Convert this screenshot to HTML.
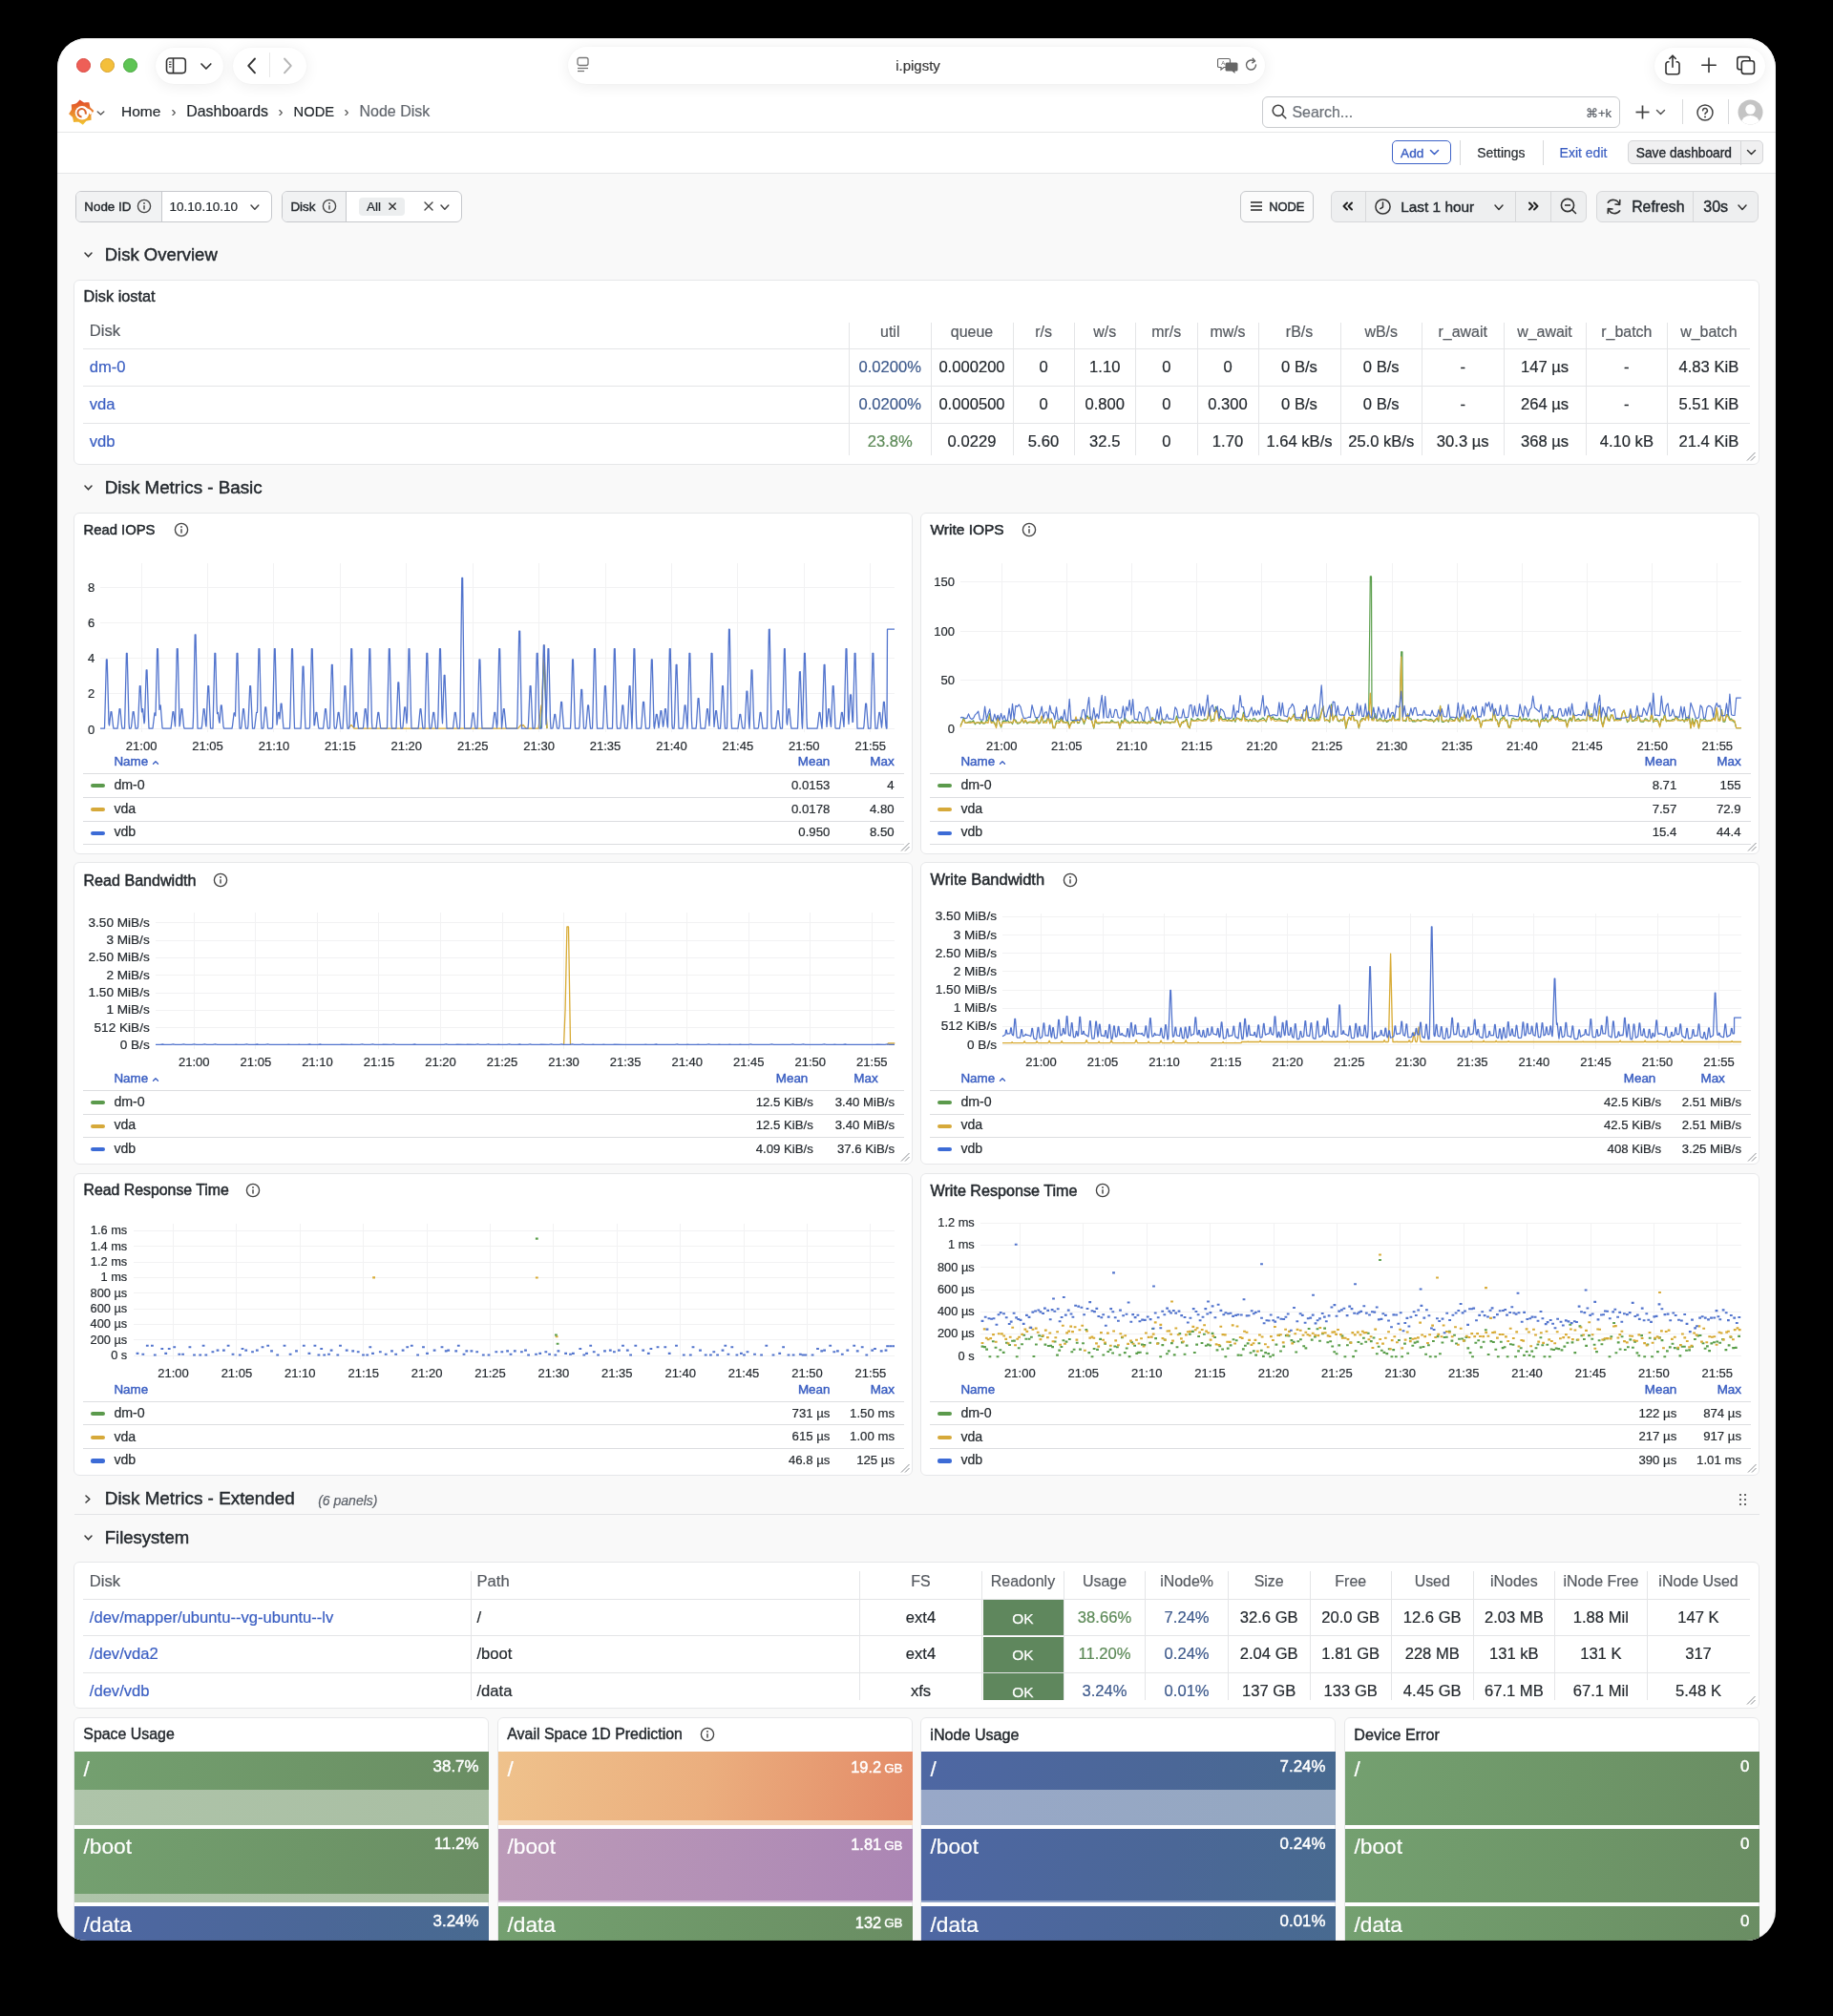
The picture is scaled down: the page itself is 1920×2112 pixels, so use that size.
<!DOCTYPE html><html><head><meta charset="utf-8"><style>
html,body{margin:0;padding:0;background:#000;width:1920px;height:2112px;overflow:hidden;}
.t{position:absolute;white-space:nowrap;line-height:1;font-family:"Liberation Sans", sans-serif;-webkit-text-stroke:0.2px currentColor;}
#win{position:absolute;left:60px;top:40px;width:1800px;height:1993px;border-radius:31px;overflow:hidden;background:#f9f9f9;}
#abs{position:absolute;left:-60px;top:-40px;width:1920px;height:2112px;will-change:transform;}
</style></head><body><div id="win"><div id="abs">
<div style="position:absolute;left:60.00px;top:40.00px;width:1800.00px;height:141.00px;background:#ffffff;"></div>
<div style="position:absolute;left:60.00px;top:138.00px;width:1800.00px;height:1.00px;background:#e6e7e8;"></div>
<div style="position:absolute;left:60.00px;top:181.00px;width:1800.00px;height:1.00px;background:#e6e7e8;"></div>
<div style="position:absolute;left:80.00px;top:60.80px;width:15.00px;height:15.00px;border-radius:50%;background:#ee5f57;box-sizing:border-box;border:0.5px solid #d9473f;"></div>
<div style="position:absolute;left:104.80px;top:60.80px;width:15.00px;height:15.00px;border-radius:50%;background:#f4bf3a;box-sizing:border-box;border:0.5px solid #d8a12c;"></div>
<div style="position:absolute;left:129.10px;top:60.80px;width:15.00px;height:15.00px;border-radius:50%;background:#5ec454;box-sizing:border-box;border:0.5px solid #49a83f;"></div>
<div style="position:absolute;left:163.00px;top:49.50px;width:71.00px;height:38.00px;background:#ffffff;border-radius:20px;box-shadow:0 2px 16px rgba(0,0,0,0.075),0 0 2px rgba(0,0,0,0.03);"></div>
<div style="position:absolute;left:243.70px;top:49.50px;width:77.00px;height:38.00px;background:#ffffff;border-radius:20px;box-shadow:0 2px 16px rgba(0,0,0,0.075),0 0 2px rgba(0,0,0,0.03);"></div>
<div style="position:absolute;left:595.00px;top:49.00px;width:730.00px;height:39.00px;background:#ffffff;border-radius:20px;box-shadow:0 2px 16px rgba(0,0,0,0.075),0 0 2px rgba(0,0,0,0.03);"></div>
<div style="position:absolute;left:1733.00px;top:49.50px;width:116.00px;height:38.00px;background:#ffffff;border-radius:20px;box-shadow:0 2px 16px rgba(0,0,0,0.075),0 0 2px rgba(0,0,0,0.03);"></div>
<svg style="position:absolute;left:172.50px;top:59.00px;" width="24.00" height="20.00" viewBox="0 0 24.00 20.00"><rect x="1.5" y="2" width="19.8" height="15.6" rx="3.3" fill="none" stroke="#333333" stroke-width="1.6"/><line x1="8.5" y1="2" x2="8.5" y2="18" stroke="#333333" stroke-width="1.6"/><line x1="4" y1="6" x2="6.5" y2="6" stroke="#333333" stroke-width="1.1"/><line x1="4" y1="8.5" x2="6.5" y2="8.5" stroke="#333333" stroke-width="1.1"/><line x1="4" y1="11" x2="6.5" y2="11" stroke="#333333" stroke-width="1.1"/></svg>
<svg style="position:absolute;left:208.50px;top:63.50px;" width="14.00" height="12.00" viewBox="0 0 14.00 12.00"><polyline points="2,3 6.9,8 11.8,3" fill="none" stroke="#333333" stroke-width="1.7" stroke-linecap="round" stroke-linejoin="round"/></svg>
<svg style="position:absolute;left:255.50px;top:59.00px;" width="16.00" height="20.00" viewBox="0 0 16.00 20.00"><polyline points="11,2.5 4.2,9.9 11,17.3" fill="none" stroke="#333333" stroke-width="1.9" stroke-linecap="round" stroke-linejoin="round"/></svg>
<div style="position:absolute;left:282.00px;top:55.00px;width:1.00px;height:26.00px;background:#e8e8e8;"></div>
<svg style="position:absolute;left:293.00px;top:59.00px;" width="16.00" height="20.00" viewBox="0 0 16.00 20.00"><polyline points="5,2.5 11.8,9.9 5,17.3" fill="none" stroke="#b5b5b5" stroke-width="1.9" stroke-linecap="round" stroke-linejoin="round"/></svg>
<svg style="position:absolute;left:603.00px;top:59.00px;" width="16.00" height="18.00" viewBox="0 0 16.00 18.00"><rect x="2" y="1.5" width="11" height="8" rx="2" fill="none" stroke="#777" stroke-width="1.3"/><line x1="2" y1="12.5" x2="13" y2="12.5" stroke="#777" stroke-width="1.3"/><line x1="2" y1="15.5" x2="9" y2="15.5" stroke="#777" stroke-width="1.3"/></svg>
<div class="t" style="top:60.80px;font-size:15.00px;color:#3a3a3a;left:461.50px;width:1000px;text-align:center;">i.pigsty</div>
<svg style="position:absolute;left:1275.00px;top:59.00px;" width="24.00" height="18.00" viewBox="0 0 24.00 18.00"><path d="M2 2.5h10a1.5 1.5 0 0 1 1.5 1.5v6a1.5 1.5 0 0 1-1.5 1.5H7l-3 2.5v-2.5H2A1.5 1.5 0 0 1 .5 10V4A1.5 1.5 0 0 1 2 2.5z" fill="none" stroke="#666" stroke-width="1.2"/><path d="M10 6.5h10a1.5 1.5 0 0 1 1.5 1.5v6a1.5 1.5 0 0 1-1.5 1.5h-1.5v2.5l-3-2.5H10A1.5 1.5 0 0 1 8.5 14V8A1.5 1.5 0 0 1 10 6.5z" fill="#666"/><text x="4.2" y="9" font-size="6" fill="#666" font-family="Liberation Sans">A</text></svg>
<svg style="position:absolute;left:1302.00px;top:59.00px;" width="18.00" height="18.00" viewBox="0 0 18.00 18.00"><path d="M13.5 9a5 5 0 1 1-2.2-4.1" fill="none" stroke="#666" stroke-width="1.4" stroke-linecap="round"/><polyline points="10.2,2.2 12.6,4.9 9.8,6.8" fill="none" stroke="#666" stroke-width="1.4" stroke-linecap="round" stroke-linejoin="round"/></svg>
<svg style="position:absolute;left:1741.50px;top:55.00px;" width="20.00" height="26.00" viewBox="0 0 20.00 26.00"><path d="M6.5 9.8H5.2a2.2 2.2 0 0 0-2.2 2.2v8.6a2.2 2.2 0 0 0 2.2 2.2h9.6a2.2 2.2 0 0 0 2.2-2.2V12a2.2 2.2 0 0 0-2.2-2.2h-1.3" fill="none" stroke="#333333" stroke-width="1.6"/><line x1="10" y1="3.5" x2="10" y2="15.3" stroke="#333333" stroke-width="1.6" stroke-linecap="round"/><polyline points="6.8,6.5 10,3.2 13.2,6.5" fill="none" stroke="#333333" stroke-width="1.6" stroke-linecap="round" stroke-linejoin="round"/></svg>
<svg style="position:absolute;left:1780.50px;top:59.00px;" width="18.00" height="18.00" viewBox="0 0 18.00 18.00"><line x1="9" y1="2" x2="9" y2="16.5" stroke="#333333" stroke-width="1.6" stroke-linecap="round"/><line x1="1.8" y1="9.2" x2="16.2" y2="9.2" stroke="#333333" stroke-width="1.6" stroke-linecap="round"/></svg>
<svg style="position:absolute;left:1817.00px;top:57.00px;" width="23.00" height="23.00" viewBox="0 0 23.00 23.00"><rect x="2.8" y="2.6" width="13.2" height="13.2" rx="2.6" fill="#fff" stroke="#333333" stroke-width="1.6"/><rect x="7.3" y="6.8" width="13.2" height="13.6" rx="2.6" fill="#fff" stroke="#333333" stroke-width="1.6"/></svg>
<svg style="position:absolute;left:71.50px;top:104.30px;" width="27.00" height="27.00" viewBox="0 0 27.00 27.00"><defs><linearGradient id="lg" x1="0" y1="0" x2="0" y2="1"><stop offset="0" stop-color="#e0482a"/><stop offset="0.55" stop-color="#eb8a2c"/><stop offset="1" stop-color="#f2c833"/></linearGradient></defs><path fill="url(#lg)" d="M11.59 0.50 L14.05 2.13 L16.03 3.39 L18.38 3.33 L21.33 3.20 L21.91 6.09 L22.43 8.38 L24.12 10.00 L26.30 11.99 L24.67 14.45 L23.41 16.43 L23.47 18.78 L23.60 21.73 L20.71 22.31 L18.42 22.83 L16.80 24.52 L14.81 26.70 L12.35 25.07 L10.37 23.81 L8.02 23.87 L5.07 24.00 L4.49 21.11 L3.97 18.82 L2.28 17.20 L0.10 15.21 L1.73 12.75 L2.99 10.77 L2.93 8.42 L2.80 5.47 L5.69 4.89 L7.98 4.37 L9.60 2.68Z"/><circle cx="14" cy="14.3" r="7.3" fill="#fff"/><path d="M19.3 11.2 A6 6 0 0 1 23.6 15.5" fill="none" stroke="#fff" stroke-width="3.2"/><path d="M17.6 15.6 A4.2 4.2 0 1 0 13.6 18.4" fill="none" stroke="#d9652c" stroke-width="2"/></svg>
<svg style="position:absolute;left:101.00px;top:114.50px;" width="9.00" height="7.00" viewBox="0 0 9.00 7.00"><polyline points="1.2,2 4.5,5 7.8,2" fill="none" stroke="#555" stroke-width="1.4" stroke-linecap="round" stroke-linejoin="round"/></svg>
<div class="t" style="top:109.18px;font-size:15.50px;color:#24292e;left:127.00px;">Home</div>
<div class="t" style="top:108.80px;font-size:15.00px;color:#555;left:-318.00px;width:1000px;text-align:center;">›</div>
<div class="t" style="top:108.84px;font-size:15.90px;color:#24292e;left:195.30px;">Dashboards</div>
<div class="t" style="top:108.80px;font-size:15.00px;color:#555;left:-206.00px;width:1000px;text-align:center;">›</div>
<div class="t" style="top:109.86px;font-size:14.70px;color:#24292e;left:307.60px;">NODE</div>
<div class="t" style="top:108.80px;font-size:15.00px;color:#555;left:-137.00px;width:1000px;text-align:center;">›</div>
<div class="t" style="top:108.76px;font-size:16.00px;color:#62676e;left:376.50px;">Node Disk</div>
<div style="position:absolute;left:1322.00px;top:101.00px;width:375.00px;height:33.00px;box-sizing:border-box;border:1px solid #c9cbce;border-radius:6px;background:#fff;"></div>
<svg style="position:absolute;left:1331.00px;top:108.00px;" width="18.00" height="18.00" viewBox="0 0 18.00 18.00"><circle cx="7.8" cy="7.8" r="5.6" fill="none" stroke="#444" stroke-width="1.6"/><line x1="12" y1="12" x2="15.8" y2="15.8" stroke="#444" stroke-width="1.6" stroke-linecap="round"/></svg>
<div class="t" style="top:109.84px;font-size:15.90px;color:#6b7077;left:1353.50px;">Search...</div>
<div class="t" style="top:111.50px;font-size:13.00px;color:#5b6068;left:688.00px;width:1000px;text-align:right;">⌘+k</div>
<svg style="position:absolute;left:1711.00px;top:108.00px;" width="19.00" height="19.00" viewBox="0 0 19.00 19.00"><line x1="9.5" y1="2.5" x2="9.5" y2="16.5" stroke="#444" stroke-width="1.7"/><line x1="2.5" y1="9.5" x2="16.5" y2="9.5" stroke="#444" stroke-width="1.7"/></svg>
<svg style="position:absolute;left:1734.00px;top:113.00px;" width="11.00" height="9.00" viewBox="0 0 11.00 9.00"><polyline points="1.5,2.5 5.5,6.5 9.5,2.5" fill="none" stroke="#555" stroke-width="1.5" stroke-linecap="round" stroke-linejoin="round"/></svg>
<div style="position:absolute;left:1761.50px;top:104.00px;width:1.00px;height:26.00px;background:#d8d9db;"></div>
<svg style="position:absolute;left:1776.00px;top:108.00px;" width="20.00" height="20.00" viewBox="0 0 20.00 20.00"><circle cx="10" cy="10" r="8" fill="none" stroke="#444" stroke-width="1.5"/><path d="M7.6 7.8a2.4 2.4 0 1 1 3.4 2.2c-.7.4-1 .8-1 1.6" fill="none" stroke="#444" stroke-width="1.5" stroke-linecap="round"/><circle cx="10" cy="14.4" r="1" fill="#444"/></svg>
<div style="position:absolute;left:1809.50px;top:104.00px;width:1.00px;height:26.00px;background:#d8d9db;"></div>
<svg style="position:absolute;left:1820.00px;top:104.00px;" width="27.00" height="27.00" viewBox="0 0 27.00 27.00"><defs><clipPath id="av"><circle cx="13.5" cy="13.5" r="13"/></clipPath></defs><circle cx="13.5" cy="13.5" r="13" fill="#c4c4c4"/><g clip-path="url(#av)"><circle cx="13.5" cy="10.5" r="5.2" fill="#fff"/><ellipse cx="13.5" cy="25" rx="9.5" ry="8" fill="#fff"/></g></svg>
<div style="position:absolute;left:1458.30px;top:147.30px;width:62.00px;height:25.20px;box-sizing:border-box;border:1px solid #3d62c8;border-radius:5px;"></div>
<div class="t" style="top:154.00px;font-size:13.70px;color:#3a5ec2;left:1467.00px;-webkit-text-stroke:0.35px #3a5ec2;">Add</div>
<svg style="position:absolute;left:1497.00px;top:155.00px;" width="11.00" height="9.00" viewBox="0 0 11.00 9.00"><polyline points="1.5,2.5 5.5,6.5 9.5,2.5" fill="none" stroke="#3d62c8" stroke-width="1.6" stroke-linecap="round" stroke-linejoin="round"/></svg>
<div style="position:absolute;left:1529.00px;top:147.00px;width:1.00px;height:26.00px;background:#d8d9db;"></div>
<div class="t" style="top:153.59px;font-size:13.95px;color:#24292e;left:1547.20px;">Settings</div>
<div style="position:absolute;left:1616.00px;top:147.00px;width:1.00px;height:26.00px;background:#d8d9db;"></div>
<div class="t" style="top:152.85px;font-size:14.00px;color:#3a5ec2;left:1633.60px;">Exit edit</div>
<div style="position:absolute;left:1705.30px;top:147.30px;width:141.40px;height:25.20px;box-sizing:border-box;border:1px solid #d5d6d8;border-radius:5px;background:#f0f0f1;"></div>
<div style="position:absolute;left:1822.50px;top:147.50px;width:1.00px;height:25.00px;background:#d5d6d8;"></div>
<div class="t" style="top:154.06px;font-size:13.75px;color:#24292e;left:1713.80px;-webkit-text-stroke:0.35px #24292e;">Save dashboard</div>
<svg style="position:absolute;left:1829.00px;top:155.00px;" width="11.00" height="9.00" viewBox="0 0 11.00 9.00"><polyline points="1.5,2.5 5.5,6.5 9.5,2.5" fill="none" stroke="#333" stroke-width="1.5" stroke-linecap="round" stroke-linejoin="round"/></svg>
<div style="position:absolute;left:78.50px;top:199.80px;width:206.00px;height:33.00px;box-sizing:border-box;border:1px solid #c6c8cc;border-radius:6px;background:#fff;"></div>
<div style="position:absolute;left:79.50px;top:200.80px;width:89.00px;height:31.00px;background:#f1f2f3;border-radius:5px 0 0 5px;border-right:1px solid #c6c8cc;"></div>
<div class="t" style="top:209.86px;font-size:13.40px;color:#24292e;left:88.30px;-webkit-text-stroke:0.40px #24292e;">Node ID</div>
<svg style="position:absolute;left:143.20px;top:208.20px;" width="16.00" height="16.00" viewBox="0 0 16.00 16.00"><circle cx="8" cy="8" r="6.60" fill="none" stroke="#444" stroke-width="1.35"/><line x1="8" y1="7.7" x2="8" y2="10.9" stroke="#444" stroke-width="1.45" stroke-linecap="round"/><circle cx="8" cy="5.0" r="0.9" fill="#444"/></svg>
<div class="t" style="top:209.87px;font-size:13.50px;color:#24292e;left:177.60px;">10.10.10.10</div>
<svg style="position:absolute;left:260.80px;top:212.66px;" width="11.80" height="8.29" viewBox="0 0 11.80 8.29"><polyline points="2,2 5.90,6.29 9.80,2" fill="none" stroke="#444" stroke-width="1.50" stroke-linecap="round" stroke-linejoin="round"/></svg>
<div style="position:absolute;left:295.00px;top:199.80px;width:189.00px;height:33.00px;box-sizing:border-box;border:1px solid #c6c8cc;border-radius:6px;background:#fff;"></div>
<div style="position:absolute;left:296.00px;top:200.80px;width:66.00px;height:31.00px;background:#f1f2f3;border-radius:5px 0 0 5px;border-right:1px solid #c6c8cc;"></div>
<div class="t" style="top:209.86px;font-size:13.40px;color:#24292e;left:304.40px;-webkit-text-stroke:0.40px #24292e;">Disk</div>
<svg style="position:absolute;left:337.20px;top:208.20px;" width="16.00" height="16.00" viewBox="0 0 16.00 16.00"><circle cx="8" cy="8" r="6.60" fill="none" stroke="#444" stroke-width="1.35"/><line x1="8" y1="7.7" x2="8" y2="10.9" stroke="#444" stroke-width="1.45" stroke-linecap="round"/><circle cx="8" cy="5.0" r="0.9" fill="#444"/></svg>
<div style="position:absolute;left:375.70px;top:207.00px;width:48.00px;height:18.60px;background:#eceeef;border-radius:4px;"></div>
<div class="t" style="top:209.57px;font-size:13.50px;color:#24292e;left:384.00px;">All</div>
<svg style="position:absolute;left:406.20px;top:211.20px;" width="10.20" height="10.20" viewBox="0 0 10.20 10.20"><line x1="2" y1="2" x2="8.20" y2="8.20" stroke="#333" stroke-width="1.50" stroke-linecap="round"/><line x1="8.20" y1="2" x2="2" y2="8.20" stroke="#333" stroke-width="1.50" stroke-linecap="round"/></svg>
<svg style="position:absolute;left:443.00px;top:210.30px;" width="12.00" height="12.00" viewBox="0 0 12.00 12.00"><line x1="2" y1="2" x2="10.00" y2="10.00" stroke="#444" stroke-width="1.40" stroke-linecap="round"/><line x1="10.00" y1="2" x2="2" y2="10.00" stroke="#444" stroke-width="1.40" stroke-linecap="round"/></svg>
<svg style="position:absolute;left:460.40px;top:212.66px;" width="11.80" height="8.29" viewBox="0 0 11.80 8.29"><polyline points="2,2 5.90,6.29 9.80,2" fill="none" stroke="#444" stroke-width="1.50" stroke-linecap="round" stroke-linejoin="round"/></svg>
<div style="position:absolute;left:1298.60px;top:199.80px;width:77.00px;height:33.00px;box-sizing:border-box;border:1px solid #c5c7ca;border-radius:6px;background:#fbfbfb;"></div>
<svg style="position:absolute;left:1308.00px;top:208.00px;" width="16.00" height="16.00" viewBox="0 0 16.00 16.00"><line x1="2" y1="4" x2="14" y2="4" stroke="#333" stroke-width="1.6"/><line x1="2" y1="8" x2="14" y2="8" stroke="#333" stroke-width="1.6"/><line x1="2" y1="12" x2="14" y2="12" stroke="#333" stroke-width="1.6"/></svg>
<div class="t" style="top:210.58px;font-size:12.90px;color:#24292e;left:1329.20px;-webkit-text-stroke:0.45px #24292e;">NODE</div>
<div style="position:absolute;left:1393.90px;top:199.80px;width:268.20px;height:33.00px;box-sizing:border-box;border:1px solid #d7d8da;border-radius:6px;background:#eeeff0;"></div>
<div style="position:absolute;left:1429.60px;top:200.50px;width:1.00px;height:31.50px;background:#d7d8da;"></div>
<div style="position:absolute;left:1587.30px;top:200.50px;width:1.00px;height:31.50px;background:#d7d8da;"></div>
<div style="position:absolute;left:1623.60px;top:200.50px;width:1.00px;height:31.50px;background:#d7d8da;"></div>
<svg style="position:absolute;left:1402.00px;top:208.00px;" width="20.00" height="16.00" viewBox="0 0 20.00 16.00"><polyline points="9,4.5 5.5,8 9,11.5" fill="none" stroke="#222" stroke-width="2" stroke-linecap="round" stroke-linejoin="round"/><polyline points="14,4.5 10.5,8 14,11.5" fill="none" stroke="#222" stroke-width="2" stroke-linecap="round" stroke-linejoin="round"/></svg>
<svg style="position:absolute;left:1439.00px;top:207.00px;" width="19.00" height="19.00" viewBox="0 0 19.00 19.00"><circle cx="9.5" cy="9.5" r="7.6" fill="none" stroke="#333" stroke-width="1.5"/><polyline points="9.5,5 9.5,10 6.8,11.6" fill="none" stroke="#333" stroke-width="1.5" stroke-linecap="round" stroke-linejoin="round"/></svg>
<div class="t" style="top:209.26px;font-size:15.40px;color:#24292e;left:1467.20px;-webkit-text-stroke:0.40px #24292e;">Last 1 hour</div>
<svg style="position:absolute;left:1563.60px;top:212.60px;" width="12.00" height="8.40" viewBox="0 0 12.00 8.40"><polyline points="2,2 6.00,6.40 10.00,2" fill="none" stroke="#333" stroke-width="1.50" stroke-linecap="round" stroke-linejoin="round"/></svg>
<svg style="position:absolute;left:1596.00px;top:208.00px;" width="20.00" height="16.00" viewBox="0 0 20.00 16.00"><polyline points="6,4.5 9.5,8 6,11.5" fill="none" stroke="#222" stroke-width="2" stroke-linecap="round" stroke-linejoin="round"/><polyline points="11,4.5 14.5,8 11,11.5" fill="none" stroke="#222" stroke-width="2" stroke-linecap="round" stroke-linejoin="round"/></svg>
<svg style="position:absolute;left:1633.00px;top:206.00px;" width="20.00" height="20.00" viewBox="0 0 20.00 20.00"><circle cx="9" cy="9" r="6.6" fill="none" stroke="#333" stroke-width="1.6"/><line x1="6" y1="9" x2="12" y2="9" stroke="#333" stroke-width="1.6"/><line x1="13.8" y1="13.8" x2="17.5" y2="17.5" stroke="#333" stroke-width="1.6" stroke-linecap="round"/></svg>
<div style="position:absolute;left:1671.90px;top:199.80px;width:170.50px;height:33.00px;box-sizing:border-box;border:1px solid #d7d8da;border-radius:6px;background:#eeeff0;"></div>
<div style="position:absolute;left:1773.40px;top:200.50px;width:1.00px;height:31.50px;background:#d7d8da;"></div>
<svg style="position:absolute;left:1680.00px;top:206.00px;" width="21.00" height="21.00" viewBox="0 0 21.00 21.00"><path d="M16.3 8.2A6.8 6.8 0 0 0 4.3 6.2" fill="none" stroke="#333" stroke-width="1.6" stroke-linecap="round"/><polyline points="16.8,3.6 16.6,8.4 12,8" fill="none" stroke="#333" stroke-width="1.6" stroke-linecap="round" stroke-linejoin="round"/><path d="M4.7 12.8a6.8 6.8 0 0 0 12 2" fill="none" stroke="#333" stroke-width="1.6" stroke-linecap="round"/><polyline points="4.2,17.4 4.4,12.6 9,13" fill="none" stroke="#333" stroke-width="1.6" stroke-linecap="round" stroke-linejoin="round"/></svg>
<div class="t" style="top:208.93px;font-size:15.80px;color:#24292e;left:1709.20px;-webkit-text-stroke:0.40px #24292e;">Refresh</div>
<div class="t" style="top:209.26px;font-size:16.00px;color:#24292e;left:1784.30px;-webkit-text-stroke:0.40px #24292e;">30s</div>
<svg style="position:absolute;left:1818.70px;top:212.60px;" width="12.00" height="8.40" viewBox="0 0 12.00 8.40"><polyline points="2,2 6.00,6.40 10.00,2" fill="none" stroke="#333" stroke-width="1.50" stroke-linecap="round" stroke-linejoin="round"/></svg>
<svg style="position:absolute;left:86.80px;top:263.18px;" width="11.00" height="7.85" viewBox="0 0 11.00 7.85"><polyline points="2,2 5.50,5.85 9.00,2" fill="none" stroke="#333" stroke-width="1.50" stroke-linecap="round" stroke-linejoin="round"/></svg>
<div class="t" style="top:258.27px;font-size:18.47px;color:#24292e;left:109.80px;-webkit-text-stroke:0.45px #24292e;">Disk Overview</div>
<svg style="position:absolute;left:86.80px;top:507.37px;" width="11.00" height="7.85" viewBox="0 0 11.00 7.85"><polyline points="2,2 5.50,5.85 9.00,2" fill="none" stroke="#333" stroke-width="1.50" stroke-linecap="round" stroke-linejoin="round"/></svg>
<div class="t" style="top:502.19px;font-size:18.80px;color:#24292e;left:109.80px;-webkit-text-stroke:0.45px #24292e;">Disk Metrics - Basic</div>
<svg style="position:absolute;left:88.38px;top:1564.50px;" width="7.85" height="11.00" viewBox="0 0 7.85 11.00"><polyline points="2,2 5.85,5.50 2,9.00" fill="none" stroke="#333" stroke-width="1.50" stroke-linecap="round" stroke-linejoin="round"/></svg>
<div class="t" style="top:1560.85px;font-size:18.85px;color:#24292e;left:109.80px;-webkit-text-stroke:0.45px #24292e;">Disk Metrics - Extended</div>
<div class="t" style="top:1564.65px;font-size:14.00px;color:#5b6068;font-style:italic;left:333.20px;">(6 panels)</div>
<div style="position:absolute;left:77.50px;top:1586.00px;width:1765.00px;height:1.00px;background:#e3e4e6;"></div>
<div style="position:absolute;left:1821.70px;top:1564.50px;width:2.60px;height:2.60px;border-radius:50%;background:#333;"></div>
<div style="position:absolute;left:1821.70px;top:1569.50px;width:2.60px;height:2.60px;border-radius:50%;background:#333;"></div>
<div style="position:absolute;left:1821.70px;top:1574.60px;width:2.60px;height:2.60px;border-radius:50%;background:#333;"></div>
<div style="position:absolute;left:1826.80px;top:1564.50px;width:2.60px;height:2.60px;border-radius:50%;background:#333;"></div>
<div style="position:absolute;left:1826.80px;top:1569.50px;width:2.60px;height:2.60px;border-radius:50%;background:#333;"></div>
<div style="position:absolute;left:1826.80px;top:1574.60px;width:2.60px;height:2.60px;border-radius:50%;background:#333;"></div>
<svg style="position:absolute;left:86.80px;top:1606.88px;" width="11.00" height="7.85" viewBox="0 0 11.00 7.85"><polyline points="2,2 5.50,5.85 9.00,2" fill="none" stroke="#333" stroke-width="1.50" stroke-linecap="round" stroke-linejoin="round"/></svg>
<div class="t" style="top:1601.94px;font-size:18.50px;color:#24292e;left:109.80px;-webkit-text-stroke:0.45px #24292e;">Filesystem</div>
<div style="position:absolute;left:77.00px;top:293.00px;width:1766.00px;height:194.00px;box-sizing:border-box;background:#fff;border:1px solid #e6e7e9;border-radius:6px;"></div>
<div class="t" style="top:302.40px;font-size:16.30px;color:#24292e;left:87.50px;-webkit-text-stroke:0.42px #24292e;">Disk iostat</div>
<div style="position:absolute;left:86.90px;top:365.30px;width:1746.10px;height:1.00px;background:#e4e5e7;"></div>
<div style="position:absolute;left:86.90px;top:404.10px;width:1746.10px;height:1.00px;background:#e4e5e7;"></div>
<div style="position:absolute;left:86.90px;top:442.70px;width:1746.10px;height:1.00px;background:#e4e5e7;"></div>
<div style="position:absolute;left:889.00px;top:338.00px;width:1.00px;height:139.00px;background:#e4e5e7;"></div>
<div style="position:absolute;left:974.50px;top:338.00px;width:1.00px;height:139.00px;background:#e4e5e7;"></div>
<div style="position:absolute;left:1060.50px;top:338.00px;width:1.00px;height:139.00px;background:#e4e5e7;"></div>
<div style="position:absolute;left:1124.50px;top:338.00px;width:1.00px;height:139.00px;background:#e4e5e7;"></div>
<div style="position:absolute;left:1189.00px;top:338.00px;width:1.00px;height:139.00px;background:#e4e5e7;"></div>
<div style="position:absolute;left:1253.50px;top:338.00px;width:1.00px;height:139.00px;background:#e4e5e7;"></div>
<div style="position:absolute;left:1317.50px;top:338.00px;width:1.00px;height:139.00px;background:#e4e5e7;"></div>
<div style="position:absolute;left:1403.50px;top:338.00px;width:1.00px;height:139.00px;background:#e4e5e7;"></div>
<div style="position:absolute;left:1489.00px;top:338.00px;width:1.00px;height:139.00px;background:#e4e5e7;"></div>
<div style="position:absolute;left:1574.50px;top:338.00px;width:1.00px;height:139.00px;background:#e4e5e7;"></div>
<div style="position:absolute;left:1660.50px;top:338.00px;width:1.00px;height:139.00px;background:#e4e5e7;"></div>
<div style="position:absolute;left:1746.20px;top:338.00px;width:1.00px;height:139.00px;background:#e4e5e7;"></div>
<div class="t" style="top:339.35px;font-size:16.60px;color:#55595f;left:93.80px;">Disk</div>
<div class="t" style="top:339.91px;font-size:15.94px;color:#55595f;left:432.25px;width:1000px;text-align:center;">util</div>
<div class="t" style="top:339.91px;font-size:15.94px;color:#55595f;left:518.00px;width:1000px;text-align:center;">queue</div>
<div class="t" style="top:339.91px;font-size:15.94px;color:#55595f;left:593.00px;width:1000px;text-align:center;">r/s</div>
<div class="t" style="top:339.91px;font-size:15.94px;color:#55595f;left:657.25px;width:1000px;text-align:center;">w/s</div>
<div class="t" style="top:339.91px;font-size:15.94px;color:#55595f;left:721.75px;width:1000px;text-align:center;">mr/s</div>
<div class="t" style="top:339.91px;font-size:15.94px;color:#55595f;left:786.00px;width:1000px;text-align:center;">mw/s</div>
<div class="t" style="top:339.91px;font-size:15.94px;color:#55595f;left:861.00px;width:1000px;text-align:center;">rB/s</div>
<div class="t" style="top:339.91px;font-size:15.94px;color:#55595f;left:946.75px;width:1000px;text-align:center;">wB/s</div>
<div class="t" style="top:339.91px;font-size:15.94px;color:#55595f;left:1032.25px;width:1000px;text-align:center;">r_await</div>
<div class="t" style="top:339.91px;font-size:15.94px;color:#55595f;left:1118.00px;width:1000px;text-align:center;">w_await</div>
<div class="t" style="top:339.91px;font-size:15.94px;color:#55595f;left:1203.85px;width:1000px;text-align:center;">r_batch</div>
<div class="t" style="top:339.91px;font-size:15.94px;color:#55595f;left:1289.85px;width:1000px;text-align:center;">w_batch</div>
<div class="t" style="top:377.35px;font-size:16.60px;color:#3a5ec2;left:93.80px;">dm-0</div>
<div class="t" style="top:377.35px;font-size:16.60px;color:#3e5a8c;left:432.25px;width:1000px;text-align:center;">0.0200%</div>
<div class="t" style="top:377.35px;font-size:16.60px;color:#24292e;left:518.00px;width:1000px;text-align:center;">0.000200</div>
<div class="t" style="top:377.35px;font-size:16.60px;color:#24292e;left:593.00px;width:1000px;text-align:center;">0</div>
<div class="t" style="top:377.35px;font-size:16.60px;color:#24292e;left:657.25px;width:1000px;text-align:center;">1.10</div>
<div class="t" style="top:377.35px;font-size:16.60px;color:#24292e;left:721.75px;width:1000px;text-align:center;">0</div>
<div class="t" style="top:377.35px;font-size:16.60px;color:#24292e;left:786.00px;width:1000px;text-align:center;">0</div>
<div class="t" style="top:377.35px;font-size:16.60px;color:#24292e;left:861.00px;width:1000px;text-align:center;">0 B/s</div>
<div class="t" style="top:377.35px;font-size:16.60px;color:#24292e;left:946.75px;width:1000px;text-align:center;">0 B/s</div>
<div class="t" style="top:377.35px;font-size:16.60px;color:#24292e;left:1032.25px;width:1000px;text-align:center;">-</div>
<div class="t" style="top:377.35px;font-size:16.60px;color:#24292e;left:1118.00px;width:1000px;text-align:center;">147 µs</div>
<div class="t" style="top:377.35px;font-size:16.60px;color:#24292e;left:1203.85px;width:1000px;text-align:center;">-</div>
<div class="t" style="top:377.35px;font-size:16.60px;color:#24292e;left:1289.85px;width:1000px;text-align:center;">4.83 KiB</div>
<div class="t" style="top:416.05px;font-size:16.60px;color:#3a5ec2;left:93.80px;">vda</div>
<div class="t" style="top:416.05px;font-size:16.60px;color:#3e5a8c;left:432.25px;width:1000px;text-align:center;">0.0200%</div>
<div class="t" style="top:416.05px;font-size:16.60px;color:#24292e;left:518.00px;width:1000px;text-align:center;">0.000500</div>
<div class="t" style="top:416.05px;font-size:16.60px;color:#24292e;left:593.00px;width:1000px;text-align:center;">0</div>
<div class="t" style="top:416.05px;font-size:16.60px;color:#24292e;left:657.25px;width:1000px;text-align:center;">0.800</div>
<div class="t" style="top:416.05px;font-size:16.60px;color:#24292e;left:721.75px;width:1000px;text-align:center;">0</div>
<div class="t" style="top:416.05px;font-size:16.60px;color:#24292e;left:786.00px;width:1000px;text-align:center;">0.300</div>
<div class="t" style="top:416.05px;font-size:16.60px;color:#24292e;left:861.00px;width:1000px;text-align:center;">0 B/s</div>
<div class="t" style="top:416.05px;font-size:16.60px;color:#24292e;left:946.75px;width:1000px;text-align:center;">0 B/s</div>
<div class="t" style="top:416.05px;font-size:16.60px;color:#24292e;left:1032.25px;width:1000px;text-align:center;">-</div>
<div class="t" style="top:416.05px;font-size:16.60px;color:#24292e;left:1118.00px;width:1000px;text-align:center;">264 µs</div>
<div class="t" style="top:416.05px;font-size:16.60px;color:#24292e;left:1203.85px;width:1000px;text-align:center;">-</div>
<div class="t" style="top:416.05px;font-size:16.60px;color:#24292e;left:1289.85px;width:1000px;text-align:center;">5.51 KiB</div>
<div class="t" style="top:454.75px;font-size:16.60px;color:#3a5ec2;left:93.80px;">vdb</div>
<div class="t" style="top:454.75px;font-size:16.60px;color:#5d8a58;left:432.25px;width:1000px;text-align:center;">23.8%</div>
<div class="t" style="top:454.75px;font-size:16.60px;color:#24292e;left:518.00px;width:1000px;text-align:center;">0.0229</div>
<div class="t" style="top:454.75px;font-size:16.60px;color:#24292e;left:593.00px;width:1000px;text-align:center;">5.60</div>
<div class="t" style="top:454.75px;font-size:16.60px;color:#24292e;left:657.25px;width:1000px;text-align:center;">32.5</div>
<div class="t" style="top:454.75px;font-size:16.60px;color:#24292e;left:721.75px;width:1000px;text-align:center;">0</div>
<div class="t" style="top:454.75px;font-size:16.60px;color:#24292e;left:786.00px;width:1000px;text-align:center;">1.70</div>
<div class="t" style="top:454.75px;font-size:16.60px;color:#24292e;left:861.00px;width:1000px;text-align:center;">1.64 kB/s</div>
<div class="t" style="top:454.75px;font-size:16.60px;color:#24292e;left:946.75px;width:1000px;text-align:center;">25.0 kB/s</div>
<div class="t" style="top:454.75px;font-size:16.60px;color:#24292e;left:1032.25px;width:1000px;text-align:center;">30.3 µs</div>
<div class="t" style="top:454.75px;font-size:16.60px;color:#24292e;left:1118.00px;width:1000px;text-align:center;">368 µs</div>
<div class="t" style="top:454.75px;font-size:16.60px;color:#24292e;left:1203.85px;width:1000px;text-align:center;">4.10 kB</div>
<div class="t" style="top:454.75px;font-size:16.60px;color:#24292e;left:1289.85px;width:1000px;text-align:center;">21.4 KiB</div>
<svg style="position:absolute;left:1827.50px;top:472.00px;" width="12.00" height="12.00" viewBox="0 0 12.00 12.00"><line x1="2" y1="10.5" x2="10.5" y2="2" stroke="#8a8d91" stroke-width="1"/><line x1="6" y1="10.5" x2="10.5" y2="6" stroke="#8a8d91" stroke-width="1"/></svg>
<div style="position:absolute;left:77.00px;top:537.00px;width:879.00px;height:358.00px;box-sizing:border-box;background:#fff;border:1px solid #e6e7e9;border-radius:6px;"></div>
<div class="t" style="top:547.65px;font-size:14.83px;color:#24292e;left:87.50px;-webkit-text-stroke:0.48px #24292e;">Read IOPS</div>
<svg style="position:absolute;left:181.60px;top:547.20px;" width="16.00" height="16.00" viewBox="0 0 16.00 16.00"><circle cx="8" cy="8" r="6.60" fill="none" stroke="#444" stroke-width="1.35"/><line x1="8" y1="7.7" x2="8" y2="10.9" stroke="#444" stroke-width="1.45" stroke-linecap="round"/><circle cx="8" cy="5.0" r="0.9" fill="#444"/></svg>
<div style="position:absolute;left:105.00px;top:615.00px;width:832.00px;height:1.00px;background:#f2f2f3;"></div>
<div class="t" style="top:609.10px;font-size:13.00px;color:#24292e;left:-900.70px;width:1000px;text-align:right;">8</div>
<div style="position:absolute;left:105.00px;top:652.10px;width:832.00px;height:1.00px;background:#f2f2f3;"></div>
<div class="t" style="top:646.20px;font-size:13.00px;color:#24292e;left:-900.70px;width:1000px;text-align:right;">6</div>
<div style="position:absolute;left:105.00px;top:689.20px;width:832.00px;height:1.00px;background:#f2f2f3;"></div>
<div class="t" style="top:683.30px;font-size:13.00px;color:#24292e;left:-900.70px;width:1000px;text-align:right;">4</div>
<div style="position:absolute;left:105.00px;top:726.30px;width:832.00px;height:1.00px;background:#f2f2f3;"></div>
<div class="t" style="top:720.40px;font-size:13.00px;color:#24292e;left:-900.70px;width:1000px;text-align:right;">2</div>
<div style="position:absolute;left:105.00px;top:763.40px;width:832.00px;height:1.00px;background:#f2f2f3;"></div>
<div class="t" style="top:757.50px;font-size:13.00px;color:#24292e;left:-900.70px;width:1000px;text-align:right;">0</div>
<div style="position:absolute;left:147.60px;top:590.40px;width:1.00px;height:177.10px;background:#f2f2f3;"></div>
<div class="t" style="top:774.50px;font-size:13.00px;color:#24292e;left:-351.90px;width:1000px;text-align:center;">21:00</div>
<div style="position:absolute;left:217.02px;top:590.40px;width:1.00px;height:177.10px;background:#f2f2f3;"></div>
<div class="t" style="top:774.50px;font-size:13.00px;color:#24292e;left:-282.48px;width:1000px;text-align:center;">21:05</div>
<div style="position:absolute;left:286.44px;top:590.40px;width:1.00px;height:177.10px;background:#f2f2f3;"></div>
<div class="t" style="top:774.50px;font-size:13.00px;color:#24292e;left:-213.06px;width:1000px;text-align:center;">21:10</div>
<div style="position:absolute;left:355.86px;top:590.40px;width:1.00px;height:177.10px;background:#f2f2f3;"></div>
<div class="t" style="top:774.50px;font-size:13.00px;color:#24292e;left:-143.64px;width:1000px;text-align:center;">21:15</div>
<div style="position:absolute;left:425.28px;top:590.40px;width:1.00px;height:177.10px;background:#f2f2f3;"></div>
<div class="t" style="top:774.50px;font-size:13.00px;color:#24292e;left:-74.22px;width:1000px;text-align:center;">21:20</div>
<div style="position:absolute;left:494.70px;top:590.40px;width:1.00px;height:177.10px;background:#f2f2f3;"></div>
<div class="t" style="top:774.50px;font-size:13.00px;color:#24292e;left:-4.80px;width:1000px;text-align:center;">21:25</div>
<div style="position:absolute;left:564.12px;top:590.40px;width:1.00px;height:177.10px;background:#f2f2f3;"></div>
<div class="t" style="top:774.50px;font-size:13.00px;color:#24292e;left:64.62px;width:1000px;text-align:center;">21:30</div>
<div style="position:absolute;left:633.54px;top:590.40px;width:1.00px;height:177.10px;background:#f2f2f3;"></div>
<div class="t" style="top:774.50px;font-size:13.00px;color:#24292e;left:134.04px;width:1000px;text-align:center;">21:35</div>
<div style="position:absolute;left:702.96px;top:590.40px;width:1.00px;height:177.10px;background:#f2f2f3;"></div>
<div class="t" style="top:774.50px;font-size:13.00px;color:#24292e;left:203.46px;width:1000px;text-align:center;">21:40</div>
<div style="position:absolute;left:772.38px;top:590.40px;width:1.00px;height:177.10px;background:#f2f2f3;"></div>
<div class="t" style="top:774.50px;font-size:13.00px;color:#24292e;left:272.88px;width:1000px;text-align:center;">21:45</div>
<div style="position:absolute;left:841.80px;top:590.40px;width:1.00px;height:177.10px;background:#f2f2f3;"></div>
<div class="t" style="top:774.50px;font-size:13.00px;color:#24292e;left:342.30px;width:1000px;text-align:center;">21:50</div>
<div style="position:absolute;left:911.22px;top:590.40px;width:1.00px;height:177.10px;background:#f2f2f3;"></div>
<div class="t" style="top:774.50px;font-size:13.00px;color:#24292e;left:411.72px;width:1000px;text-align:center;">21:55</div>
<svg style="position:absolute;left:103.00px;top:570.40px;overflow:visible;" width="836.00" height="197.10" viewBox="0 0 836.00 197.10"><path d="M463.5 193.1 L464 188.2 L466.8 118.9 L469.5 185.7 L470 193.1" fill="none" stroke="#5a9e4b" stroke-width="1.30" stroke-linejoin="round"/><path d="M262 193.1 L265 189.4 L268 193.1 L439.5 193.1 L440 192.7 L442.7 189.4 L443.5 190.4 L444 190.6 L445 189.4 L448 193.1 L461 193.1 L464 169 L464.5 172.8 L466.8 105.9 L469.5 184.4 L470 193.1" fill="none" stroke="#d8ab35" stroke-width="1.30" stroke-linejoin="round"/><path d="M2 193.1 L6.5 193.1 L7 175.1 L8 137 L8.4 120.8 L9 120.8 L9.2 120.8 L11 188.2 L11.5 190 L13.1 175.7 L13.9 175.7 L15.5 190.7 L16 193.1 L20 193.1 L20.5 189.5 L22 173.4 L22.1 172.7 L22.9 172.7 L24.5 190.2 L25 193.1 L27.5 193.1 L28 173.7 L29.4 114.3 L30.2 114.3 L32 187.6 L32.5 193.1 L34 193.1 L34.5 191.7 L36.2 175.7 L37.1 175.7 L38.5 189 L39 193.1 L41 193.1 L41.5 191.8 L43.3 148.7 L44.1 148.6 L45 168.7 L45.5 175.9 L45.8 172.7 L46.6 172.7 L48 187.8 L48.5 185.4 L50.2 132 L51 131.9 L52.5 181.4 L53 193.1 L56.5 193.1 L57 193 L58.9 177 L59.7 177 L60 179.6 L60.5 158.8 L61.6 109.6 L62.4 109.7 L63.5 157.1 L64 173.4 L64.3 169 L65.2 169 L67 192.5 L67.5 193.1 L76 193.1 L76.5 189.3 L78 175.7 L78.8 175.7 L80 186.8 L80.5 190.9 L82.3 109.6 L83.2 109.6 L85 190.9 L85.5 188.7 L87 172.7 L87.8 172.7 L89.5 191.1 L90 193.1 L99 193.1 L99.5 181.3 L101.2 94.9 L102 94.8 L103.5 173.9 L104 193.1 L108 193.1 L108.5 190.7 L110.2 172.7 L111 172.7 L112.5 189.1 L113 191 L114.8 148.6 L115.6 148.6 L117.5 192.9 L118 193.1 L120 193.1 L120.5 172.5 L121.9 114.4 L122 114.3 L122.7 114.3 L123 126.6 L124 168.1 L124.5 177.6 L124.6 176.4 L125.4 176.4 L126.5 185.8 L127 187.4 L128.4 169 L129.2 169 L131 191.2 L131.5 193.1 L140 193.1 L140.5 190.5 L142.1 177 L142.9 177 L143 177.9 L143.5 180.2 L145 117.9 L145.1 114.3 L145.9 114.3 L147.5 181.1 L148 193.1 L149.5 193.1 L150 190.3 L151.5 174.1 L151.6 172.7 L152.4 172.7 L154 189.5 L154.5 193.1 L156.5 193.1 L157 189.1 L158.5 153.9 L158.7 148.6 L159.5 148.6 L161 183.1 L161.5 193.1 L163.5 193.1 L164 190 L165.6 176.4 L166.4 176.4 L166.5 175.6 L168 109.7 L168.8 109.6 L170.5 184.2 L171 193.1 L172.5 193.1 L173 192.2 L174.8 170.9 L175.6 170.8 L177.5 192.8 L178 193.1 L182 193.1 L182.5 191.7 L184 125.8 L184.4 109.6 L185.2 109.7 L186.5 168.1 L187 189.2 L188.5 176.4 L189.3 176.4 L190 182.9 L190.5 176.5 L191.2 167.1 L192 167.2 L193.5 187.8 L194 193.1 L200.5 193.1 L201 181.9 L202.6 109.8 L203 109.6 L203.4 109.6 L203.5 112.1 L205 178 L205.5 193.1 L212 193.1 L212.5 182.9 L214.1 128.2 L214.9 128.2 L216.5 182.8 L217 193.1 L221 193.1 L221.5 192 L223 126.1 L223.4 109.6 L224 109.6 L224.2 109.8 L226 189.8 L226.5 189.7 L228 176.4 L228.8 176.4 L230.5 191.2 L231 193.1 L235.5 193.1 L236 189.5 L237.6 172.7 L238.4 172.7 L240 190.3 L240.5 193.1 L242 193.1 L242.5 192.4 L244.4 126.3 L245.2 126.3 L247 190.3 L247.5 193.1 L249 193.1 L249.5 191.3 L251.2 176.4 L252 176.4 L253.5 189.6 L254 193.1 L256 193.1 L256.5 184.2 L258 149 L258 148.6 L258.8 148.6 L260.5 188 L261 193.1 L262.5 193.1 L263 190.4 L264.5 124.5 L264.8 109.6 L265.5 109.6 L265.6 109.7 L267.5 191.4 L268 191.8 L269.8 176.4 L270.6 176.4 L272 189.2 L272.5 193.1 L277 193.1 L277.5 192 L279 175.9 L279.3 172.7 L280.1 172.7 L281.5 187.8 L282 193.1 L282.5 172.5 L283.9 109.7 L284.7 109.6 L286.5 187.3 L287 193.1 L291 193.1 L291.5 189 L292.9 176.4 L293.7 176.4 L295.5 191.9 L296 193.1 L302 193.1 L302.5 192.7 L304.4 109.6 L305.2 109.6 L307 189.1 L307.5 193.1 L312 193.1 L312.5 181.4 L313.5 156 L313.9 144.9 L314.7 144.9 L316.5 189.6 L317 193.1 L318.5 193.1 L319 191.4 L320.5 173.9 L320.8 170.8 L321.6 170.9 L323 187.7 L323.5 180.9 L325.1 109.7 L325.9 109.6 L327.5 179 L328 193.1 L335 193.1 L335.5 190.1 L337.1 172.7 L337.9 172.7 L339.5 189.6 L340 193.1 L342 193.1 L342.5 174.1 L343.9 114.4 L344 114.3 L344.7 114.3 L345 124.9 L346.5 187.2 L347 193.1 L348.5 193.1 L349 191.9 L350.8 176.4 L351.6 176.4 L353 189 L353.5 193.1 L355.5 193.1 L356 179.1 L357.6 109.7 L358.4 109.6 L360 180.7 L360.5 187.8 L362.2 137.5 L363 137.5 L364.5 180.8 L365 193.1 L371.5 193.1 L373.4 176.4 L374.2 176.4 L376 192.2 L376.5 193.1 L378.5 193.1 L379 182.1 L380.5 57.7 L380.8 35.4 L381.5 35.4 L381.6 35.6 L383 154.3 L383.5 193.1 L390 193.1 L390.5 191.6 L392.2 177 L393 177 L394.5 189.5 L395 193.1 L397 193.1 L397.5 179.5 L399 120.9 L399.5 120.8 L399.8 120.8 L400 126.7 L401.5 183.8 L402 193.1 L412.5 193.1 L413 192.8 L414.5 179.6 L414.9 176.4 L415.7 176.4 L417.5 192.5 L418 187.6 L419.5 121.7 L419.8 109.6 L420.5 109.6 L420.6 109.8 L422 172.2 L422.5 193.1 L423 187.9 L424.4 172.7 L425.2 172.7 L427 191.9 L427.5 193.1 L438.5 193.1 L439 183.7 L440.7 91.3 L440.8 91.1 L441.6 91.1 L443 167.4 L443.5 193.1 L450 193.1 L450.5 188 L452.2 148.6 L453 148.6 L454.5 184.1 L455 193.1 L457 193.1 L457.5 188.4 L459 126.1 L459.3 114.3 L460 114.3 L460.1 114.4 L461.5 173 L462 193.1 L464 193.1 L464.5 192.6 L466 123.8 L466.4 105.9 L467.2 106 L469 189 L469.5 174.3 L471 109.7 L471.8 109.6 L473.5 185.5 L474 193.1 L475.5 193.1 L476 192.7 L477.9 178.3 L478.6 178.3 L480.5 192.7 L481 193.1 L482.5 193.1 L483 190.5 L484.7 165.3 L485.5 165.3 L487 186.9 L487.5 193.1 L494.5 193.1 L495 183.1 L496.5 126 L496.6 120.8 L497.4 120.9 L499 180.3 L499.5 193.1 L503.5 193.1 L504 191 L505.8 152.3 L506.6 152.3 L508.5 193 L510.5 193.1 L511 190.3 L512.5 171.2 L512.7 169 L513.5 169 L515 188.3 L515.5 193.1 L517.5 193.1 L518 177.8 L519.5 109.7 L520.4 109.6 L522 182.1 L522.5 193.1 L528.5 193.1 L529 184.9 L530.5 148.6 L531.4 148.6 L533 187.2 L533.5 193.1 L538.5 193.1 L539 171.3 L540.4 109.8 L540.5 109.6 L541.2 109.6 L541.5 122.6 L543 188.5 L543.5 193.1 L546.5 193.1 L547 192.9 L548.9 169 L549.7 169 L551.5 192.1 L552 193.1 L554 193.1 L554.5 188.8 L556 153.6 L556.2 148.6 L557 148.6 L557 148.7 L558.5 183.4 L559 193.1 L559.5 176.7 L561 110.8 L561 109.6 L561.5 109.6 L561.8 109.8 L563.5 183.1 L564 193.1 L568.5 193.1 L569 189.5 L570.6 165.3 L571.5 165.3 L573 188 L573.5 193.1 L577 193.1 L577.5 191.5 L579 134.4 L579.4 120.8 L580.2 120.8 L582 190.9 L582.5 193.1 L584.4 178.3 L585.2 178.3 L587 192.3 L587.5 189 L589 174.6 L589.8 174.6 L591.5 191.3 L592 189.5 L593.5 173.4 L593.6 172.7 L594.4 172.7 L596 190.2 L596.5 192.1 L598 126.2 L598.4 109.6 L599.2 109.7 L601 189.7 L601.5 193.1 L603 193.1 L603.5 187.9 L605.2 126.4 L606 126.3 L607.5 177.2 L608 193.1 L612 193.1 L612.5 190.4 L614.2 169 L615 169 L616.5 188.2 L617 193.1 L617.5 176.6 L619 114.3 L619.8 114.3 L621.5 184.7 L622 193.1 L626 193.1 L626.5 189.2 L628 164.3 L628.2 161.6 L629 161.6 L630.5 187 L631 193.1 L635.5 193.1 L636 189.5 L637.6 172.7 L638.4 172.7 L640 190.3 L640.5 182.5 L642 120.3 L642.1 114.3 L642.5 114.3 L643 114.5 L644.5 178.8 L645 191.4 L646.7 174.6 L647.5 174.6 L649 188.9 L649.5 193.1 L651.5 193.1 L652 186.1 L653.6 148.6 L654.4 148.6 L656 186 L656.5 193.1 L658.5 193.1 L659 170 L660 115.3 L660.5 89.2 L661 89.2 L661.3 89.4 L663 183.4 L663.5 193.1 L670 193.1 L670.5 189.5 L671.9 178.3 L672.7 178.3 L674.5 192 L675 193.1 L677 193.1 L677.5 185.7 L679 154.9 L679 154.1 L679.8 154.2 L681.5 188.2 L682 193.1 L682.5 182.8 L684.1 131.9 L684.9 131.9 L686.5 184.1 L687 193.1 L691 193.1 L691.5 191.7 L693 178.6 L693.2 176.4 L694 176.4 L695.5 189.2 L696 193.1 L700.5 193.1 L701 166.4 L702.4 89.3 L703.2 89.2 L705 187 L705.5 193.1 L709.5 193.1 L710 189.9 L711.6 174.6 L712.4 174.6 L714 190.4 L714.5 193.1 L716.5 193.1 L717 173.4 L718.5 109.7 L719.2 109.6 L721 186.4 L721.5 189.2 L723 172.7 L723.8 172.7 L725.5 190.6 L726 193.1 L732.5 193.1 L733 180.3 L734.5 133.8 L735.3 133.7 L737 187.1 L737.5 193.1 L738 177.9 L739.5 114.4 L740.3 114.3 L740.5 121.2 L742 183.4 L742.5 193.1 L753 193.1 L753.5 190.6 L755 177.4 L755.1 176.4 L755.9 176.4 L757.5 190.3 L758 193.1 L758.5 184.5 L760 131.8 L760.2 126.3 L761 126.4 L762.5 180.6 L763 191.4 L764.7 172.7 L765.5 172.7 L767 188.4 L767.5 191.3 L769.3 148.6 L770.1 148.6 L772 192.6 L772.5 193.1 L776.5 193.1 L777 189.5 L778.5 176.4 L779.3 176.4 L781 191.4 L781.5 178.7 L783.1 109.7 L783.9 109.6 L785.5 181.2 L786 188.5 L787.6 157.9 L788.5 157.9 L790 186.5 L790.5 186.3 L792 124.1 L792.2 114.3 L793 114.3 L793 114.4 L794.5 175 L795 193.1 L801.5 193.1 L802 190.3 L803.7 167.2 L804.5 167.1 L806 187.7 L806.5 193.1 L809 193.1 L809.5 177.6 L811 115.4 L811 114.3 L811.5 114.3 L811.8 114.4 L813.5 183.7 L814 193.1 L816 193.1 L817.9 176.4 L818.7 176.4 L820.5 192.2 L821 187 L822.5 165.3 L823.3 165.3 L825 190.4 L825.5 193.1 L826 193.1 L826.5 89.2 L834 89.2" fill="none" stroke="#5274cd" stroke-width="1.30" stroke-linejoin="round"/></svg>
<div class="t" style="top:791.06px;font-size:13.40px;color:#3a5ec2;left:119.40px;-webkit-text-stroke:0.45px #3a5ec2;">Name</div>
<svg style="position:absolute;left:158.50px;top:795.90px;" width="8.00" height="6.00" viewBox="0 0 8.00 6.00"><polyline points="1.5,4.3 4,1.8 6.5,4.3" fill="none" stroke="#3a5ec2" stroke-width="1.3" stroke-linecap="round" stroke-linejoin="round"/></svg>
<div class="t" style="top:791.06px;font-size:13.40px;color:#3a5ec2;left:-130.70px;width:1000px;text-align:right;-webkit-text-stroke:0.45px #3a5ec2;">Mean</div>
<div class="t" style="top:791.06px;font-size:13.40px;color:#3a5ec2;left:-63.40px;width:1000px;text-align:right;-webkit-text-stroke:0.45px #3a5ec2;">Max</div>
<div style="position:absolute;left:87.00px;top:810.00px;width:859.50px;height:1.00px;background:#dcdde0;"></div>
<div style="position:absolute;left:87.00px;top:835.00px;width:859.50px;height:1.00px;background:#dcdde0;"></div>
<div style="position:absolute;left:87.00px;top:860.00px;width:859.50px;height:1.00px;background:#dcdde0;"></div>
<div style="position:absolute;left:87.00px;top:884.00px;width:859.50px;height:1.00px;background:#dcdde0;"></div>
<div style="position:absolute;left:95.40px;top:821.20px;width:15.00px;height:4.20px;border-radius:2.1px;background:#5b9a4c;"></div>
<div class="t" style="top:814.98px;font-size:14.20px;color:#24292e;left:119.40px;">dm-0</div>
<div class="t" style="top:815.83px;font-size:13.20px;color:#24292e;left:-130.70px;width:1000px;text-align:right;">0.0153</div>
<div class="t" style="top:815.83px;font-size:13.20px;color:#24292e;left:-63.40px;width:1000px;text-align:right;">4</div>
<div style="position:absolute;left:95.40px;top:845.90px;width:15.00px;height:4.20px;border-radius:2.1px;background:#d6a93a;"></div>
<div class="t" style="top:839.68px;font-size:14.20px;color:#24292e;left:119.40px;">vda</div>
<div class="t" style="top:840.53px;font-size:13.20px;color:#24292e;left:-130.70px;width:1000px;text-align:right;">0.0178</div>
<div class="t" style="top:840.53px;font-size:13.20px;color:#24292e;left:-63.40px;width:1000px;text-align:right;">4.80</div>
<div style="position:absolute;left:95.40px;top:870.60px;width:15.00px;height:4.20px;border-radius:2.1px;background:#3c6bd6;"></div>
<div class="t" style="top:864.38px;font-size:14.20px;color:#24292e;left:119.40px;">vdb</div>
<div class="t" style="top:865.23px;font-size:13.20px;color:#24292e;left:-130.70px;width:1000px;text-align:right;">0.950</div>
<div class="t" style="top:865.23px;font-size:13.20px;color:#24292e;left:-63.40px;width:1000px;text-align:right;">8.50</div>
<svg style="position:absolute;left:941.50px;top:880.50px;" width="12.00" height="12.00" viewBox="0 0 12.00 12.00"><line x1="2" y1="10.5" x2="10.5" y2="2" stroke="#8a8d91" stroke-width="1"/><line x1="6" y1="10.5" x2="10.5" y2="6" stroke="#8a8d91" stroke-width="1"/></svg>
<div style="position:absolute;left:964.00px;top:537.00px;width:879.00px;height:358.00px;box-sizing:border-box;background:#fff;border:1px solid #e6e7e9;border-radius:6px;"></div>
<div class="t" style="top:547.08px;font-size:15.49px;color:#24292e;left:974.50px;-webkit-text-stroke:0.48px #24292e;">Write IOPS</div>
<svg style="position:absolute;left:1069.60px;top:547.20px;" width="16.00" height="16.00" viewBox="0 0 16.00 16.00"><circle cx="8" cy="8" r="6.60" fill="none" stroke="#444" stroke-width="1.35"/><line x1="8" y1="7.7" x2="8" y2="10.9" stroke="#444" stroke-width="1.45" stroke-linecap="round"/><circle cx="8" cy="5.0" r="0.9" fill="#444"/></svg>
<div style="position:absolute;left:1006.00px;top:609.10px;width:818.00px;height:1.00px;background:#f2f2f3;"></div>
<div class="t" style="top:603.20px;font-size:13.00px;color:#24292e;left:0.00px;width:1000px;text-align:right;">150</div>
<div style="position:absolute;left:1006.00px;top:660.50px;width:818.00px;height:1.00px;background:#f2f2f3;"></div>
<div class="t" style="top:654.60px;font-size:13.00px;color:#24292e;left:0.00px;width:1000px;text-align:right;">100</div>
<div style="position:absolute;left:1006.00px;top:712.10px;width:818.00px;height:1.00px;background:#f2f2f3;"></div>
<div class="t" style="top:706.20px;font-size:13.00px;color:#24292e;left:0.00px;width:1000px;text-align:right;">50</div>
<div style="position:absolute;left:1006.00px;top:763.30px;width:818.00px;height:1.00px;background:#f2f2f3;"></div>
<div class="t" style="top:757.40px;font-size:13.00px;color:#24292e;left:0.00px;width:1000px;text-align:right;">0</div>
<div style="position:absolute;left:1048.70px;top:590.40px;width:1.00px;height:177.10px;background:#f2f2f3;"></div>
<div class="t" style="top:774.50px;font-size:13.00px;color:#24292e;left:549.20px;width:1000px;text-align:center;">21:00</div>
<div style="position:absolute;left:1116.85px;top:590.40px;width:1.00px;height:177.10px;background:#f2f2f3;"></div>
<div class="t" style="top:774.50px;font-size:13.00px;color:#24292e;left:617.35px;width:1000px;text-align:center;">21:05</div>
<div style="position:absolute;left:1185.00px;top:590.40px;width:1.00px;height:177.10px;background:#f2f2f3;"></div>
<div class="t" style="top:774.50px;font-size:13.00px;color:#24292e;left:685.50px;width:1000px;text-align:center;">21:10</div>
<div style="position:absolute;left:1253.15px;top:590.40px;width:1.00px;height:177.10px;background:#f2f2f3;"></div>
<div class="t" style="top:774.50px;font-size:13.00px;color:#24292e;left:753.65px;width:1000px;text-align:center;">21:15</div>
<div style="position:absolute;left:1321.30px;top:590.40px;width:1.00px;height:177.10px;background:#f2f2f3;"></div>
<div class="t" style="top:774.50px;font-size:13.00px;color:#24292e;left:821.80px;width:1000px;text-align:center;">21:20</div>
<div style="position:absolute;left:1389.45px;top:590.40px;width:1.00px;height:177.10px;background:#f2f2f3;"></div>
<div class="t" style="top:774.50px;font-size:13.00px;color:#24292e;left:889.95px;width:1000px;text-align:center;">21:25</div>
<div style="position:absolute;left:1457.60px;top:590.40px;width:1.00px;height:177.10px;background:#f2f2f3;"></div>
<div class="t" style="top:774.50px;font-size:13.00px;color:#24292e;left:958.10px;width:1000px;text-align:center;">21:30</div>
<div style="position:absolute;left:1525.75px;top:590.40px;width:1.00px;height:177.10px;background:#f2f2f3;"></div>
<div class="t" style="top:774.50px;font-size:13.00px;color:#24292e;left:1026.25px;width:1000px;text-align:center;">21:35</div>
<div style="position:absolute;left:1593.90px;top:590.40px;width:1.00px;height:177.10px;background:#f2f2f3;"></div>
<div class="t" style="top:774.50px;font-size:13.00px;color:#24292e;left:1094.40px;width:1000px;text-align:center;">21:40</div>
<div style="position:absolute;left:1662.05px;top:590.40px;width:1.00px;height:177.10px;background:#f2f2f3;"></div>
<div class="t" style="top:774.50px;font-size:13.00px;color:#24292e;left:1162.55px;width:1000px;text-align:center;">21:45</div>
<div style="position:absolute;left:1730.20px;top:590.40px;width:1.00px;height:177.10px;background:#f2f2f3;"></div>
<div class="t" style="top:774.50px;font-size:13.00px;color:#24292e;left:1230.70px;width:1000px;text-align:center;">21:50</div>
<div style="position:absolute;left:1798.35px;top:590.40px;width:1.00px;height:177.10px;background:#f2f2f3;"></div>
<div class="t" style="top:774.50px;font-size:13.00px;color:#24292e;left:1298.85px;width:1000px;text-align:center;">21:55</div>
<svg style="position:absolute;left:1004.00px;top:570.40px;overflow:visible;" width="822.00" height="197.10" viewBox="0 0 822.00 197.10"><path d="M2 190.2 L3.7 186.9 L5.4 182 L7.1 187.4 L8.8 187.4 L10.5 186.3 L12.2 185.9 L13.9 186.4 L15.6 184.8 L17.3 188.8 L19 186.9 L20.7 186.8 L22.4 188.4 L24.1 185.1 L25.9 188.2 L27.6 188 L29.3 184.5 L31 185 L32.7 177.7 L34.4 187.5 L36.1 184.4 L37.8 188.3 L39.5 191.2 L41.2 180.1 L42.9 187.9 L44.6 192 L46.3 185.4 L48 185.1 L49.7 185.4 L51.4 184.6 L53.1 186.7 L54.8 186.4 L56.5 188.5 L58.2 183.4 L59.9 184.4 L61.6 188.1 L63.3 187.8 L65 186.7 L66.7 184.1 L68.4 187.5 L70.1 184.9 L71.9 188 L73.6 186.4 L75.3 186.1 L77 186.4 L78.7 185.8 L80.4 186.4 L82.1 181.7 L83.8 188.2 L85.5 187.3 L87.2 181.4 L88.9 187.3 L90.6 185.1 L92.3 185.2 L94 179.9 L95.7 188 L97.4 183 L99.1 192 L100.8 192.8 L102.5 185.3 L104.2 184.8 L105.9 186.8 L107.6 182.7 L109.3 185.2 L111 186.7 L112.7 187.3 L114.4 184.8 L116.2 190.6 L117.9 188.2 L119.6 185 L121.3 187 L123 182.2 L124.7 187.6 L126.4 187.4 L128.1 181.1 L129.8 183.7 L131.5 188.6 L133.2 183.7 L134.9 179.7 L136.6 182.9 L138.3 180.8 L140 186.4 L141.7 193.1 L143.4 184.4 L145.1 187.7 L146.8 188.2 L148.5 187.6 L150.2 186.4 L151.9 186.6 L153.6 186.8 L155.3 186.2 L157 187.1 L158.7 187.1 L160.4 184.4 L162.2 186 L163.9 186.9 L165.6 186.5 L167.3 186.2 L169 193 L170.7 184.7 L172.4 187.7 L174.1 181.8 L175.8 184.8 L177.5 185.4 L179.2 187.9 L180.9 186.4 L182.6 184.4 L184.3 187.2 L186 187.3 L187.7 185.7 L189.4 187.7 L191.1 185.9 L192.8 187.3 L194.5 184.9 L196.2 187.3 L197.9 188.2 L199.6 185.4 L201.3 187.3 L203 181.7 L204.7 184.4 L206.4 185.1 L208.2 186.8 L209.9 186.6 L211.6 188.8 L213.3 182.7 L215 187.4 L216.7 186.2 L218.4 186.1 L220.1 186.8 L221.8 187.8 L223.5 186.1 L225.2 186.6 L226.9 185.7 L228.6 180.2 L230.3 187.1 L232 191.6 L233.7 187.7 L235.4 185.6 L237.1 185.5 L238.8 183.1 L240.5 189.9 L242.2 193 L243.9 182.5 L245.6 184.7 L247.3 185.2 L249 184.2 L250.7 182.7 L252.5 184.1 L254.2 184.5 L255.9 185 L257.6 183.1 L259.3 184.3 L261 182.8 L262.7 172.9 L264.4 185.9 L266.1 183.5 L267.8 183.5 L269.5 170.4 L271.2 174.1 L272.9 184 L274.6 180.3 L276.3 183.5 L278 183.4 L279.7 183.1 L281.4 185.4 L283.1 183.5 L284.8 185 L286.5 185.6 L288.2 182.3 L289.9 186.4 L291.6 181.9 L293.3 182.9 L295 183.3 L296.7 184.1 L298.5 176.2 L300.2 183.1 L301.9 183.4 L303.6 185.9 L305.3 183.4 L307 185.7 L308.7 182.8 L310.4 182.9 L312.1 185.4 L313.8 186.1 L315.5 183.8 L317.2 183.4 L318.9 182 L320.6 183.7 L322.3 186.1 L324 179.8 L325.7 180.1 L327.4 182.8 L329.1 180.8 L330.8 183.3 L332.5 183.3 L334.2 184.2 L335.9 182.5 L337.6 184.1 L339.3 184.6 L341 185.2 L342.7 185 L344.5 186.6 L346.2 182.1 L347.9 183 L349.6 181.8 L351.3 177.9 L353 183.4 L354.7 183.9 L356.4 183.9 L358.1 185 L359.8 178.9 L361.5 185.5 L363.2 183.6 L364.9 170.6 L366.6 182.5 L368.3 185.5 L370 182.7 L371.7 182.6 L373.4 185.6 L375.1 182 L376.8 184.1 L378.5 182 L380.2 175.7 L381.9 169.9 L383.6 185.1 L385.3 183.9 L387 184.4 L388.8 186.7 L390.5 167.8 L392.2 184.3 L393.9 180.6 L395.6 178.3 L397.3 185.1 L399 185.9 L400.7 183.7 L402.4 185.4 L404.1 180.8 L405.8 193.1 L407.5 185.8 L409.2 181.3 L410.9 183.9 L412.6 175 L414.3 184.1 L416 184.3 L417.7 185.1 L419.4 193 L421.1 184.7 L422.8 182.7 L424.5 183 L426.2 184.4 L427.9 177.1 L429.6 183.2 L431.3 33.8 L432.5 33.8 L433 183.6 L434.8 182.7 L436.5 177.5 L438.2 185.5 L439.9 184.3 L441.6 182.3 L443.3 184.4 L445 185.9 L446.7 183.5 L448.4 186.4 L450.1 185.6 L451.8 183.7 L453.5 185 L455.2 179.3 L456.9 183.7 L458.6 184.6 L460.3 183.1 L462 184 L463.7 112.9 L464.9 112.9 L465.4 184.8 L467.1 184.8 L468.8 185.6 L470.5 177.8 L472.2 182.9 L473.9 182.9 L475.6 186 L477.3 185.7 L479 185.8 L480.8 183.6 L482.5 184.7 L484.2 185.7 L485.9 184.2 L487.6 183.6 L489.3 183 L491 184.6 L492.7 184.2 L494.4 183.7 L496.1 184.2 L497.8 186.5 L499.5 183.9 L501.2 182.7 L502.9 186 L504.6 169.3 L506.3 186.1 L508 186.5 L509.7 185.3 L511.4 184 L513.1 186.5 L514.8 182.5 L516.5 183.3 L518.2 184.6 L519.9 184.4 L521.6 180.8 L523.3 182.6 L525.1 186.2 L526.8 181.2 L528.5 185.4 L530.2 176.1 L531.9 184.7 L533.6 184.7 L535.3 184.7 L537 182.3 L538.7 179.6 L540.4 182.9 L542.1 183.9 L543.8 181.5 L545.5 184.4 L547.2 192 L548.9 185 L550.6 185.5 L552.3 184 L554 184.6 L555.7 184.7 L557.4 183.2 L559.1 184.7 L560.8 173 L562.5 182.9 L564.2 184.7 L565.9 191.4 L567.6 183.2 L569.3 182.4 L571.1 179.5 L572.8 185 L574.5 183.9 L576.2 190.8 L577.9 192.2 L579.6 183 L581.3 182.4 L583 183.9 L584.7 183.6 L586.4 184.6 L588.1 180.9 L589.8 185.7 L591.5 182.9 L593.2 183.8 L594.9 182.6 L596.6 185.4 L598.3 183.2 L600 186.5 L601.7 184.4 L603.4 183.7 L605.1 185.8 L606.8 183.8 L608.5 191.8 L610.2 184.5 L611.9 182.8 L613.6 185.7 L615.3 182.2 L617.1 186.6 L618.8 184.1 L620.5 183.2 L622.2 179.3 L623.9 181.9 L625.6 183.6 L627.3 180.8 L629 183.5 L630.7 183.3 L632.4 184.3 L634.1 185.3 L635.8 183.9 L637.5 191.4 L639.2 184.3 L640.9 181.9 L642.6 185.7 L644.3 177 L646 185.4 L647.7 183.7 L649.4 182.9 L651.1 185.2 L652.8 184.2 L654.5 183.9 L656.2 184.3 L657.9 185.2 L659.6 173.3 L661.4 182.5 L663.1 177.6 L664.8 185.4 L666.5 183.2 L668.2 184.6 L669.9 185.4 L671.6 169.5 L673.3 184.9 L675 191 L676.7 182.3 L678.4 177.3 L680.1 182.2 L681.8 185.4 L683.5 178.8 L685.2 180 L686.9 185.1 L688.6 183.1 L690.3 183.7 L692 182.8 L693.7 184.5 L695.4 177.1 L697.1 174.3 L698.8 179.9 L700.5 186.6 L702.2 185.1 L703.9 176.9 L705.6 185.4 L707.4 185.1 L709.1 182.8 L710.8 182.1 L712.5 178.8 L714.2 185.8 L715.9 186.2 L717.6 186.2 L719.3 182.7 L721 183.3 L722.7 185.6 L724.4 184.8 L726.1 176.7 L727.8 186.7 L729.5 183.4 L731.2 183.1 L732.9 186 L734.6 190.6 L736.3 183 L738 184.7 L739.7 178 L741.4 185.8 L743.1 184.6 L744.8 185.4 L746.5 184.7 L748.2 183.5 L749.9 184 L751.6 180.3 L753.4 182.5 L755.1 185 L756.8 185 L758.5 183.5 L760.2 186.3 L761.9 182.4 L763.6 184.9 L765.3 179.4 L767 192.6 L768.7 182.6 L770.4 189.2 L772.1 183.4 L773.8 185.6 L775.5 193 L777.2 183.2 L778.9 185.2 L780.6 183 L782.3 183.3 L784 185.7 L785.7 184.9 L787.4 185.3 L789.1 183.7 L790.8 183.2 L792.5 183.6 L794.2 172.7 L795.9 183.2 L797.7 184.4 L799.4 173.6 L801.1 186.2 L802.8 186.1 L804.5 178.9 L806.2 178.4 L807.9 183.4 L809.6 183 L811.3 185.7 L813 186.4 L814.7 192.6 L816.4 192.6 L818.1 192.6 L819.8 192.6" fill="none" stroke="#5a9e4b" stroke-width="1.20" stroke-linejoin="round"/><path d="M2 191.9 L3.7 186.7 L5.4 183.7 L7.1 187.4 L8.8 187 L10.5 187.2 L12.2 187.4 L13.9 186.9 L15.6 186.6 L17.3 187.3 L19 187.4 L20.7 186.8 L22.4 187.2 L24.1 187.4 L25.9 187.3 L27.6 187.3 L29.3 186.6 L31 187.4 L32.7 180 L34.4 187.4 L36.1 186.7 L37.8 187.3 L39.5 192.6 L41.2 182.5 L42.9 187.1 L44.6 191.1 L46.3 186.7 L48 187.2 L49.7 186.9 L51.4 187 L53.1 187.1 L54.8 186.4 L56.5 187.4 L58.2 183 L59.9 186.7 L61.6 186.8 L63.3 187 L65 186.6 L66.7 182.8 L68.4 187.3 L70.1 184.1 L71.9 187 L73.6 187 L75.3 186.7 L77 187.2 L78.7 187.4 L80.4 187.1 L82.1 184 L83.8 187 L85.5 186.7 L87.2 180.2 L88.9 187.1 L90.6 186.7 L92.3 187.4 L94 180.5 L95.7 187.1 L97.4 182.8 L99.1 192.8 L100.8 192.5 L102.5 187 L104.2 187.3 L105.9 187.2 L107.6 183.7 L109.3 187.2 L111 187 L112.7 186.6 L114.4 187.1 L116.2 193 L117.9 186.8 L119.6 186.6 L121.3 187.1 L123 180.9 L124.7 186.8 L126.4 186.6 L128.1 182.5 L129.8 183 L131.5 187.1 L133.2 183 L134.9 181.5 L136.6 183.4 L138.3 182 L140 186.7 L141.7 192.3 L143.4 182.9 L145.1 187.4 L146.8 186.8 L148.5 187.1 L150.2 187.4 L151.9 186.5 L153.6 187.2 L155.3 187.3 L157 186.8 L158.7 187.1 L160.4 186.5 L162.2 186.8 L163.9 187 L165.6 187.2 L167.3 186.5 L169 192.8 L170.7 186.9 L172.4 187.1 L174.1 184.1 L175.8 186.7 L177.5 187.4 L179.2 187 L180.9 186.9 L182.6 186.9 L184.3 186.9 L186 186.5 L187.7 187.1 L189.4 187.1 L191.1 186.7 L192.8 186.5 L194.5 187.3 L196.2 186.9 L197.9 187.1 L199.6 186.7 L201.3 187.2 L203 182.4 L204.7 184.9 L206.4 187.3 L208.2 187.3 L209.9 186.7 L211.6 187.3 L213.3 183.2 L215 186.9 L216.7 187 L218.4 187.2 L220.1 187.1 L221.8 186.7 L223.5 186.6 L225.2 187 L226.9 186.8 L228.6 182.6 L230.3 186.8 L232 191.9 L233.7 186.5 L235.4 187.3 L237.1 185 L238.8 185 L240.5 191.6 L242.2 192.5 L243.9 184.6 L245.6 185.3 L247.3 185.4 L249 184.9 L250.7 185.1 L252.5 184.5 L254.2 185 L255.9 184.6 L257.6 185 L259.3 184.8 L261 182.6 L262.7 172.2 L264.4 185.3 L266.1 185.4 L267.8 185.2 L269.5 172.9 L271.2 176.4 L272.9 185.3 L274.6 182.1 L276.3 184.9 L278 185.2 L279.7 184.9 L281.4 184.6 L283.1 185.3 L284.8 184.7 L286.5 185.1 L288.2 184.5 L289.9 184.9 L291.6 182.5 L293.3 182.8 L295 185 L296.7 185.1 L298.5 178.4 L300.2 185.4 L301.9 184.6 L303.6 184.6 L305.3 184.6 L307 184.6 L308.7 185.3 L310.4 185 L312.1 185.1 L313.8 185.4 L315.5 185.2 L317.2 185 L318.9 184.6 L320.6 184.7 L322.3 185.1 L324 181.3 L325.7 178.8 L327.4 184.8 L329.1 182.4 L330.8 185 L332.5 185.4 L334.2 185 L335.9 184.8 L337.6 185.2 L339.3 185.1 L341 185.3 L342.7 184.9 L344.5 185.2 L346.2 181.2 L347.9 184.7 L349.6 181.2 L351.3 179.1 L353 185 L354.7 185.2 L356.4 184.5 L358.1 184.7 L359.8 178.4 L361.5 184.7 L363.2 184.7 L364.9 171.8 L366.6 184.8 L368.3 185.4 L370 184.9 L371.7 184.8 L373.4 185.2 L375.1 184.4 L376.8 185.1 L378.5 184.4 L380.2 177.4 L381.9 169.8 L383.6 184.7 L385.3 184.5 L387 184.9 L388.8 185.3 L390.5 169.8 L392.2 184.9 L393.9 181 L395.6 179.8 L397.3 184.6 L399 185.1 L400.7 184.5 L402.4 184.8 L404.1 180.6 L405.8 192.4 L407.5 184.5 L409.2 181.2 L410.9 184.5 L412.6 177.3 L414.3 185.2 L416 184.5 L417.7 185.2 L419.4 192.4 L421.1 185.1 L422.8 185.1 L424.5 182 L426.2 184.7 L427.9 178.4 L429.6 184.8 L431.3 156.1 L433 184.7 L434.8 185 L436.5 179.7 L438.2 185 L439.9 185 L441.6 184.9 L443.3 185 L445 185.1 L446.7 185.1 L448.4 185.1 L450.1 184.7 L451.8 184.4 L453.5 184.6 L455.2 180.7 L456.9 185.1 L458.6 184.4 L460.3 184.7 L462 185.1 L463.7 118.1 L465.4 185.1 L467.1 185 L468.8 184.5 L470.5 178.2 L472.2 185.3 L473.9 185 L475.6 184.7 L477.3 184.5 L479 185.4 L480.8 184.9 L482.5 184.9 L484.2 184.7 L485.9 184.4 L487.6 184.4 L489.3 184.5 L491 184.7 L492.7 185.3 L494.4 185 L496.1 185.2 L497.8 185.2 L499.5 185.2 L501.2 181.7 L502.9 184.7 L504.6 169.7 L506.3 184.6 L508 185.3 L509.7 185.4 L511.4 184.4 L513.1 185.4 L514.8 184.8 L516.5 185.3 L518.2 185.1 L519.9 185.3 L521.6 180.6 L523.3 185.1 L525.1 185.1 L526.8 181 L528.5 184.8 L530.2 178.1 L531.9 185.2 L533.6 184.9 L535.3 184.8 L537 184.4 L538.7 179.1 L540.4 184.6 L542.1 185.2 L543.8 181.8 L545.5 184.4 L547.2 192.2 L548.9 185.3 L550.6 185.3 L552.3 185.1 L554 184.7 L555.7 184.4 L557.4 184.9 L559.1 185 L560.8 173.4 L562.5 184.9 L564.2 185 L565.9 191.4 L567.6 185.3 L569.3 184.8 L571.1 181.2 L572.8 185.1 L574.5 185.2 L576.2 192.3 L577.9 191.9 L579.6 184.4 L581.3 184.8 L583 185.1 L584.7 184.8 L586.4 184.9 L588.1 182.1 L589.8 185.1 L591.5 184.6 L593.2 184.5 L594.9 185.1 L596.6 185.3 L598.3 184.5 L600 185.1 L601.7 184.6 L603.4 185.3 L605.1 185.3 L606.8 184.8 L608.5 191.2 L610.2 184.6 L611.9 185.4 L613.6 185 L615.3 184.4 L617.1 185.3 L618.8 184.9 L620.5 185 L622.2 181.2 L623.9 182 L625.6 184.5 L627.3 182.2 L629 185.1 L630.7 184.8 L632.4 185.2 L634.1 184.8 L635.8 185.3 L637.5 192.2 L639.2 185 L640.9 184.4 L642.6 184.7 L644.3 178.7 L646 185.2 L647.7 185.2 L649.4 185.2 L651.1 184.8 L652.8 185 L654.5 184.5 L656.2 184.8 L657.9 184.4 L659.6 174.3 L661.4 184.6 L663.1 178.8 L664.8 185 L666.5 184.9 L668.2 184.8 L669.9 184.5 L671.6 170.5 L673.3 185.3 L675 191.7 L676.7 184.8 L678.4 178.1 L680.1 184.6 L681.8 185.3 L683.5 180.4 L685.2 178.8 L686.9 184.8 L688.6 184.4 L690.3 185 L692 184.7 L693.7 184.5 L695.4 176.7 L697.1 174.2 L698.8 180.6 L700.5 185.1 L702.2 185.1 L703.9 178 L705.6 184.5 L707.4 184.8 L709.1 184.8 L710.8 184.4 L712.5 178.3 L714.2 185 L715.9 185.2 L717.6 185 L719.3 184.4 L721 184.8 L722.7 185.2 L724.4 185.3 L726.1 178 L727.8 185.3 L729.5 185.3 L731.2 185.1 L732.9 185.3 L734.6 191.9 L736.3 184.4 L738 184.5 L739.7 180.1 L741.4 185.2 L743.1 185 L744.8 185.2 L746.5 185 L748.2 185.3 L749.9 184.8 L751.6 181.2 L753.4 185 L755.1 184.4 L756.8 184.4 L758.5 184.5 L760.2 185.4 L761.9 184.8 L763.6 184.8 L765.3 179.7 L767 192.9 L768.7 184.5 L770.4 191.4 L772.1 184.7 L773.8 184.8 L775.5 193 L777.2 184.6 L778.9 184.5 L780.6 185 L782.3 185.4 L784 185.1 L785.7 184.8 L787.4 184.7 L789.1 185.1 L790.8 181.9 L792.5 184.9 L794.2 171.4 L795.9 185.1 L797.7 185.1 L799.4 174.5 L801.1 185.1 L802.8 184.7 L804.5 178.9 L806.2 181 L807.9 184.4 L809.6 185 L811.3 184.4 L813 185.3 L814.7 192.6 L816.4 192.6 L818.1 192.6 L819.8 192.6" fill="none" stroke="#d8ab35" stroke-width="1.20" stroke-linejoin="round"/><path d="M2 181.9 L3.7 181.4 L5.4 182 L7.1 182.6 L8.8 182.2 L10.5 177.9 L12.2 182.3 L13.9 183.4 L15.6 182.5 L17.3 178.9 L19 177.4 L20.7 175.1 L22.4 183.9 L24.1 184 L25.9 184.2 L27.6 170 L29.3 183.9 L31 177.9 L32.7 172.9 L34.4 184.9 L36.1 184.9 L37.8 178.1 L39.5 184.2 L41.2 179.3 L42.9 184.5 L44.6 177.3 L46.3 183.9 L48 179.6 L49.7 184.7 L51.4 184.4 L53.1 172.2 L54.8 184 L56.5 167.3 L58.2 183.5 L59.9 169.4 L61.6 170.3 L63.3 168.1 L65 170.7 L66.7 177.6 L68.4 182.6 L70.1 182.3 L71.9 182 L73.6 181.2 L75.3 181.6 L77 168.6 L78.7 175.2 L80.4 181.4 L82.1 182.1 L83.8 181.4 L85.5 177.5 L87.2 170.1 L88.9 182.5 L90.6 176.3 L92.3 175.8 L94 182.6 L95.7 169.2 L97.4 176.6 L99.1 177.4 L100.8 183.6 L102.5 170.9 L104.2 183.3 L105.9 183.8 L107.6 180.4 L109.3 183.9 L111 173.3 L112.7 184.6 L114.4 184.9 L116.2 162.3 L117.9 184.5 L119.6 184.5 L121.3 184.4 L123 184.9 L124.7 184.1 L126.4 184.6 L128.1 184 L129.8 174 L131.5 173.3 L133.2 183.3 L134.9 171.8 L136.6 160.5 L138.3 183.9 L140 183.8 L141.7 171.7 L143.4 182.8 L145.1 177.8 L146.8 182.7 L148.5 169.2 L150.2 158.3 L151.9 182.2 L153.6 159.6 L155.3 181.3 L157 181.9 L158.7 172.7 L160.4 181.3 L162.2 181.5 L163.9 173.3 L165.6 173.7 L167.3 181.8 L169 182.3 L170.7 181.6 L172.4 169.8 L174.1 183.1 L175.8 170.4 L177.5 174.7 L179.2 163.3 L180.9 179 L182.6 162.5 L184.3 183.5 L186 183.3 L187.7 184.4 L189.4 175.6 L191.1 177.2 L192.8 184.7 L194.5 184.6 L196.2 172.1 L197.9 170.5 L199.6 175.7 L201.3 184.6 L203 184.9 L204.7 184.2 L206.4 184.1 L208.2 172.8 L209.9 184 L211.6 170.6 L213.3 183.5 L215 183.9 L216.7 184 L218.4 178.2 L220.1 183.4 L221.8 182.8 L223.5 183.5 L225.2 183.3 L226.9 170.8 L228.6 173.4 L230.3 182 L232 181.9 L233.7 182 L235.4 172.8 L237.1 182 L238.8 181.6 L240.5 181.3 L242.2 169.1 L243.9 168.4 L245.6 181.2 L247.3 169.6 L249 179.4 L250.7 180.1 L252.5 167.3 L254.2 179.7 L255.9 170.1 L257.6 180.2 L259.3 170.8 L261 158.2 L262.7 180.2 L264.4 170.7 L266.1 168.5 L267.8 175.5 L269.5 173.5 L271.2 169.9 L272.9 182.3 L274.6 172.7 L276.3 173.7 L278 175.9 L279.7 182 L281.4 182.2 L283.1 182.1 L284.8 182.5 L286.5 181.7 L288.2 168.7 L289.9 182.3 L291.6 174.8 L293.3 176.3 L295 158.6 L296.7 170.7 L298.5 170.6 L300.2 180.5 L301.9 181.3 L303.6 180.3 L305.3 175.3 L307 170.9 L308.7 180 L310.4 174.1 L312.1 179.2 L313.8 174.2 L315.5 178.8 L317.2 170 L318.9 158.6 L320.6 179.8 L322.3 169.9 L324 172.7 L325.7 179.6 L327.4 179.8 L329.1 178.9 L330.8 178.9 L332.5 179.6 L334.2 179.6 L335.9 165.9 L337.6 179.7 L339.3 166.4 L341 179.9 L342.7 180.2 L344.5 180.9 L346.2 172.5 L347.9 171.1 L349.6 167.4 L351.3 170.4 L353 181.6 L354.7 181.9 L356.4 181.8 L358.1 181.7 L359.8 182.7 L361.5 173.6 L363.2 174.8 L364.9 169.3 L366.6 182.1 L368.3 181.5 L370 181.4 L371.7 171.3 L373.4 167.8 L375.1 182.1 L376.8 181.9 L378.5 167.4 L380.2 147.9 L381.9 173.8 L383.6 180.6 L385.3 180.8 L387 174 L388.8 168.9 L390.5 180.1 L392.2 165.2 L393.9 165.7 L395.6 179.6 L397.3 169.3 L399 178.7 L400.7 179.2 L402.4 178.8 L404.1 179.6 L405.8 174.5 L407.5 170.4 L409.2 179 L410.9 179.6 L412.6 179.5 L414.3 179.5 L416 179.1 L417.7 166.8 L419.4 179.6 L421.1 169.2 L422.8 180.3 L424.5 180.4 L426.2 167 L427.9 180.4 L429.6 174.8 L431.3 181.4 L433 182 L434.8 171.1 L436.5 181.8 L438.2 182.1 L439.9 170.6 L441.6 176.4 L443.3 181.8 L445 173.4 L446.7 182.5 L448.4 182.3 L450.1 171.8 L451.8 181.7 L453.5 176.9 L455.2 176.4 L456.9 181.6 L458.6 169.2 L460.3 170.9 L462 170.1 L463.7 154 L465.4 180.9 L467.1 169.3 L468.8 180.3 L470.5 179.6 L472.2 180.1 L473.9 171.8 L475.6 179.1 L477.3 171.9 L479 171.4 L480.8 179.7 L482.5 178.8 L484.2 178.7 L485.9 179.5 L487.6 174.3 L489.3 179.1 L491 179.1 L492.7 179.1 L494.4 179.9 L496.1 174.2 L497.8 179.4 L499.5 180.3 L501.2 180.4 L502.9 173.6 L504.6 180 L506.3 172.7 L508 180.2 L509.7 181 L511.4 180.9 L513.1 168.2 L514.8 181.3 L516.5 181.3 L518.2 181.3 L519.9 181.8 L521.6 181.8 L523.3 166.3 L525.1 181.9 L526.8 176.1 L528.5 168.2 L530.2 177.4 L531.9 181.9 L533.6 173.6 L535.3 181.8 L537 176.4 L538.7 170.5 L540.4 175.4 L542.1 169.7 L543.8 181.4 L545.5 180.6 L547.2 181 L548.9 170.3 L550.6 179.8 L552.3 166.6 L554 170.1 L555.7 165.5 L557.4 175.2 L559.1 167.2 L560.8 179.1 L562.5 172.3 L564.2 179.5 L565.9 179.1 L567.6 168.9 L569.3 179.6 L571.1 179.8 L572.8 178.8 L574.5 168.3 L576.2 179.9 L577.9 179.6 L579.6 179.6 L581.3 180.1 L583 180.1 L584.7 180.7 L586.4 180.7 L588.1 167.9 L589.8 176.1 L591.5 181.2 L593.2 169.7 L594.9 173 L596.6 181 L598.3 173.5 L600 171.7 L601.7 159.2 L603.4 171.2 L605.1 172.7 L606.8 174.3 L608.5 175.8 L610.2 168.1 L611.9 182.1 L613.6 182.3 L615.3 177.5 L617.1 181.7 L618.8 169.5 L620.5 175.1 L622.2 173.6 L623.9 181.8 L625.6 181.2 L627.3 180.8 L629 172.8 L630.7 172.4 L632.4 180.1 L634.1 179.8 L635.8 172.3 L637.5 180 L639.2 170.8 L640.9 179.1 L642.6 167.2 L644.3 178.8 L646 179.4 L647.7 179.6 L649.4 178.5 L651.1 178.9 L652.8 179.5 L654.5 174.1 L656.2 179.6 L657.9 165.5 L659.6 179.7 L661.4 180.1 L663.1 180.3 L664.8 180 L666.5 166.7 L668.2 179.8 L669.9 167.9 L671.6 158.1 L673.3 181.3 L675 171 L676.7 175.9 L678.4 180.9 L680.1 170.5 L681.8 171.4 L683.5 175.4 L685.2 174 L686.9 172.6 L688.6 182.5 L690.3 182.4 L692 182.8 L693.7 182.6 L695.4 182 L697.1 182.1 L698.8 181.7 L700.5 181.5 L702.2 181 L703.9 172.5 L705.6 181.2 L707.4 181.1 L709.1 181 L710.8 169.4 L712.5 180 L714.2 180.2 L715.9 180.4 L717.6 171.8 L719.3 175.1 L721 179.4 L722.7 171.6 L724.4 166.2 L726.1 178.7 L727.8 156.1 L729.5 179.5 L731.2 179 L732.9 179.6 L734.6 179.6 L736.3 159.2 L738 174.8 L739.7 178.9 L741.4 169.5 L743.1 166.9 L744.8 180.1 L746.5 179.5 L748.2 173.1 L749.9 179.9 L751.6 181 L753.4 181 L755.1 181.4 L756.8 170 L758.5 181.8 L760.2 170.5 L761.9 181.9 L763.6 181.4 L765.3 182.4 L767 166.3 L768.7 171.1 L770.4 176 L772.1 182 L773.8 182.4 L775.5 181.7 L777.2 168.8 L778.9 171.1 L780.6 182.4 L782.3 181.9 L784 171.3 L785.7 169.4 L787.4 169.9 L789.1 171.7 L790.8 181.3 L792.5 171.3 L794.2 166.5 L795.9 170.5 L797.7 169.1 L799.4 179.6 L801.1 179.8 L802.8 179.4 L804.5 166.8 L806.2 179.8 L807.9 157.2 L809.6 178.8 L811.3 179.5 L813 179.5 L814.7 161.2 L816.4 161.2 L818.1 161.2 L819.8 161.2" fill="none" stroke="#5274cd" stroke-width="1.20" stroke-linejoin="round"/></svg>
<div class="t" style="top:791.06px;font-size:13.40px;color:#3a5ec2;left:1006.40px;-webkit-text-stroke:0.45px #3a5ec2;">Name</div>
<svg style="position:absolute;left:1045.50px;top:795.90px;" width="8.00" height="6.00" viewBox="0 0 8.00 6.00"><polyline points="1.5,4.3 4,1.8 6.5,4.3" fill="none" stroke="#3a5ec2" stroke-width="1.3" stroke-linecap="round" stroke-linejoin="round"/></svg>
<div class="t" style="top:791.06px;font-size:13.40px;color:#3a5ec2;left:756.30px;width:1000px;text-align:right;-webkit-text-stroke:0.45px #3a5ec2;">Mean</div>
<div class="t" style="top:791.06px;font-size:13.40px;color:#3a5ec2;left:823.60px;width:1000px;text-align:right;-webkit-text-stroke:0.45px #3a5ec2;">Max</div>
<div style="position:absolute;left:974.00px;top:810.00px;width:859.50px;height:1.00px;background:#dcdde0;"></div>
<div style="position:absolute;left:974.00px;top:835.00px;width:859.50px;height:1.00px;background:#dcdde0;"></div>
<div style="position:absolute;left:974.00px;top:860.00px;width:859.50px;height:1.00px;background:#dcdde0;"></div>
<div style="position:absolute;left:974.00px;top:884.00px;width:859.50px;height:1.00px;background:#dcdde0;"></div>
<div style="position:absolute;left:982.40px;top:821.20px;width:15.00px;height:4.20px;border-radius:2.1px;background:#5b9a4c;"></div>
<div class="t" style="top:814.98px;font-size:14.20px;color:#24292e;left:1006.40px;">dm-0</div>
<div class="t" style="top:815.83px;font-size:13.20px;color:#24292e;left:756.30px;width:1000px;text-align:right;">8.71</div>
<div class="t" style="top:815.83px;font-size:13.20px;color:#24292e;left:823.60px;width:1000px;text-align:right;">155</div>
<div style="position:absolute;left:982.40px;top:845.90px;width:15.00px;height:4.20px;border-radius:2.1px;background:#d6a93a;"></div>
<div class="t" style="top:839.68px;font-size:14.20px;color:#24292e;left:1006.40px;">vda</div>
<div class="t" style="top:840.53px;font-size:13.20px;color:#24292e;left:756.30px;width:1000px;text-align:right;">7.57</div>
<div class="t" style="top:840.53px;font-size:13.20px;color:#24292e;left:823.60px;width:1000px;text-align:right;">72.9</div>
<div style="position:absolute;left:982.40px;top:870.60px;width:15.00px;height:4.20px;border-radius:2.1px;background:#3c6bd6;"></div>
<div class="t" style="top:864.38px;font-size:14.20px;color:#24292e;left:1006.40px;">vdb</div>
<div class="t" style="top:865.23px;font-size:13.20px;color:#24292e;left:756.30px;width:1000px;text-align:right;">15.4</div>
<div class="t" style="top:865.23px;font-size:13.20px;color:#24292e;left:823.60px;width:1000px;text-align:right;">44.4</div>
<svg style="position:absolute;left:1828.50px;top:880.50px;" width="12.00" height="12.00" viewBox="0 0 12.00 12.00"><line x1="2" y1="10.5" x2="10.5" y2="2" stroke="#8a8d91" stroke-width="1"/><line x1="6" y1="10.5" x2="10.5" y2="6" stroke="#8a8d91" stroke-width="1"/></svg>
<div style="position:absolute;left:77.00px;top:903.00px;width:879.00px;height:317.00px;box-sizing:border-box;background:#fff;border:1px solid #e6e7e9;border-radius:6px;"></div>
<div class="t" style="top:913.58px;font-size:16.09px;color:#24292e;left:87.50px;-webkit-text-stroke:0.48px #24292e;">Read Bandwidth</div>
<svg style="position:absolute;left:223.10px;top:914.20px;" width="16.00" height="16.00" viewBox="0 0 16.00 16.00"><circle cx="8" cy="8" r="6.60" fill="none" stroke="#444" stroke-width="1.35"/><line x1="8" y1="7.7" x2="8" y2="10.9" stroke="#444" stroke-width="1.45" stroke-linecap="round"/><circle cx="8" cy="5.0" r="0.9" fill="#444"/></svg>
<div style="position:absolute;left:162.70px;top:966.30px;width:774.30px;height:1.00px;background:#f2f2f3;"></div>
<div class="t" style="top:959.89px;font-size:13.60px;color:#24292e;left:-843.30px;width:1000px;text-align:right;">3.50 MiB/s</div>
<div style="position:absolute;left:162.70px;top:984.60px;width:774.30px;height:1.00px;background:#f2f2f3;"></div>
<div class="t" style="top:978.19px;font-size:13.60px;color:#24292e;left:-843.30px;width:1000px;text-align:right;">3 MiB/s</div>
<div style="position:absolute;left:162.70px;top:1002.90px;width:774.30px;height:1.00px;background:#f2f2f3;"></div>
<div class="t" style="top:996.49px;font-size:13.60px;color:#24292e;left:-843.30px;width:1000px;text-align:right;">2.50 MiB/s</div>
<div style="position:absolute;left:162.70px;top:1021.20px;width:774.30px;height:1.00px;background:#f2f2f3;"></div>
<div class="t" style="top:1014.79px;font-size:13.60px;color:#24292e;left:-843.30px;width:1000px;text-align:right;">2 MiB/s</div>
<div style="position:absolute;left:162.70px;top:1039.50px;width:774.30px;height:1.00px;background:#f2f2f3;"></div>
<div class="t" style="top:1033.09px;font-size:13.60px;color:#24292e;left:-843.30px;width:1000px;text-align:right;">1.50 MiB/s</div>
<div style="position:absolute;left:162.70px;top:1057.80px;width:774.30px;height:1.00px;background:#f2f2f3;"></div>
<div class="t" style="top:1051.39px;font-size:13.60px;color:#24292e;left:-843.30px;width:1000px;text-align:right;">1 MiB/s</div>
<div style="position:absolute;left:162.70px;top:1076.00px;width:774.30px;height:1.00px;background:#f2f2f3;"></div>
<div class="t" style="top:1069.59px;font-size:13.60px;color:#24292e;left:-843.30px;width:1000px;text-align:right;">512 KiB/s</div>
<div style="position:absolute;left:162.70px;top:1094.30px;width:774.30px;height:1.00px;background:#f2f2f3;"></div>
<div class="t" style="top:1087.89px;font-size:13.60px;color:#24292e;left:-843.30px;width:1000px;text-align:right;">0 B/s</div>
<div style="position:absolute;left:202.80px;top:956.00px;width:1.00px;height:142.50px;background:#f2f2f3;"></div>
<div class="t" style="top:1105.80px;font-size:13.00px;color:#24292e;left:-296.70px;width:1000px;text-align:center;">21:00</div>
<div style="position:absolute;left:267.35px;top:956.00px;width:1.00px;height:142.50px;background:#f2f2f3;"></div>
<div class="t" style="top:1105.80px;font-size:13.00px;color:#24292e;left:-232.15px;width:1000px;text-align:center;">21:05</div>
<div style="position:absolute;left:331.90px;top:956.00px;width:1.00px;height:142.50px;background:#f2f2f3;"></div>
<div class="t" style="top:1105.80px;font-size:13.00px;color:#24292e;left:-167.60px;width:1000px;text-align:center;">21:10</div>
<div style="position:absolute;left:396.45px;top:956.00px;width:1.00px;height:142.50px;background:#f2f2f3;"></div>
<div class="t" style="top:1105.80px;font-size:13.00px;color:#24292e;left:-103.05px;width:1000px;text-align:center;">21:15</div>
<div style="position:absolute;left:461.00px;top:956.00px;width:1.00px;height:142.50px;background:#f2f2f3;"></div>
<div class="t" style="top:1105.80px;font-size:13.00px;color:#24292e;left:-38.50px;width:1000px;text-align:center;">21:20</div>
<div style="position:absolute;left:525.55px;top:956.00px;width:1.00px;height:142.50px;background:#f2f2f3;"></div>
<div class="t" style="top:1105.80px;font-size:13.00px;color:#24292e;left:26.05px;width:1000px;text-align:center;">21:25</div>
<div style="position:absolute;left:590.10px;top:956.00px;width:1.00px;height:142.50px;background:#f2f2f3;"></div>
<div class="t" style="top:1105.80px;font-size:13.00px;color:#24292e;left:90.60px;width:1000px;text-align:center;">21:30</div>
<div style="position:absolute;left:654.65px;top:956.00px;width:1.00px;height:142.50px;background:#f2f2f3;"></div>
<div class="t" style="top:1105.80px;font-size:13.00px;color:#24292e;left:155.15px;width:1000px;text-align:center;">21:35</div>
<div style="position:absolute;left:719.20px;top:956.00px;width:1.00px;height:142.50px;background:#f2f2f3;"></div>
<div class="t" style="top:1105.80px;font-size:13.00px;color:#24292e;left:219.70px;width:1000px;text-align:center;">21:40</div>
<div style="position:absolute;left:783.75px;top:956.00px;width:1.00px;height:142.50px;background:#f2f2f3;"></div>
<div class="t" style="top:1105.80px;font-size:13.00px;color:#24292e;left:284.25px;width:1000px;text-align:center;">21:45</div>
<div style="position:absolute;left:848.30px;top:956.00px;width:1.00px;height:142.50px;background:#f2f2f3;"></div>
<div class="t" style="top:1105.80px;font-size:13.00px;color:#24292e;left:348.80px;width:1000px;text-align:center;">21:50</div>
<div style="position:absolute;left:912.85px;top:956.00px;width:1.00px;height:142.50px;background:#f2f2f3;"></div>
<div class="t" style="top:1105.80px;font-size:13.00px;color:#24292e;left:413.35px;width:1000px;text-align:center;">21:55</div>
<svg style="position:absolute;left:160.70px;top:936.00px;overflow:visible;" width="778.30" height="162.50" viewBox="0 0 778.30 162.50"><path d="M428.8 158.5 L429.6 158.2 L431.1 121.2 L432.9 34.9 L434.5 34.9 L436.5 158.2 L437.3 158.5" fill="none" stroke="#d8ab35" stroke-width="1.30" stroke-linejoin="round"/><path d="M768.3 158.5 L769.3 157 L776.3 157" fill="none" stroke="#d8ab35" stroke-width="1.30" stroke-linejoin="round"/><path d="M2 158.3 L7 158.3 L9.3 158 L11 158.3 L18 158.3 L20.3 157.9 L22.5 158.3 L29 158.3 L31.3 157.9 L33.5 158.3 L40 158.3 L42.3 157.8 L44.5 158.3 L51 158.3 L53.3 157.9 L55.5 158.3 L62 158.3 L64.3 157.8 L66.5 158.3 L75 158.3 L84.5 158.3 L86.3 158.1 L88 158.3 L95 158.3 L97.3 157.8 L99.5 158.3 L106 158.3 L108.3 158 L110 158.3 L117 158.3 L119.3 157.8 L121.5 158.3 L129.5 158.3 L130.5 158.3 L139.5 158.3 L141.3 158.1 L143 158.3 L151 158.3 L152.3 158.2 L153.5 158.3 L161 158.3 L163.3 158 L165 158.3 L172 158.3 L174.3 158 L176 158.3 L185 158.3 L195 158.3 L196.5 158.2 L205.5 158.3 L207.3 158.2 L209 158.3 L216 158.3 L218.3 157.8 L220.5 158.3 L227 158.3 L229.3 157.9 L231.5 158.3 L239 158.3 L240.5 158.2 L249 158.3 L251.3 157.9 L253.5 158.3 L261 158.3 L262.5 158.3 L271 158.3 L273.3 158 L275 158.3 L283.5 158.3 L284.5 158.3 L304 158.3 L306.3 157.8 L308.5 158.3 L316 158.3 L317.5 158.2 L327 158.3 L328.5 158.2 L337 158.3 L339.3 157.8 L341.5 158.3 L348 158.3 L350.3 157.8 L352.5 158.3 L359.5 158.3 L361.3 158.2 L363 158.3 L370 158.3 L372.3 157.8 L374.5 158.3 L381 158.3 L383.3 158 L385 158.3 L392 158.3 L394.3 157.9 L396 158.3 L404 158.3 L405.5 158.2 L414 158.3 L416.3 157.8 L418.5 158.3 L425 158.3 L427.3 157.9 L429 158.3 L436 158.3 L438.3 157.8 L440.5 158.3 L447 158.3 L449.3 157.8 L451.5 158.3 L458.5 158.3 L460.3 158.2 L462 158.3 L469.5 158.3 L471.3 158.1 L473 158.3 L481 158.3 L482.5 158.2 L492 158.3 L493.5 158.3 L503.5 158.3 L513.5 158.3 L515.3 158.2 L517 158.3 L524 158.3 L526.3 158 L528 158.3 L546 158.3 L548.3 157.9 L550 158.3 L557.5 158.3 L559.3 158.1 L561 158.3 L568.5 158.3 L570.3 158.1 L572 158.3 L579 158.3 L581.3 157.9 L583.5 158.3 L590.5 158.3 L592.3 158.1 L594 158.3 L601.5 158.3 L603.3 158.1 L605 158.3 L612.5 158.3 L614.3 158.1 L616 158.3 L623 158.3 L625.3 157.9 L627 158.3 L635.5 158.3 L645 158.3 L647.3 157.8 L649.5 158.3 L658 158.3 L667 158.3 L669.3 157.9 L671.5 158.3 L678 158.3 L680.3 157.9 L682.5 158.3 L691 158.3 L700 158.3 L702.3 157.9 L704.5 158.3 L711.5 158.3 L713.3 158.1 L715 158.3 L722 158.3 L724.3 158 L726 158.3 L735 158.3 L745.5 158.3 L756 158.3 L757.5 158.2 L766 158.3 L768.3 157.8 L770.5 158.3 L776 158.3" fill="none" stroke="#5274cd" stroke-width="1.30" stroke-linejoin="round"/></svg>
<div class="t" style="top:1123.46px;font-size:13.40px;color:#3a5ec2;left:119.40px;-webkit-text-stroke:0.45px #3a5ec2;">Name</div>
<svg style="position:absolute;left:158.50px;top:1128.30px;" width="8.00" height="6.00" viewBox="0 0 8.00 6.00"><polyline points="1.5,4.3 4,1.8 6.5,4.3" fill="none" stroke="#3a5ec2" stroke-width="1.3" stroke-linecap="round" stroke-linejoin="round"/></svg>
<div class="t" style="top:1123.46px;font-size:13.40px;color:#3a5ec2;left:-153.70px;width:1000px;text-align:right;-webkit-text-stroke:0.45px #3a5ec2;">Mean</div>
<div class="t" style="top:1123.46px;font-size:13.40px;color:#3a5ec2;left:-80.40px;width:1000px;text-align:right;-webkit-text-stroke:0.45px #3a5ec2;">Max</div>
<div style="position:absolute;left:87.00px;top:1142.00px;width:859.50px;height:1.00px;background:#dcdde0;"></div>
<div style="position:absolute;left:87.00px;top:1167.00px;width:859.50px;height:1.00px;background:#dcdde0;"></div>
<div style="position:absolute;left:87.00px;top:1191.00px;width:859.50px;height:1.00px;background:#dcdde0;"></div>
<div style="position:absolute;left:95.40px;top:1153.00px;width:15.00px;height:4.20px;border-radius:2.1px;background:#5b9a4c;"></div>
<div class="t" style="top:1146.78px;font-size:14.20px;color:#24292e;left:119.40px;">dm-0</div>
<div class="t" style="top:1147.63px;font-size:13.20px;color:#24292e;left:-148.20px;width:1000px;text-align:right;">12.5 KiB/s</div>
<div class="t" style="top:1147.63px;font-size:13.20px;color:#24292e;left:-63.00px;width:1000px;text-align:right;">3.40 MiB/s</div>
<div style="position:absolute;left:95.40px;top:1177.60px;width:15.00px;height:4.20px;border-radius:2.1px;background:#d6a93a;"></div>
<div class="t" style="top:1171.38px;font-size:14.20px;color:#24292e;left:119.40px;">vda</div>
<div class="t" style="top:1172.23px;font-size:13.20px;color:#24292e;left:-148.20px;width:1000px;text-align:right;">12.5 KiB/s</div>
<div class="t" style="top:1172.23px;font-size:13.20px;color:#24292e;left:-63.00px;width:1000px;text-align:right;">3.40 MiB/s</div>
<div style="position:absolute;left:95.40px;top:1202.20px;width:15.00px;height:4.20px;border-radius:2.1px;background:#3c6bd6;"></div>
<div class="t" style="top:1195.98px;font-size:14.20px;color:#24292e;left:119.40px;">vdb</div>
<div class="t" style="top:1196.83px;font-size:13.20px;color:#24292e;left:-148.20px;width:1000px;text-align:right;">4.09 KiB/s</div>
<div class="t" style="top:1196.83px;font-size:13.20px;color:#24292e;left:-63.00px;width:1000px;text-align:right;">37.6 KiB/s</div>
<svg style="position:absolute;left:941.50px;top:1205.50px;" width="12.00" height="12.00" viewBox="0 0 12.00 12.00"><line x1="2" y1="10.5" x2="10.5" y2="2" stroke="#8a8d91" stroke-width="1"/><line x1="6" y1="10.5" x2="10.5" y2="6" stroke="#8a8d91" stroke-width="1"/></svg>
<div style="position:absolute;left:964.00px;top:903.00px;width:879.00px;height:317.00px;box-sizing:border-box;background:#fff;border:1px solid #e6e7e9;border-radius:6px;"></div>
<div class="t" style="top:913.05px;font-size:16.48px;color:#24292e;left:974.50px;-webkit-text-stroke:0.48px #24292e;">Write Bandwidth</div>
<svg style="position:absolute;left:1112.60px;top:914.00px;" width="16.00" height="16.00" viewBox="0 0 16.00 16.00"><circle cx="8" cy="8" r="6.60" fill="none" stroke="#444" stroke-width="1.35"/><line x1="8" y1="7.7" x2="8" y2="10.9" stroke="#444" stroke-width="1.45" stroke-linecap="round"/><circle cx="8" cy="5.0" r="0.9" fill="#444"/></svg>
<div style="position:absolute;left:1049.90px;top:959.80px;width:774.10px;height:1.00px;background:#f2f2f3;"></div>
<div class="t" style="top:953.39px;font-size:13.60px;color:#24292e;left:44.00px;width:1000px;text-align:right;">3.50 MiB/s</div>
<div style="position:absolute;left:1049.90px;top:979.00px;width:774.10px;height:1.00px;background:#f2f2f3;"></div>
<div class="t" style="top:972.59px;font-size:13.60px;color:#24292e;left:44.00px;width:1000px;text-align:right;">3 MiB/s</div>
<div style="position:absolute;left:1049.90px;top:998.10px;width:774.10px;height:1.00px;background:#f2f2f3;"></div>
<div class="t" style="top:991.69px;font-size:13.60px;color:#24292e;left:44.00px;width:1000px;text-align:right;">2.50 MiB/s</div>
<div style="position:absolute;left:1049.90px;top:1017.30px;width:774.10px;height:1.00px;background:#f2f2f3;"></div>
<div class="t" style="top:1010.89px;font-size:13.60px;color:#24292e;left:44.00px;width:1000px;text-align:right;">2 MiB/s</div>
<div style="position:absolute;left:1049.90px;top:1036.50px;width:774.10px;height:1.00px;background:#f2f2f3;"></div>
<div class="t" style="top:1030.09px;font-size:13.60px;color:#24292e;left:44.00px;width:1000px;text-align:right;">1.50 MiB/s</div>
<div style="position:absolute;left:1049.90px;top:1055.70px;width:774.10px;height:1.00px;background:#f2f2f3;"></div>
<div class="t" style="top:1049.29px;font-size:13.60px;color:#24292e;left:44.00px;width:1000px;text-align:right;">1 MiB/s</div>
<div style="position:absolute;left:1049.90px;top:1074.80px;width:774.10px;height:1.00px;background:#f2f2f3;"></div>
<div class="t" style="top:1068.39px;font-size:13.60px;color:#24292e;left:44.00px;width:1000px;text-align:right;">512 KiB/s</div>
<div style="position:absolute;left:1049.90px;top:1094.00px;width:774.10px;height:1.00px;background:#f2f2f3;"></div>
<div class="t" style="top:1087.59px;font-size:13.60px;color:#24292e;left:44.00px;width:1000px;text-align:right;">0 B/s</div>
<div style="position:absolute;left:1090.00px;top:956.50px;width:1.00px;height:142.00px;background:#f2f2f3;"></div>
<div class="t" style="top:1105.80px;font-size:13.00px;color:#24292e;left:590.50px;width:1000px;text-align:center;">21:00</div>
<div style="position:absolute;left:1154.55px;top:956.50px;width:1.00px;height:142.00px;background:#f2f2f3;"></div>
<div class="t" style="top:1105.80px;font-size:13.00px;color:#24292e;left:655.05px;width:1000px;text-align:center;">21:05</div>
<div style="position:absolute;left:1219.10px;top:956.50px;width:1.00px;height:142.00px;background:#f2f2f3;"></div>
<div class="t" style="top:1105.80px;font-size:13.00px;color:#24292e;left:719.60px;width:1000px;text-align:center;">21:10</div>
<div style="position:absolute;left:1283.65px;top:956.50px;width:1.00px;height:142.00px;background:#f2f2f3;"></div>
<div class="t" style="top:1105.80px;font-size:13.00px;color:#24292e;left:784.15px;width:1000px;text-align:center;">21:15</div>
<div style="position:absolute;left:1348.20px;top:956.50px;width:1.00px;height:142.00px;background:#f2f2f3;"></div>
<div class="t" style="top:1105.80px;font-size:13.00px;color:#24292e;left:848.70px;width:1000px;text-align:center;">21:20</div>
<div style="position:absolute;left:1412.75px;top:956.50px;width:1.00px;height:142.00px;background:#f2f2f3;"></div>
<div class="t" style="top:1105.80px;font-size:13.00px;color:#24292e;left:913.25px;width:1000px;text-align:center;">21:25</div>
<div style="position:absolute;left:1477.30px;top:956.50px;width:1.00px;height:142.00px;background:#f2f2f3;"></div>
<div class="t" style="top:1105.80px;font-size:13.00px;color:#24292e;left:977.80px;width:1000px;text-align:center;">21:30</div>
<div style="position:absolute;left:1541.85px;top:956.50px;width:1.00px;height:142.00px;background:#f2f2f3;"></div>
<div class="t" style="top:1105.80px;font-size:13.00px;color:#24292e;left:1042.35px;width:1000px;text-align:center;">21:35</div>
<div style="position:absolute;left:1606.40px;top:956.50px;width:1.00px;height:142.00px;background:#f2f2f3;"></div>
<div class="t" style="top:1105.80px;font-size:13.00px;color:#24292e;left:1106.90px;width:1000px;text-align:center;">21:40</div>
<div style="position:absolute;left:1670.95px;top:956.50px;width:1.00px;height:142.00px;background:#f2f2f3;"></div>
<div class="t" style="top:1105.80px;font-size:13.00px;color:#24292e;left:1171.45px;width:1000px;text-align:center;">21:45</div>
<div style="position:absolute;left:1735.50px;top:956.50px;width:1.00px;height:142.00px;background:#f2f2f3;"></div>
<div class="t" style="top:1105.80px;font-size:13.00px;color:#24292e;left:1236.00px;width:1000px;text-align:center;">21:50</div>
<div style="position:absolute;left:1800.05px;top:956.50px;width:1.00px;height:142.00px;background:#f2f2f3;"></div>
<div class="t" style="top:1105.80px;font-size:13.00px;color:#24292e;left:1300.55px;width:1000px;text-align:center;">21:55</div>
<svg style="position:absolute;left:1047.90px;top:936.50px;overflow:visible;" width="778.10" height="162.00" viewBox="0 0 778.10 162.00"><path d="M2 155.7 L11 155.7 L11.5 155.6 L12.1 154.7 L12.5 155.3 L13 155.7 L24 155.7 L24.5 154.9 L25.1 153.7 L26 155.5 L26.5 155.7 L37 155.7 L37.5 154.9 L38.1 153.8 L39 155.5 L39.5 155.7 L49.5 155.7 L50 155.6 L51.1 153.2 L52 155.2 L52.5 155.7 L63 155.7 L63.5 154.8 L64.1 153.6 L65 155.4 L65.5 155.7 L76.5 155.7 L77.1 155.5 L77.5 155.7 L88.5 155.7 L89 155.3 L90.1 152.5 L91 154.8 L91.5 155.7 L102 155.7 L102.5 155.1 L103.1 154 L104 155.7 L114.5 155.7 L115 155.4 L116.1 152.7 L117 154.9 L117.5 155.7 L128.5 155.7 L129.1 155.3 L129.5 155.7 L140.5 155.7 L141 155.1 L142.1 152.3 L143 154.6 L143.5 155.7 L154 155.7 L154.5 155.1 L155.1 154 L156 155.6 L166.5 155.7 L167 155.6 L168.1 153.1 L169 155.1 L169.5 155.7 L179.5 155.7 L180 155.6 L181.1 153.2 L182 155.2 L182.5 155.7 L192.5 155.7 L193 155.3 L194.1 152.7 L195 154.9 L195.5 155.7 L206 155.7 L206.5 155.6 L207.1 154.7 L207.5 155.3 L208 155.7 L232 155.7 L232.5 155.5 L233.1 154.5 L233.5 155.2 L234 155.7 L245.5 155.7 L246.1 155.4 L246.5 155.7 L252 155.7 L252.5 154.5 L258.5 154.5 L259 154.2 L259.1 154 L259.5 154.5 L271 154.5 L271.5 154.3 L272.1 153 L272.5 153.9 L273 154.5 L324 154.5 L336.5 154.5 L337.1 153.9 L337.5 154.5 L362.5 154.5 L363.1 153.5 L363.5 154.3 L364 154.5 L401 154.5 L401.5 154 L402.1 152.5 L402.5 153.5 L403 154.5 L406 154.5 L406.5 153.6 L408.6 62.1 L410.5 144.9 L411 154.5 L414.5 154.5 L415 154.3 L415.1 154.1 L415.5 154.5 L427 154.5 L427.5 154.1 L428.1 152.7 L428.5 153.6 L429 154.5 L431 154.5 L431.5 154.3 L433.1 144.6 L434.5 153.1 L435 154.5 L436 154.5 L436.5 152.8 L438.1 138.8 L439.5 151 L440 154.5 L440.5 154.5 L441 154.3 L441.1 154.1 L441.5 154.5 L480 154.5 L492.5 154.5 L493.1 153.6 L493.5 154.4 L494 154.5 L505 154.5 L505.5 154.5 L506.1 153.1 L506.5 154 L507 154.5 L518 154.5 L518.5 154.5 L519.1 153.2 L519.5 154.1 L520 154.5 L531.5 154.5 L532.1 153.6 L532.5 154.4 L533 154.5 L558 154.5 L558.1 154.4 L558.5 154.5 L583.5 154.5 L584 154.4 L584.1 154.2 L584.5 154.5 L609.5 154.5 L610 154.2 L610.1 154 L610.5 154.5 L622.5 154.5 L623 154.5 L623.1 154.3 L623.5 154.5 L648 154.5 L648.5 154.3 L649.1 152.9 L649.5 153.8 L650 154.5 L661.5 154.5 L662.1 153.8 L662.5 154.5 L674 154.5 L674.5 154.4 L675.1 153 L675.5 153.9 L676 154.5 L687.5 154.5 L688.1 153.3 L688.5 154.1 L689 154.5 L700.5 154.5 L701.1 153.3 L701.5 154.1 L702 154.5 L713 154.5 L713.5 153.8 L714.1 152.3 L715 154.5 L765.5 154.5 L766.1 153.5 L766.5 154.3 L767 154.5 L776 154.5" fill="none" stroke="#d8ab35" stroke-width="1.30" stroke-linejoin="round"/><path d="M2 148.8 L5 147 L5.7 142.2 L6.3 142.2 L6.5 143.6 L7 146 L8 145.8 L9 145.8 L9.5 145.8 L10 145.4 L10.7 139.9 L11.3 139.9 L12 146 L12.5 147.1 L13.5 147.8 L14 141.9 L14.9 130.3 L15.5 130.4 L17 149 L17.5 150 L18.5 150.2 L19.5 150.2 L20.5 150 L21 147.5 L21.8 141.7 L22.4 141.7 L23 146.2 L23.5 148.7 L25 148 L25.5 147.8 L26 147 L26.1 146.4 L26.7 146.4 L27 147.4 L28 147.4 L29 147.5 L30 147.8 L31.5 148.6 L32 147.4 L32.9 140.4 L33.5 140.3 L34.5 148.5 L35 150.9 L36 151.4 L37 151.7 L37.5 151.8 L38 149.1 L39.2 139.3 L39.8 139.3 L41 149.8 L41.5 150.8 L43.5 149.5 L44 146.4 L45.1 135 L45.7 135 L46.5 143.5 L47 147.9 L48 147.8 L49 147.9 L50 148.1 L50.5 143.6 L51.2 137.2 L51.8 137.2 L53 148.8 L53.5 149.8 L54 146.2 L54.8 139.6 L55.4 139.6 L56.5 148.8 L57 150.8 L58 150.7 L59 150.4 L59.5 146.2 L60.7 131.5 L61.3 131.4 L62.5 145.7 L63 147.9 L64.5 146.9 L65 144.4 L65.5 140.3 L66.1 140.3 L66.5 143.4 L67 146 L68 145.9 L69.3 127.7 L69.9 127.7 L71 142.6 L71.5 147.4 L73 148.2 L73.5 144.3 L74.4 134.6 L75 134.7 L76 145.2 L76.5 149.6 L77.5 149.6 L78 149.5 L78.5 148.9 L79.3 143.5 L79.9 143.5 L80.5 147.4 L81 148.3 L81.5 147.8 L82.9 128.4 L83.5 128.4 L84.5 141.3 L85 146.4 L86 146.3 L86.5 144.7 L86.7 143.4 L87.3 143.4 L87.5 144.7 L88 146.6 L89 147 L90.5 147.9 L92 149 L92.5 145.2 L93.6 132.6 L94.2 132.6 L95.5 147.7 L96 151.1 L97 151.1 L98 151 L98.5 147.4 L99.8 133.2 L100.4 133.1 L101.5 146 L102 149.2 L102.5 146.2 L103.5 136.1 L104.1 136.1 L105 144.9 L105.5 148 L106.5 148 L107.5 148.2 L108.5 148.5 L109 148.8 L109.5 145.5 L109.9 142.6 L110.5 142.6 L111.5 149.6 L112 150.5 L112.5 150.3 L113.9 136.5 L114.5 136.5 L116 151 L116.5 151.6 L117 151.5 L117.5 148.8 L118.7 137.9 L119.3 137.9 L120.5 148.9 L121 149.3 L122 148.6 L122.5 145.7 L123.3 138.5 L123.9 138.5 L124.5 143.8 L125 147.1 L126 147 L126.5 147 L126.9 145.6 L127.5 145.6 L128 147.3 L129.5 147.9 L131.5 148.9 L132 147.9 L132.9 140.7 L133.5 140.7 L134.5 148.5 L135 149.9 L135.5 146.8 L136.6 134.6 L137.2 134.5 L138.5 147.8 L139 148.5 L139.5 148.2 L140 145.9 L140.9 137 L141.5 137 L142.5 146.2 L143 146.2 L144 145.9 L145 145.7 L146 145.8 L147 146.1 L147.5 146.3 L147.9 145.5 L148.5 145.5 L148.5 145.7 L149 147.1 L150.5 148.1 L151 146.6 L152 137.9 L152.6 137.9 L153.5 146.5 L154 149.9 L155 150.1 L155.5 144.1 L156.6 129.6 L157.2 129.6 L158.5 146.1 L159 149 L160.5 148.2 L161 146.6 L161.2 145.5 L161.8 145.5 L162 146.7 L162.5 147.4 L163.5 147.2 L164.5 147.2 L165.5 147.4 L166.5 147.7 L167 147.6 L167.9 140.1 L168.5 140.1 L169.5 148.1 L170 149.9 L171 150.6 L171.5 148.7 L172.7 136.7 L173.3 136.7 L174.5 148 L175 151.8 L175.5 151.7 L176 147.5 L177.8 100.5 L178.4 100.5 L180 142.3 L180.5 149.2 L181.5 148.6 L182 147.5 L183 139.1 L183.6 139.1 L184.5 147 L185 147.9 L186 148.2 L187 148.5 L187.5 148.5 L188.5 139.8 L189.1 139.9 L190 146.9 L190.5 150.3 L191.5 150.7 L192 150.8 L193.4 139.2 L194 139.2 L195 148.1 L195.5 150.5 L196 150.3 L196.5 149.3 L197.7 138.4 L198.3 138.4 L199 144.5 L199.5 148 L201 147 L202 146.5 L202.5 146.4 L203 142.6 L204 128.8 L204.6 128.8 L205.5 140.2 L206 146.6 L207 147 L207.5 144.1 L207.7 142.4 L208.3 142.4 L209 147.1 L209.5 148.4 L211 149.1 L211.5 147 L212.1 142.5 L212.7 142.5 L213.5 147.8 L214 149.5 L215 149.3 L215.5 148.5 L216.5 140.4 L217.1 140.3 L218 147.5 L218.5 147.6 L220 146.8 L220.5 145 L221.2 138.9 L221.8 139 L222.5 145 L223 146.1 L224 146.3 L225 146.7 L226 147.2 L226.5 146.9 L227.3 140.5 L227.9 140.5 L229 149.2 L229.5 149.6 L230 148.1 L231.3 133.9 L231.9 133.9 L233 146 L233.5 150.9 L234.5 150.8 L235.5 150.5 L236 150.3 L236.5 147.5 L237.3 141 L237.9 141 L238.5 145.3 L239 148.8 L240.5 148.2 L241.5 147.9 L242.5 147.9 L243 147.1 L244 138.1 L244.6 138.1 L245.5 146.3 L246 149.1 L248.5 150.6 L249 150.9 L249.5 146 L250.6 134.4 L251.2 134.4 L252.5 148.6 L253 151.7 L254 151.4 L254.5 146.4 L255.8 130.4 L256.4 130.3 L257.5 144.5 L258 149 L258.5 148.6 L259 144.4 L259.8 137.2 L260.4 137.2 L261 143.3 L261.5 147.3 L262.5 147.2 L263.5 147.3 L264.5 147.6 L265 147.7 L265.5 147.1 L265.9 144.3 L266.5 144.3 L267 147.1 L267.5 149 L268.5 149.4 L269 145.4 L269.9 136.8 L270.5 136.8 L271.5 146.5 L272 150 L273 149.8 L274 149.4 L274.5 145.4 L275.5 135.5 L276.1 135.5 L277 145 L277.5 147.2 L279 146.4 L280 146 L281 145.8 L281.5 145.7 L282 141.9 L282.3 139.3 L282.9 139.3 L283.5 144.3 L284 146.3 L285.5 147.2 L286 144.7 L287.2 127.9 L287.8 127.9 L289 143.9 L289.5 149.5 L290 149.7 L290.5 148.6 L291.2 144.2 L291.8 144.2 L292.5 148.6 L293 149.7 L293.5 149.6 L294 148.9 L295.3 134.4 L295.9 134.3 L297 145.6 L297.5 147.7 L298 147.5 L298.5 142.2 L299.3 132.4 L299.9 132.4 L301 144.7 L301.5 147.1 L302.5 147.4 L303 146.5 L303.8 139.6 L304.4 139.6 L305.5 148.5 L306 149.5 L307 150.2 L307.5 145.5 L308.5 135.6 L309.1 135.7 L310.5 150.2 L311 151.7 L312 151.6 L312.5 151.4 L313 151 L314.1 143.5 L314.7 143.5 L315.5 148.5 L316 149.7 L317.5 148.8 L318 143.7 L319 132.7 L319.6 132.6 L320.5 143.4 L321 148 L322 148.2 L323.5 148.7 L324 146.5 L325.1 134.8 L325.7 134.7 L327 148.4 L327.5 150.7 L328.5 151 L329.5 151.2 L330 151.2 L330.5 146.2 L331.7 132.8 L332.3 132.8 L333.5 146.9 L334 149.5 L336.5 147.7 L337 147.4 L337.5 146.4 L338.4 138.1 L339 138.1 L339.5 142.4 L340 146.3 L340.5 146.3 L341 144.5 L342.1 129.9 L342.7 129.8 L344 145.9 L344.5 147.7 L346.5 148.8 L347.5 149.2 L348 147.4 L348.6 143.1 L349.2 143.2 L350 148.3 L350.5 149.5 L351.5 149.2 L353 148.6 L353.5 140.7 L354.8 115.8 L355.4 115.8 L356.5 136.9 L357 146.4 L358 146.1 L358.5 145.8 L358.9 142.8 L359.5 142.8 L360 146 L361 146.4 L362 146.8 L363.5 147.8 L364 148.1 L364.5 147.8 L365.6 138 L366.2 138 L367.5 150 L368 150.5 L369 150.7 L370 150.7 L370.5 149.7 L371.9 135.3 L372.5 135.4 L373.5 145.7 L374 149.3 L374.5 149 L375 145 L375.7 138.5 L376.3 138.5 L377 144.4 L377.5 147.9 L378.5 147.8 L379.5 147.9 L380 148 L380.5 144.9 L381.3 137.1 L381.9 137.1 L383 147.4 L383.5 149.8 L384 150.1 L384.5 149.1 L385 143 L386.8 75.6 L387.4 75.6 L389 135.5 L389.5 151.7 L390.5 151.4 L391 150.8 L392.1 144.2 L392.7 144.2 L393.5 149.5 L394 149.3 L395.5 148.4 L396.5 147.9 L397.5 147.5 L398 145.4 L398.4 142.5 L399 142.5 L399.5 146 L400 147.5 L401 147.8 L402 148.2 L402.5 144.4 L403 140.2 L403.6 140.1 L404.5 147.3 L405 149.7 L405.5 149.9 L406 148.3 L406.8 142.9 L407.4 142.9 L408 147.1 L408.5 150.2 L409.5 149.9 L410.5 149.5 L411.5 148.9 L412 148.1 L413.1 137.8 L413.7 137.9 L414.5 145 L415 146.6 L416 146.2 L417 145.9 L418 145.8 L418.5 145.8 L419 143.7 L419.9 133.2 L420.5 133.2 L421.5 144.1 L422 147.2 L423.5 148.2 L424 145.7 L425 135.9 L425.6 135.9 L426.5 145.1 L427 149.7 L428 149.8 L429 149.7 L430 149.4 L430.5 149.2 L431 148.4 L431.5 145.2 L432.1 145.2 L432.5 147.3 L433 147.9 L434 147.4 L434.5 146.2 L435.2 140.5 L435.8 140.5 L436.5 145.9 L437 146.8 L438 146.9 L438.5 146.9 L439.7 134.1 L440.3 134.1 L441.5 147.4 L442 149.1 L443.5 150.1 L444 150.5 L444.5 148.2 L445.7 136.2 L446.3 136.2 L447.5 147.9 L448 151.5 L449 151.3 L449.5 141.1 L451.4 33.8 L452 33.8 L454 146.7 L454.5 148.5 L455 148.3 L455.5 144.5 L456.3 136.4 L456.9 136.4 L458 147 L458.5 148.3 L460 148.9 L460.5 147.4 L461.5 138.6 L462.1 138.6 L463 146.5 L463.5 150.7 L464.5 151.1 L465.5 151.3 L466 149.2 L467.1 140.1 L467.7 140.1 L469 150.5 L470.5 149.6 L471 149.2 L471.5 146.5 L472.8 129.5 L473.4 129.5 L474.5 143.6 L475 146.8 L476 146.5 L477 146.5 L477.5 146.5 L478 144 L478.9 134.8 L479.5 134.8 L480.5 145.7 L481 147.9 L483 149 L483.5 149.2 L484 147.4 L484.8 141.8 L485.4 141.8 L486 146.5 L486.5 149.6 L487.5 149.4 L488.5 149 L489 147.7 L490 139.2 L490.6 139.1 L491.5 146.8 L492 147 L493.5 146.3 L494.5 146 L495 145.9 L495.5 142.1 L496.4 131.2 L497 131.2 L498 143.5 L498.5 146.8 L499 147.1 L499.5 144.6 L499.9 141.5 L500.5 141.5 L501.5 148.8 L503 149.7 L504 150.2 L505 150.5 L505.5 145.8 L506.5 136.1 L507.1 136.1 L508 145.3 L508.5 150 L511 148.8 L511.5 146.2 L511.9 143.5 L512.5 143.5 L513 146.7 L513.5 147.8 L514.5 147.6 L515.5 147.7 L516 147.8 L516.5 147.1 L517.6 136.5 L518.2 136.5 L519.5 149.3 L520 149.8 L521 150.5 L521.5 150.2 L522.7 140.8 L523.3 140.8 L524.5 150.2 L525 151.9 L525.5 150.3 L526.8 139.6 L527.4 139.6 L528.5 148.9 L529 150.3 L530 149.7 L531.5 133.6 L532.1 133.6 L533 144 L533.5 147.8 L534.5 147.6 L535 145.8 L535.6 141 L536.2 141 L537 147 L537.5 148.1 L539 148.7 L539.5 144.3 L540.2 137.2 L540.8 137.3 L542 148.1 L542.5 150.3 L543.5 150.4 L544.5 150.4 L545.5 150.2 L546 146.4 L547.1 134 L547.7 134 L549 147.8 L549.5 147.9 L550 147.6 L550.5 145.3 L551.5 135.3 L552.1 135.3 L553 144.9 L553.5 145.9 L554.5 145.8 L555 145.9 L555.5 145.3 L556.3 138.1 L556.9 138.1 L557.5 143.6 L558 147 L560 148.2 L560.5 143.6 L561.3 135 L561.9 135 L563 146.3 L563.5 149.6 L564.5 149.7 L565.5 149.5 L566 147 L567.2 134.7 L567.8 134.7 L569 147.8 L569.5 147.7 L570.5 147.2 L571 144.3 L571.6 139 L572.2 139 L573 145.7 L573.5 146.6 L574.5 146.8 L575 145.9 L575.9 138 L576.5 138 L577.5 147.3 L578 148.7 L578.5 142.1 L580.2 88.2 L580.8 88.2 L582 126.3 L582.5 136.3 L582.6 134.8 L583.2 134.8 L584.5 148 L585 151 L586.4 138.6 L587 138.6 L588 147.4 L588.5 149.7 L590 148.9 L590.5 148.6 L591 145.4 L592 134.4 L592.6 134.3 L593.5 143.6 L594 148.1 L595 148.4 L596.5 149 L597.5 149.6 L598 147.1 L599 138 L599.6 138 L601 150.7 L601.5 151.4 L602.5 151.5 L603.5 151.4 L604.5 151.1 L605 148.6 L605.9 142 L606.5 142 L607.5 149.2 L609.5 147.9 L610.5 147.3 L611.5 146.9 L612 145.7 L612.5 141.7 L613.1 141.7 L613.5 144.4 L614 146.8 L615 147 L616.5 147.7 L617 143.5 L618 130.7 L618.6 130.6 L620 147.6 L620.5 149.5 L621.5 149.7 L622.5 149.7 L623 149.6 L623.5 148.9 L624.5 141.6 L625.1 141.6 L626 148.4 L628 147.2 L628.5 145.7 L629.4 137.4 L630 137.4 L630.5 142.2 L631 145.9 L632 145.8 L633 145.9 L633.5 146.1 L634 140.4 L634.9 128.2 L635.5 128.2 L636.5 141.8 L637 148 L638.5 149 L639.5 149.6 L640 149.9 L640.5 145.9 L641.6 133 L642.2 133 L643.5 147.3 L644 150.1 L645.5 149.5 L646 149.3 L646.5 148.3 L647.2 144 L647.8 144 L648 145.4 L648.5 148.1 L649.5 147.7 L650.5 147.5 L651.5 147.5 L652 147.5 L652.5 143.5 L653.6 129.3 L654.2 129.3 L655.5 146.4 L656 149.5 L656.5 147.3 L657.6 136.1 L658.2 136.1 L659.5 148.8 L660 151.7 L661 151.8 L661.5 151.9 L662 148.5 L663.2 136 L663.8 136.1 L665 147.5 L665.5 150.3 L667.5 149 L668 146.7 L669.1 135 L669.7 135 L670.5 143.1 L671 147.7 L672 147.7 L672.5 147.8 L673 145.4 L673.6 141 L674.2 141 L675 147.4 L675.5 149 L677.5 150 L678 150.2 L678.5 147.5 L679.3 141.4 L679.9 141.4 L681 149.6 L681.5 150.5 L682 150.4 L682.5 148.6 L683 145.5 L683.6 145.4 L684 147.4 L684.5 149 L685.5 148.3 L686 142.6 L686.9 132 L687.5 132 L688.5 143.8 L689 146.3 L690 146 L691 145.9 L691.3 145.6 L691.9 145.6 L692 145.9 L692.5 146.2 L694 146.9 L695.5 147.7 L696 146.5 L696.9 138.8 L697.5 138.8 L698.5 147.6 L699 149.4 L700 149.6 L701 149.6 L701.5 149.5 L702 148.6 L702.7 144.4 L703.3 144.4 L703.5 145.8 L704 148.5 L706 147.4 L706.5 143.7 L707 139.6 L707.6 139.6 L708 143 L708.5 146.5 L709.5 146.4 L710.5 146.5 L711 145.1 L711.9 135.8 L712.5 135.8 L713.5 145.7 L714 148.2 L716 149.6 L717 150.3 L717.5 150.4 L718.8 140.3 L719.4 140.3 L720.5 149.5 L721 151.2 L722 150.9 L723.5 150.3 L724 150 L724.5 146.6 L725.2 141.7 L725.8 141.7 L726.5 147.2 L727 148.5 L728 148.2 L729 148 L730 147.9 L731.2 135.8 L731.8 135.8 L733 147.9 L733.5 149.4 L735.5 150.6 L736 150 L736.9 144.5 L737.5 144.5 L738.5 150.6 L739 151.6 L740 151.5 L740.5 149.7 L741.7 139.8 L742.3 139.8 L743 145.7 L743.5 149.7 L745.5 148.3 L746.5 147.7 L747 135.6 L748.3 103.2 L748.9 103.2 L750.5 143 L751 147.1 L752 147.4 L752.5 146.1 L752.6 145.2 L753.2 145.3 L753.5 146.7 L754 148.4 L755.5 149.2 L756.5 149.5 L757 149.7 L757.5 149.6 L758.9 135.8 L759.5 135.8 L760.5 146.2 L761 149.2 L762.5 148.4 L764.5 147.1 L765 144.8 L765.5 140.4 L766.1 140.4 L766.5 143.2 L767 145.9 L768 145.8 L768.5 145.8 L768.6 129.2 L776 129.2" fill="none" stroke="#5274cd" stroke-width="1.30" stroke-linejoin="round"/></svg>
<div class="t" style="top:1123.46px;font-size:13.40px;color:#3a5ec2;left:1006.40px;-webkit-text-stroke:0.45px #3a5ec2;">Name</div>
<svg style="position:absolute;left:1045.50px;top:1128.30px;" width="8.00" height="6.00" viewBox="0 0 8.00 6.00"><polyline points="1.5,4.3 4,1.8 6.5,4.3" fill="none" stroke="#3a5ec2" stroke-width="1.3" stroke-linecap="round" stroke-linejoin="round"/></svg>
<div class="t" style="top:1123.46px;font-size:13.40px;color:#3a5ec2;left:734.30px;width:1000px;text-align:right;-webkit-text-stroke:0.45px #3a5ec2;">Mean</div>
<div class="t" style="top:1123.46px;font-size:13.40px;color:#3a5ec2;left:806.80px;width:1000px;text-align:right;-webkit-text-stroke:0.45px #3a5ec2;">Max</div>
<div style="position:absolute;left:974.00px;top:1142.00px;width:859.50px;height:1.00px;background:#dcdde0;"></div>
<div style="position:absolute;left:974.00px;top:1167.00px;width:859.50px;height:1.00px;background:#dcdde0;"></div>
<div style="position:absolute;left:974.00px;top:1191.00px;width:859.50px;height:1.00px;background:#dcdde0;"></div>
<div style="position:absolute;left:982.40px;top:1153.00px;width:15.00px;height:4.20px;border-radius:2.1px;background:#5b9a4c;"></div>
<div class="t" style="top:1146.78px;font-size:14.20px;color:#24292e;left:1006.40px;">dm-0</div>
<div class="t" style="top:1147.63px;font-size:13.20px;color:#24292e;left:740.00px;width:1000px;text-align:right;">42.5 KiB/s</div>
<div class="t" style="top:1147.63px;font-size:13.20px;color:#24292e;left:824.00px;width:1000px;text-align:right;">2.51 MiB/s</div>
<div style="position:absolute;left:982.40px;top:1177.60px;width:15.00px;height:4.20px;border-radius:2.1px;background:#d6a93a;"></div>
<div class="t" style="top:1171.38px;font-size:14.20px;color:#24292e;left:1006.40px;">vda</div>
<div class="t" style="top:1172.23px;font-size:13.20px;color:#24292e;left:740.00px;width:1000px;text-align:right;">42.5 KiB/s</div>
<div class="t" style="top:1172.23px;font-size:13.20px;color:#24292e;left:824.00px;width:1000px;text-align:right;">2.51 MiB/s</div>
<div style="position:absolute;left:982.40px;top:1202.20px;width:15.00px;height:4.20px;border-radius:2.1px;background:#3c6bd6;"></div>
<div class="t" style="top:1195.98px;font-size:14.20px;color:#24292e;left:1006.40px;">vdb</div>
<div class="t" style="top:1196.83px;font-size:13.20px;color:#24292e;left:740.00px;width:1000px;text-align:right;">408 KiB/s</div>
<div class="t" style="top:1196.83px;font-size:13.20px;color:#24292e;left:824.00px;width:1000px;text-align:right;">3.25 MiB/s</div>
<svg style="position:absolute;left:1828.50px;top:1205.50px;" width="12.00" height="12.00" viewBox="0 0 12.00 12.00"><line x1="2" y1="10.5" x2="10.5" y2="2" stroke="#8a8d91" stroke-width="1"/><line x1="6" y1="10.5" x2="10.5" y2="6" stroke="#8a8d91" stroke-width="1"/></svg>
<div style="position:absolute;left:77.00px;top:1229.00px;width:879.00px;height:317.00px;box-sizing:border-box;background:#fff;border:1px solid #e6e7e9;border-radius:6px;"></div>
<div class="t" style="top:1238.98px;font-size:15.85px;color:#24292e;left:87.50px;-webkit-text-stroke:0.48px #24292e;">Read Response Time</div>
<svg style="position:absolute;left:257.20px;top:1239.40px;" width="16.00" height="16.00" viewBox="0 0 16.00 16.00"><circle cx="8" cy="8" r="6.60" fill="none" stroke="#444" stroke-width="1.35"/><line x1="8" y1="7.7" x2="8" y2="10.9" stroke="#444" stroke-width="1.45" stroke-linecap="round"/><circle cx="8" cy="5.0" r="0.9" fill="#444"/></svg>
<div style="position:absolute;left:140.40px;top:1288.90px;width:796.60px;height:1.00px;background:#f2f2f3;"></div>
<div class="t" style="top:1283.16px;font-size:12.80px;color:#24292e;left:-866.80px;width:1000px;text-align:right;">1.6 ms</div>
<div style="position:absolute;left:140.40px;top:1305.25px;width:796.60px;height:1.00px;background:#f2f2f3;"></div>
<div class="t" style="top:1299.51px;font-size:12.80px;color:#24292e;left:-866.80px;width:1000px;text-align:right;">1.4 ms</div>
<div style="position:absolute;left:140.40px;top:1321.60px;width:796.60px;height:1.00px;background:#f2f2f3;"></div>
<div class="t" style="top:1315.86px;font-size:12.80px;color:#24292e;left:-866.80px;width:1000px;text-align:right;">1.2 ms</div>
<div style="position:absolute;left:140.40px;top:1337.95px;width:796.60px;height:1.00px;background:#f2f2f3;"></div>
<div class="t" style="top:1332.21px;font-size:12.80px;color:#24292e;left:-866.80px;width:1000px;text-align:right;">1 ms</div>
<div style="position:absolute;left:140.40px;top:1354.30px;width:796.60px;height:1.00px;background:#f2f2f3;"></div>
<div class="t" style="top:1348.56px;font-size:12.80px;color:#24292e;left:-866.80px;width:1000px;text-align:right;">800 µs</div>
<div style="position:absolute;left:140.40px;top:1370.65px;width:796.60px;height:1.00px;background:#f2f2f3;"></div>
<div class="t" style="top:1364.91px;font-size:12.80px;color:#24292e;left:-866.80px;width:1000px;text-align:right;">600 µs</div>
<div style="position:absolute;left:140.40px;top:1387.00px;width:796.60px;height:1.00px;background:#f2f2f3;"></div>
<div class="t" style="top:1381.26px;font-size:12.80px;color:#24292e;left:-866.80px;width:1000px;text-align:right;">400 µs</div>
<div style="position:absolute;left:140.40px;top:1403.35px;width:796.60px;height:1.00px;background:#f2f2f3;"></div>
<div class="t" style="top:1397.61px;font-size:12.80px;color:#24292e;left:-866.80px;width:1000px;text-align:right;">200 µs</div>
<div style="position:absolute;left:140.40px;top:1419.70px;width:796.60px;height:1.00px;background:#f2f2f3;"></div>
<div class="t" style="top:1413.96px;font-size:12.80px;color:#24292e;left:-866.80px;width:1000px;text-align:right;">0 s</div>
<div style="position:absolute;left:181.00px;top:1282.20px;width:1.00px;height:142.00px;background:#f2f2f3;"></div>
<div class="t" style="top:1431.60px;font-size:13.00px;color:#24292e;left:-318.50px;width:1000px;text-align:center;">21:00</div>
<div style="position:absolute;left:247.40px;top:1282.20px;width:1.00px;height:142.00px;background:#f2f2f3;"></div>
<div class="t" style="top:1431.60px;font-size:13.00px;color:#24292e;left:-252.10px;width:1000px;text-align:center;">21:05</div>
<div style="position:absolute;left:313.80px;top:1282.20px;width:1.00px;height:142.00px;background:#f2f2f3;"></div>
<div class="t" style="top:1431.60px;font-size:13.00px;color:#24292e;left:-185.70px;width:1000px;text-align:center;">21:10</div>
<div style="position:absolute;left:380.20px;top:1282.20px;width:1.00px;height:142.00px;background:#f2f2f3;"></div>
<div class="t" style="top:1431.60px;font-size:13.00px;color:#24292e;left:-119.30px;width:1000px;text-align:center;">21:15</div>
<div style="position:absolute;left:446.60px;top:1282.20px;width:1.00px;height:142.00px;background:#f2f2f3;"></div>
<div class="t" style="top:1431.60px;font-size:13.00px;color:#24292e;left:-52.90px;width:1000px;text-align:center;">21:20</div>
<div style="position:absolute;left:513.00px;top:1282.20px;width:1.00px;height:142.00px;background:#f2f2f3;"></div>
<div class="t" style="top:1431.60px;font-size:13.00px;color:#24292e;left:13.50px;width:1000px;text-align:center;">21:25</div>
<div style="position:absolute;left:579.40px;top:1282.20px;width:1.00px;height:142.00px;background:#f2f2f3;"></div>
<div class="t" style="top:1431.60px;font-size:13.00px;color:#24292e;left:79.90px;width:1000px;text-align:center;">21:30</div>
<div style="position:absolute;left:645.80px;top:1282.20px;width:1.00px;height:142.00px;background:#f2f2f3;"></div>
<div class="t" style="top:1431.60px;font-size:13.00px;color:#24292e;left:146.30px;width:1000px;text-align:center;">21:35</div>
<div style="position:absolute;left:712.20px;top:1282.20px;width:1.00px;height:142.00px;background:#f2f2f3;"></div>
<div class="t" style="top:1431.60px;font-size:13.00px;color:#24292e;left:212.70px;width:1000px;text-align:center;">21:40</div>
<div style="position:absolute;left:778.60px;top:1282.20px;width:1.00px;height:142.00px;background:#f2f2f3;"></div>
<div class="t" style="top:1431.60px;font-size:13.00px;color:#24292e;left:279.10px;width:1000px;text-align:center;">21:45</div>
<div style="position:absolute;left:845.00px;top:1282.20px;width:1.00px;height:142.00px;background:#f2f2f3;"></div>
<div class="t" style="top:1431.60px;font-size:13.00px;color:#24292e;left:345.50px;width:1000px;text-align:center;">21:50</div>
<div style="position:absolute;left:911.40px;top:1282.20px;width:1.00px;height:142.00px;background:#f2f2f3;"></div>
<div class="t" style="top:1431.60px;font-size:13.00px;color:#24292e;left:411.90px;width:1000px;text-align:center;">21:55</div>
<svg style="position:absolute;left:138.40px;top:1262.20px;overflow:visible;" width="800.60" height="162.00" viewBox="0 0 800.60 162.00"><path d="M4.6 155.9h2.8M10.4 156.7h2.8M14.9 147.7h2.8M20 147.7h2.8M22.9 157.5h2.8M30.4 151h2.8M34.3 155.9h2.8M37.8 151h2.8M43.3 149.3h2.8M48.4 156.7h2.8M52.2 156.7h2.8M59.5 149.3h2.8M64.1 157.5h2.8M70.3 157.5h2.8M73.7 147.7h2.8M76.4 157.5h2.8M83.5 154.2h2.8M88.6 152.6h2.8M95 152.6h2.8M99.7 147.7h2.8M104.6 156.7h2.8M111.9 157.5h2.8M114.6 151h2.8M118.3 152.6h2.8M125.1 154.2h2.8M129.9 152.6h2.8M135.6 149.3h2.8M141.3 147.7h2.8M145.1 153.4h2.8M151.3 157.5h2.8M158.6 147.7h2.8M164.7 156.7h2.8M171.1 153.4h2.8M178.9 147.7h2.8M184.5 155.9h2.8M190.5 147.7h2.8M194.5 157.5h2.8M197.3 151h2.8M200.3 157.5h2.8M205.1 156.7h2.8M207.7 152.6h2.8M214.4 157.5h2.8M217.1 147.7h2.8M223.8 152.6h2.8M230.3 153.4h2.8M235.8 154.2h2.8M241.1 157.5h2.8M245.3 157.5h2.8M248.4 149.3h2.8M251.1 155.9h2.8M258.9 154.2h2.8M264.8 156.7h2.8M271.1 153.4h2.8M275.3 156.7h2.8M282.7 152.6h2.8M287.3 149.3h2.8M291.9 147.7h2.8M298.2 157.5h2.8M304.1 149.3h2.8M308.1 155.9h2.8M315.7 152.6h2.8M323.6 149.3h2.8M327.8 153.4h2.8M330.3 152.6h2.8M338.3 153.4h2.8M340.9 147.7h2.8M346.6 156.7h2.8M349.4 153.4h2.8M354.5 153.4h2.8M360.3 154.2h2.8M366.9 157.5h2.8M372.6 157.5h2.8M380.4 154.2h2.8M386.4 154.2h2.8M392.2 153.4h2.8M395.6 156.7h2.8M399.9 153.4h2.8M407 154.2h2.8M411.1 152.6h2.8M414.2 157.5h2.8M422.1 156.7h2.8M426.3 155.9h2.8M432.4 154.2h2.8M436.2 156.7h2.8M442.4 157.5h2.8M445.5 153.4h2.8M453.2 155.9h2.8M458.1 156.7h2.8M461 155.9h2.8M468.4 151h2.8M472.4 157.5h2.8M475.1 155.9h2.8M479.3 147.7h2.8M482.8 154.2h2.8M487.2 157.5h2.8M494.1 153.4h2.8M499.9 152.6h2.8M504 154.2h2.8M509 152.6h2.8M513.1 147.7h2.8M517.9 152.6h2.8M521.2 157.5h2.8M526.4 147.7h2.8M534.3 152.6h2.8M539.9 155.9h2.8M542.5 151h2.8M549.6 149.3h2.8M557.4 149.3h2.8M561.8 155.9h2.8M569.1 147.7h2.8M576.9 157.5h2.8M583.9 157.5h2.8M586.6 149.3h2.8M594.1 152.6h2.8M599.8 157.5h2.8M605 157.5h2.8M608.4 154.2h2.8M612.2 157.5h2.8M617.6 152.6h2.8M620.4 147.7h2.8M623.5 156.7h2.8M627.4 149.3h2.8M632.5 157.5h2.8M637 155.9h2.8M640.1 157.5h2.8M643.6 154.2h2.8M651.1 156.7h2.8M658.2 157.5h2.8M663.4 147.7h2.8M670.6 157.5h2.8M677.3 155.9h2.8M681.2 149.3h2.8M686.6 157.5h2.8M691.7 157.5h2.8M698.9 156.7h2.8M701.7 157.5h2.8M704.5 157.5h2.8M711.7 157.5h2.8M717.1 151h2.8M721.3 153.4h2.8M724.2 152.6h2.8M730.3 147.7h2.8M734.4 154.2h2.8M738 153.4h2.8M742.9 156.7h2.8M748.4 152.6h2.8M755.3 147.7h2.8M758.8 153.4h2.8M763.8 149.3h2.8M768.4 157.5h2.8M774.3 152.6h2.8M777.1 151h2.8M783.8 153.4h2.8M788.6 152.6h2.8M790.2 148.2h2.8M793.2 148.2h2.8M796.2 148.2h2.8" fill="none" stroke="#5274cd" stroke-width="2.1"/><path d="M252.2 76.4h2.8M422.9 76.5h2.8M443.7 138.3h2.8" fill="none" stroke="#d8ab35" stroke-width="2.1"/><path d="M422.9 35.6h2.8M443 136.5h2.8M444.7 145.8h2.8" fill="none" stroke="#5a9e4b" stroke-width="2.1"/></svg>
<div class="t" style="top:1448.96px;font-size:13.40px;color:#3a5ec2;left:119.40px;-webkit-text-stroke:0.45px #3a5ec2;">Name</div>
<div class="t" style="top:1448.96px;font-size:13.40px;color:#3a5ec2;left:-130.60px;width:1000px;text-align:right;-webkit-text-stroke:0.45px #3a5ec2;">Mean</div>
<div class="t" style="top:1448.96px;font-size:13.40px;color:#3a5ec2;left:-63.00px;width:1000px;text-align:right;-webkit-text-stroke:0.45px #3a5ec2;">Max</div>
<div style="position:absolute;left:87.00px;top:1468.00px;width:859.50px;height:1.00px;background:#dcdde0;"></div>
<div style="position:absolute;left:87.00px;top:1492.00px;width:859.50px;height:1.00px;background:#dcdde0;"></div>
<div style="position:absolute;left:87.00px;top:1517.00px;width:859.50px;height:1.00px;background:#dcdde0;"></div>
<div style="position:absolute;left:95.40px;top:1479.20px;width:15.00px;height:4.20px;border-radius:2.1px;background:#5b9a4c;"></div>
<div class="t" style="top:1472.98px;font-size:14.20px;color:#24292e;left:119.40px;">dm-0</div>
<div class="t" style="top:1473.83px;font-size:13.20px;color:#24292e;left:-130.60px;width:1000px;text-align:right;">731 µs</div>
<div class="t" style="top:1473.83px;font-size:13.20px;color:#24292e;left:-63.00px;width:1000px;text-align:right;">1.50 ms</div>
<div style="position:absolute;left:95.40px;top:1503.80px;width:15.00px;height:4.20px;border-radius:2.1px;background:#d6a93a;"></div>
<div class="t" style="top:1497.58px;font-size:14.20px;color:#24292e;left:119.40px;">vda</div>
<div class="t" style="top:1498.43px;font-size:13.20px;color:#24292e;left:-130.60px;width:1000px;text-align:right;">615 µs</div>
<div class="t" style="top:1498.43px;font-size:13.20px;color:#24292e;left:-63.00px;width:1000px;text-align:right;">1.00 ms</div>
<div style="position:absolute;left:95.40px;top:1528.40px;width:15.00px;height:4.20px;border-radius:2.1px;background:#3c6bd6;"></div>
<div class="t" style="top:1522.18px;font-size:14.20px;color:#24292e;left:119.40px;">vdb</div>
<div class="t" style="top:1523.03px;font-size:13.20px;color:#24292e;left:-130.60px;width:1000px;text-align:right;">46.8 µs</div>
<div class="t" style="top:1523.03px;font-size:13.20px;color:#24292e;left:-63.00px;width:1000px;text-align:right;">125 µs</div>
<svg style="position:absolute;left:941.50px;top:1531.50px;" width="12.00" height="12.00" viewBox="0 0 12.00 12.00"><line x1="2" y1="10.5" x2="10.5" y2="2" stroke="#8a8d91" stroke-width="1"/><line x1="6" y1="10.5" x2="10.5" y2="6" stroke="#8a8d91" stroke-width="1"/></svg>
<div style="position:absolute;left:964.00px;top:1229.00px;width:879.00px;height:317.00px;box-sizing:border-box;background:#fff;border:1px solid #e6e7e9;border-radius:6px;"></div>
<div class="t" style="top:1238.73px;font-size:16.15px;color:#24292e;left:974.50px;-webkit-text-stroke:0.48px #24292e;">Write Response Time</div>
<svg style="position:absolute;left:1147.00px;top:1239.40px;" width="16.00" height="16.00" viewBox="0 0 16.00 16.00"><circle cx="8" cy="8" r="6.60" fill="none" stroke="#444" stroke-width="1.35"/><line x1="8" y1="7.7" x2="8" y2="10.9" stroke="#444" stroke-width="1.45" stroke-linecap="round"/><circle cx="8" cy="5.0" r="0.9" fill="#444"/></svg>
<div style="position:absolute;left:1026.50px;top:1281.00px;width:797.50px;height:1.00px;background:#f2f2f3;"></div>
<div class="t" style="top:1275.26px;font-size:12.80px;color:#24292e;left:20.70px;width:1000px;text-align:right;">1.2 ms</div>
<div style="position:absolute;left:1026.50px;top:1304.20px;width:797.50px;height:1.00px;background:#f2f2f3;"></div>
<div class="t" style="top:1298.46px;font-size:12.80px;color:#24292e;left:20.70px;width:1000px;text-align:right;">1 ms</div>
<div style="position:absolute;left:1026.50px;top:1327.40px;width:797.50px;height:1.00px;background:#f2f2f3;"></div>
<div class="t" style="top:1321.66px;font-size:12.80px;color:#24292e;left:20.70px;width:1000px;text-align:right;">800 µs</div>
<div style="position:absolute;left:1026.50px;top:1350.70px;width:797.50px;height:1.00px;background:#f2f2f3;"></div>
<div class="t" style="top:1344.96px;font-size:12.80px;color:#24292e;left:20.70px;width:1000px;text-align:right;">600 µs</div>
<div style="position:absolute;left:1026.50px;top:1373.90px;width:797.50px;height:1.00px;background:#f2f2f3;"></div>
<div class="t" style="top:1368.16px;font-size:12.80px;color:#24292e;left:20.70px;width:1000px;text-align:right;">400 µs</div>
<div style="position:absolute;left:1026.50px;top:1397.10px;width:797.50px;height:1.00px;background:#f2f2f3;"></div>
<div class="t" style="top:1391.36px;font-size:12.80px;color:#24292e;left:20.70px;width:1000px;text-align:right;">200 µs</div>
<div style="position:absolute;left:1026.50px;top:1420.30px;width:797.50px;height:1.00px;background:#f2f2f3;"></div>
<div class="t" style="top:1414.56px;font-size:12.80px;color:#24292e;left:20.70px;width:1000px;text-align:right;">0 s</div>
<div style="position:absolute;left:1067.90px;top:1281.50px;width:1.00px;height:143.30px;background:#f2f2f3;"></div>
<div class="t" style="top:1431.60px;font-size:13.00px;color:#24292e;left:568.40px;width:1000px;text-align:center;">21:00</div>
<div style="position:absolute;left:1134.30px;top:1281.50px;width:1.00px;height:143.30px;background:#f2f2f3;"></div>
<div class="t" style="top:1431.60px;font-size:13.00px;color:#24292e;left:634.80px;width:1000px;text-align:center;">21:05</div>
<div style="position:absolute;left:1200.70px;top:1281.50px;width:1.00px;height:143.30px;background:#f2f2f3;"></div>
<div class="t" style="top:1431.60px;font-size:13.00px;color:#24292e;left:701.20px;width:1000px;text-align:center;">21:10</div>
<div style="position:absolute;left:1267.10px;top:1281.50px;width:1.00px;height:143.30px;background:#f2f2f3;"></div>
<div class="t" style="top:1431.60px;font-size:13.00px;color:#24292e;left:767.60px;width:1000px;text-align:center;">21:15</div>
<div style="position:absolute;left:1333.50px;top:1281.50px;width:1.00px;height:143.30px;background:#f2f2f3;"></div>
<div class="t" style="top:1431.60px;font-size:13.00px;color:#24292e;left:834.00px;width:1000px;text-align:center;">21:20</div>
<div style="position:absolute;left:1399.90px;top:1281.50px;width:1.00px;height:143.30px;background:#f2f2f3;"></div>
<div class="t" style="top:1431.60px;font-size:13.00px;color:#24292e;left:900.40px;width:1000px;text-align:center;">21:25</div>
<div style="position:absolute;left:1466.30px;top:1281.50px;width:1.00px;height:143.30px;background:#f2f2f3;"></div>
<div class="t" style="top:1431.60px;font-size:13.00px;color:#24292e;left:966.80px;width:1000px;text-align:center;">21:30</div>
<div style="position:absolute;left:1532.70px;top:1281.50px;width:1.00px;height:143.30px;background:#f2f2f3;"></div>
<div class="t" style="top:1431.60px;font-size:13.00px;color:#24292e;left:1033.20px;width:1000px;text-align:center;">21:35</div>
<div style="position:absolute;left:1599.10px;top:1281.50px;width:1.00px;height:143.30px;background:#f2f2f3;"></div>
<div class="t" style="top:1431.60px;font-size:13.00px;color:#24292e;left:1099.60px;width:1000px;text-align:center;">21:40</div>
<div style="position:absolute;left:1665.50px;top:1281.50px;width:1.00px;height:143.30px;background:#f2f2f3;"></div>
<div class="t" style="top:1431.60px;font-size:13.00px;color:#24292e;left:1166.00px;width:1000px;text-align:center;">21:45</div>
<div style="position:absolute;left:1731.90px;top:1281.50px;width:1.00px;height:143.30px;background:#f2f2f3;"></div>
<div class="t" style="top:1431.60px;font-size:13.00px;color:#24292e;left:1232.40px;width:1000px;text-align:center;">21:50</div>
<div style="position:absolute;left:1798.30px;top:1281.50px;width:1.00px;height:143.30px;background:#f2f2f3;"></div>
<div class="t" style="top:1431.60px;font-size:13.00px;color:#24292e;left:1298.80px;width:1000px;text-align:center;">21:55</div>
<svg style="position:absolute;left:1024.50px;top:1261.50px;overflow:visible;" width="801.50" height="163.30" viewBox="0 0 801.50 163.30"><path d="M2.6 148.6h2.8M5.1 149.1h2.8M7.2 151.6h2.8M10.5 159.3h2.8M13.9 143.3h2.8M16.6 149.7h2.8M18.6 159.2h2.8M21.4 152.2h2.8M24.8 154.9h2.8M28 144.8h2.8M31.1 147h2.8M34.1 142.7h2.8M36 142.6h2.8M38.8 159.3h2.8M40.8 150.3h2.8M44.1 146.3h2.8M46.3 136.7h2.8M48.4 140.7h2.8M51.6 140.7h2.8M54 138.7h2.8M56.5 159h2.8M59 146.5h2.8M62.2 137.3h2.8M65.4 137.9h2.8M68.5 146.6h2.8M71.9 148h2.8M74.3 147.8h2.8M76.2 149.1h2.8M78.7 143.5h2.8M81.1 157.6h2.8M83.3 152.6h2.8M85.5 149h2.8M87.5 142.3h2.8M90.6 143.6h2.8M93.9 141h2.8M96.4 154.3h2.8M98.7 151.8h2.8M101.8 144.7h2.8M105.1 151.6h2.8M108.1 145.3h2.8M111.4 131h2.8M114.4 155.1h2.8M117.6 159.3h2.8M119.7 151h2.8M123.1 151.9h2.8M126.2 140.9h2.8M129.4 157.5h2.8M131.2 145.6h2.8M134.4 154h2.8M136.7 151.9h2.8M139.2 155.5h2.8M141.4 148.5h2.8M144 149.2h2.8M146.5 157.5h2.8M149 139.1h2.8M151.9 155.1h2.8M153.8 150.5h2.8M156.7 159.1h2.8M159.2 144.3h2.8M162.2 147.7h2.8M164.3 155.9h2.8M166.1 154.9h2.8M167.9 154.8h2.8M170 146.6h2.8M172.4 147.1h2.8M175.1 155.7h2.8M178.3 144.8h2.8M181.2 130h2.8M184.2 140.1h2.8M186.6 145.3h2.8M189.3 159.3h2.8M191.4 147.1h2.8M193.7 141.5h2.8M196 156.2h2.8M197.9 153.4h2.8M201 145.1h2.8M203.8 157.4h2.8M206.6 149.3h2.8M209.4 135.1h2.8M211.9 144.4h2.8M214.6 156.8h2.8M216.7 147.6h2.8M219.9 135.6h2.8M223 132.9h2.8M224.9 155h2.8M227.2 146.6h2.8M229.2 138h2.8M232.6 145h2.8M235 135.7h2.8M236.9 147.8h2.8M239 146.6h2.8M241.2 147.5h2.8M243.6 134.9h2.8M246.2 139h2.8M248.6 152.4h2.8M251.4 148.3h2.8M254.2 151.5h2.8M257.4 159.3h2.8M259.8 150.6h2.8M262.7 147.4h2.8M265.6 141.3h2.8M268.8 142.2h2.8M270.6 157.6h2.8M273.6 157.8h2.8M275.9 151.4h2.8M278 147.7h2.8M280.7 145.4h2.8M283.6 155.2h2.8M286.9 153.4h2.8M289.2 157.6h2.8M292.5 145.3h2.8M294.9 152.7h2.8M297 158.9h2.8M299.2 155.1h2.8M302.3 156.1h2.8M304.2 159.3h2.8M307.2 157.6h2.8M310.5 146.6h2.8M313.2 136.9h2.8M315.1 153.5h2.8M318.3 148.6h2.8M320.9 137.1h2.8M323.7 137.5h2.8M326.5 142.1h2.8M328.8 143.9h2.8M331.3 154.5h2.8M333.4 143.3h2.8M336 141.3h2.8M339.3 148.3h2.8M341.5 150.4h2.8M344.7 130h2.8M347.8 141.6h2.8M351 138.5h2.8M353.6 130.3h2.8M356.1 142.8h2.8M359 135.3h2.8M361.2 129.6h2.8M364.4 144.3h2.8M367.3 143.2h2.8M369.3 148.5h2.8M371.3 154.3h2.8M373.7 156.3h2.8M376.3 147.4h2.8M379.6 137.6h2.8M382.5 159.3h2.8M385 147.2h2.8M388.3 144.5h2.8M391.2 159.1h2.8M393.7 153.3h2.8M396.5 144h2.8M399.7 145.8h2.8M402 139.8h2.8M404.3 143.7h2.8M406.8 134.7h2.8M409.9 143.1h2.8M412.6 139.5h2.8M415.9 156.2h2.8M417.8 148.8h2.8M420.9 152.7h2.8M423.5 154.9h2.8M426.4 156.1h2.8M428.8 151.3h2.8M431.5 159.3h2.8M433.3 152.1h2.8M435.9 159.3h2.8M439 142h2.8M442.2 159.3h2.8M445.1 145.6h2.8M448.3 155.8h2.8M450.9 140.1h2.8M453.4 147.7h2.8M455.7 144.6h2.8M458.4 143.6h2.8M461.6 149.6h2.8M464.6 149h2.8M467.2 156.7h2.8M470 147.2h2.8M471.8 159.3h2.8M475 143h2.8M477.3 159.3h2.8M479.6 138.1h2.8M482 156.2h2.8M484.5 144.5h2.8M486.6 139h2.8M488.9 138.7h2.8M491.9 132.9h2.8M494.5 142.6h2.8M497.1 136.7h2.8M499.1 145.5h2.8M502.1 140.7h2.8M505.1 140.5h2.8M507.4 142.4h2.8M509.5 139h2.8M511.4 150.4h2.8M513.7 155.1h2.8M516.1 159.3h2.8M519.4 144.8h2.8M522.3 142.2h2.8M525.1 149.4h2.8M527.7 143.7h2.8M529.9 131.3h2.8M532.7 157h2.8M535.5 143.1h2.8M538 144h2.8M540.4 151.8h2.8M542.9 159.3h2.8M545.9 143.7h2.8M547.7 150.1h2.8M549.7 149.2h2.8M552.7 159.3h2.8M556 146.3h2.8M558.6 146.7h2.8M561.2 159.3h2.8M564.2 153.4h2.8M566.8 150.2h2.8M570.1 157.9h2.8M572.8 154h2.8M575.7 157.9h2.8M578.3 153.6h2.8M580.1 159.3h2.8M582.6 150.2h2.8M584.5 146.5h2.8M587.5 139.3h2.8M589.4 147.2h2.8M591.5 159.3h2.8M594.4 146.8h2.8M596.9 159.3h2.8M598.7 151.5h2.8M601.2 152h2.8M603.8 150.6h2.8M606.4 151.1h2.8M609.6 152.4h2.8M612.4 148.6h2.8M615.5 144.7h2.8M618.4 125.8h2.8M620.6 144.4h2.8M623.4 155.1h2.8M625.8 141.7h2.8M628.5 127.4h2.8M630.4 137.2h2.8M633 141h2.8M635.2 147.9h2.8M638.1 137.1h2.8M641.4 140.8h2.8M643.7 146.7h2.8M646.1 154.1h2.8M648.7 142.3h2.8M651.5 146.3h2.8M653.8 141.5h2.8M657 140.3h2.8M659.6 159.3h2.8M661.4 138.3h2.8M664.2 124h2.8M666.5 155.3h2.8M668.8 144.4h2.8M670.7 151.5h2.8M672.7 138.3h2.8M675.9 152h2.8M679 149.3h2.8M681.4 141.4h2.8M684 149.8h2.8M686.2 143.7h2.8M688.5 155.4h2.8M690.4 158.3h2.8M693.2 137.1h2.8M696.3 159.3h2.8M699.5 146.5h2.8M701.8 139.8h2.8M704.1 159.3h2.8M707.1 140.7h2.8M710 154.1h2.8M712.1 139.4h2.8M714.6 142.1h2.8M717.4 159.3h2.8M720 153.4h2.8M722.9 149.4h2.8M725.6 145.7h2.8M727.9 150.1h2.8M731.2 151.1h2.8M733.5 158.4h2.8M735.8 148.8h2.8M738 148.7h2.8M740.1 152.8h2.8M743.2 152.4h2.8M746.2 148.8h2.8M749 141h2.8M752.3 137.4h2.8M754.6 137h2.8M757.6 145.3h2.8M759.7 150.7h2.8M762 148.4h2.8M764.2 153.1h2.8M766.4 145.4h2.8M769.1 144.3h2.8M772.3 143.5h2.8M775.3 144.8h2.8M778.2 141.1h2.8M781.5 152.1h2.8M784.7 147.4h2.8M786.6 138.7h2.8M789.2 150.1h2.8M791.9 149.9h2.8M795.2 137.9h2.8M419.1 58h2.8" fill="none" stroke="#5a9e4b" stroke-width="2.1"/><path d="M2.6 145h2.8M4.8 130.4h2.8M6.9 139.8h2.8M8.7 141.3h2.8M11.3 140.1h2.8M14.1 136.1h2.8M16.8 143.7h2.8M19.9 135.3h2.8M23 135.4h2.8M25.3 137.5h2.8M27.3 140.9h2.8M29.7 145.4h2.8M31.8 138.7h2.8M34.3 128.8h2.8M37.1 147.2h2.8M39.3 140.8h2.8M41.2 138.7h2.8M44.3 135.9h2.8M47.4 130.6h2.8M49.4 132.9h2.8M52.6 128.9h2.8M55.5 130.7h2.8M58.8 129.6h2.8M60.8 133.8h2.8M63.5 141.1h2.8M66.1 137.2h2.8M68.9 131.6h2.8M71 139.1h2.8M73.4 134.5h2.8M76.6 143.3h2.8M79.4 139.2h2.8M81.2 133.2h2.8M84.2 146.8h2.8M86.9 126.8h2.8M89.1 145.7h2.8M91.2 134.4h2.8M93.3 132.6h2.8M95.3 127.6h2.8M97.1 133.1h2.8M99.7 128.3h2.8M101.5 141.6h2.8M104.5 131.3h2.8M107.3 126.7h2.8M110 152.7h2.8M112.1 132.5h2.8M115.4 139.6h2.8M117.5 138.6h2.8M119.4 139.8h2.8M122.1 145.4h2.8M124.3 148.6h2.8M127 134.1h2.8M129.2 141.8h2.8M131.1 144.5h2.8M134 134.6h2.8M136.9 147.7h2.8M140.2 132.5h2.8M142.3 142.4h2.8M145 147.2h2.8M147.4 135.2h2.8M149.3 138.5h2.8M152.3 137.2h2.8M155.2 145.9h2.8M158.1 142.6h2.8M160.7 145.8h2.8M164.1 141.8h2.8M166.6 145.5h2.8M169.1 140.2h2.8M171.6 148.5h2.8M174 134.5h2.8M176.8 138.9h2.8M179.9 138.6h2.8M181.8 135.6h2.8M183.8 123.4h2.8M186 145.6h2.8M189.4 125.9h2.8M191.5 140.1h2.8M194.2 141.8h2.8M196.5 132.5h2.8M198.3 132.4h2.8M200.2 135.8h2.8M202.1 142.6h2.8M205.4 129.5h2.8M207.8 136.2h2.8M211 140.4h2.8M213.1 143.5h2.8M216 136.4h2.8M217.9 133.3h2.8M220.1 132.9h2.8M223.4 127.9h2.8M225.8 131.3h2.8M227.7 129.2h2.8M230.2 133.8h2.8M232.8 131h2.8M235.2 126.2h2.8M237.2 132.6h2.8M239.3 134.2h2.8M241.7 141.6h2.8M244.4 137.6h2.8M247.7 146.4h2.8M250.6 147.1h2.8M252.4 127.7h2.8M254.5 136.1h2.8M256.9 136.4h2.8M259.3 143.8h2.8M261.9 143.9h2.8M264.8 126.4h2.8M267.2 145.5h2.8M269.6 127.5h2.8M272.8 139h2.8M274.8 139.9h2.8M277.1 132.8h2.8M279.6 133.8h2.8M282.2 141.9h2.8M284.5 146.9h2.8M286.6 145.3h2.8M288.5 141.9h2.8M290.9 153.6h2.8M293 136.5h2.8M295.7 138.5h2.8M299 146.3h2.8M301.8 149.2h2.8M305 138.1h2.8M307 142h2.8M309 128h2.8M312.4 136.9h2.8M315 136.2h2.8M317.8 144.4h2.8M320.2 130.7h2.8M322.2 136.6h2.8M324.1 132.9h2.8M327.3 145.4h2.8M330.3 135.2h2.8M332.6 130.9h2.8M335.8 131.8h2.8M338.6 136.8h2.8M341.4 133.8h2.8M343.5 136.3h2.8M345.6 137.2h2.8M348.8 134.8h2.8M351.3 136.9h2.8M354.5 137.1h2.8M356.4 129h2.8M359.1 134.5h2.8M361.8 134.3h2.8M364.7 137.4h2.8M366.6 138h2.8M369.4 133.6h2.8M371.4 133.4h2.8M373.2 135.9h2.8M375.1 131h2.8M378 136.1h2.8M379.9 139.6h2.8M382.7 139.8h2.8M385.6 141.1h2.8M388.6 144.6h2.8M390.4 134.1h2.8M392.9 136.4h2.8M395.9 133.6h2.8M398.6 136.4h2.8M400.9 132.7h2.8M402.7 134.3h2.8M404.6 134h2.8M407.5 141.2h2.8M409.7 138.2h2.8M411.5 150h2.8M414.3 130.6h2.8M416.3 145.2h2.8M419.3 141h2.8M422.1 145.6h2.8M424.9 139.7h2.8M428.1 133.3h2.8M430 151.2h2.8M431.8 142.1h2.8M434.4 138.2h2.8M437 144.2h2.8M440.3 130.9h2.8M442.3 150.4h2.8M445.7 141.6h2.8M447.8 133.5h2.8M450.9 143.1h2.8M453.5 140.8h2.8M456.1 140.3h2.8M459 139.4h2.8M461.2 123.6h2.8M463.2 136.5h2.8M466.3 138.1h2.8M469.1 145h2.8M471.2 136.3h2.8M474.2 126.6h2.8M477.3 139h2.8M480.3 135.9h2.8M483.6 138.2h2.8M485.7 126.5h2.8M489 133h2.8M491.9 133.7h2.8M494.8 138.3h2.8M498.1 128.2h2.8M501 146.7h2.8M503.8 129.8h2.8M506.9 142.6h2.8M509.9 137.8h2.8M512.5 139h2.8M515.3 135.1h2.8M518.3 138.1h2.8M521.2 135.1h2.8M524.1 138h2.8M527.3 138.1h2.8M530.3 133.9h2.8M532.5 137.7h2.8M535.1 118.9h2.8M537.2 134h2.8M539.3 133.6h2.8M542 139.6h2.8M544.8 136h2.8M547.8 136h2.8M551 138.4h2.8M553.3 143h2.8M555.8 129.7h2.8M558.9 140h2.8M562.3 133.4h2.8M564.6 148.5h2.8M567.4 142h2.8M569.3 142.6h2.8M572.7 130.4h2.8M575.1 133.5h2.8M577.3 148.3h2.8M580.1 130.7h2.8M582.1 136.5h2.8M585.3 143.6h2.8M587.9 134.2h2.8M590.2 144.9h2.8M593.6 132.7h2.8M596.3 141.4h2.8M599 143h2.8M602.3 145.2h2.8M604.8 133.3h2.8M608 140.3h2.8M611.3 139.1h2.8M614 136.1h2.8M616.8 139.1h2.8M619 130.5h2.8M621 141.1h2.8M623.5 131.5h2.8M626.6 141.5h2.8M629.6 128.5h2.8M632.2 136.5h2.8M635.1 131.9h2.8M638.3 123.3h2.8M641.7 136.3h2.8M644.4 150.7h2.8M647.3 130.5h2.8M649.2 130.8h2.8M652.3 141.5h2.8M654.8 140.2h2.8M657.6 140.1h2.8M660.8 140.4h2.8M664.1 127.5h2.8M666 127.1h2.8M668.5 139.5h2.8M670.4 136.1h2.8M672.5 132.8h2.8M675.1 143.1h2.8M677.9 144.4h2.8M681 137.5h2.8M683.3 137.8h2.8M685.3 142.3h2.8M688.1 142.7h2.8M690.4 136.4h2.8M693.7 140h2.8M696.2 145.1h2.8M698.7 147.4h2.8M701.6 134h2.8M704.7 144.8h2.8M707.1 139.8h2.8M709.7 138.4h2.8M711.6 139.7h2.8M714 132.4h2.8M716.1 150.3h2.8M718.8 133h2.8M721.7 131.6h2.8M725 140.9h2.8M727.9 138.8h2.8M731.3 149.8h2.8M734 147.1h2.8M736 135.5h2.8M738.4 139.4h2.8M740.9 143h2.8M743.2 149.4h2.8M745.5 147.7h2.8M748.2 134.5h2.8M750.7 136.6h2.8M753.5 127.4h2.8M756.1 143.6h2.8M758.3 129.7h2.8M761.4 144.3h2.8M764.3 138.2h2.8M767 138.7h2.8M769.4 138.2h2.8M771.7 146.7h2.8M774.6 133.8h2.8M776.7 134.5h2.8M779 141.4h2.8M782.2 133.6h2.8M784.1 132.7h2.8M786.4 138.2h2.8M789 141.3h2.8M790.8 131.1h2.8M793.6 129.4h2.8M795.8 131.1h2.8M419.1 52.5h2.8M479.1 76.5h2.8M530.1 87.1h2.8M712.1 92h2.8M201.1 101.5h2.8" fill="none" stroke="#d8ab35" stroke-width="2.1"/><path d="M2.6 121.9h2.8M5.8 117.7h2.8M7.6 130.6h2.8M9.5 119.3h2.8M12.2 119.7h2.8M14.6 119.2h2.8M17.5 125.8h2.8M19.6 115.2h2.8M21.8 113.1h2.8M25.1 114.3h2.8M27.8 118.2h2.8M30.8 125h2.8M32.8 122.6h2.8M35.7 113.8h2.8M38.2 118.4h2.8M40.3 120h2.8M42.6 120.9h2.8M45.8 124.9h2.8M49 115.9h2.8M51.6 117.9h2.8M53.4 128.9h2.8M55.4 112.6h2.8M58.2 111.5h2.8M61.4 110.5h2.8M63.5 112.4h2.8M66.2 114h2.8M68 108.6h2.8M71.3 110.9h2.8M73.8 120.2h2.8M75.7 110.1h2.8M78.4 111.7h2.8M81.8 109.2h2.8M83.7 122.3h2.8M85.7 118h2.8M87.9 97h2.8M89.9 115.6h2.8M92.8 110.6h2.8M95.6 114.5h2.8M97.5 117.8h2.8M100.2 105.8h2.8M103.3 106.6h2.8M106.5 107.7h2.8M109.2 115.2h2.8M112.6 109h2.8M115.3 102.1h2.8M117.6 111.2h2.8M120.1 112.1h2.8M122.4 108.9h2.8M124.4 117h2.8M127.4 118.2h2.8M129.3 115.2h2.8M131.9 126.8h2.8M134.8 117.6h2.8M137.3 109.1h2.8M139.4 112.2h2.8M141.8 118.2h2.8M145 121.8h2.8M147.1 110.6h2.8M150.2 116.3h2.8M153.6 114.8h2.8M155.7 102.5h2.8M158.4 122.8h2.8M160.3 115.1h2.8M162.7 118.1h2.8M165.5 115.7h2.8M167.5 122.3h2.8M170.2 120.6h2.8M172.9 120.9h2.8M175.8 117.5h2.8M178.7 120.1h2.8M181.7 129.7h2.8M183.8 113.5h2.8M186.8 118.2h2.8M189.4 129.3h2.8M191.3 111.7h2.8M193.4 115.2h2.8M196.2 108.6h2.8M198.4 111.6h2.8M200.2 113.5h2.8M202.9 111h2.8M205.3 113.6h2.8M208.6 111.6h2.8M211.3 116.1h2.8M214.6 118h2.8M217.9 123.5h2.8M220.5 118.7h2.8M223.8 109.1h2.8M226.5 112h2.8M228.7 115.3h2.8M230.7 121.3h2.8M233.6 117.7h2.8M236.4 109.1h2.8M238.3 114.5h2.8M241.5 113.1h2.8M243.7 106.4h2.8M246.5 118.2h2.8M249.7 104.7h2.8M252.5 110.9h2.8M255.4 115.2h2.8M257.5 113.2h2.8M260.2 114.3h2.8M262.6 113.8h2.8M265.2 116.9h2.8M268.2 115.9h2.8M270.5 115.2h2.8M273.9 115.5h2.8M276.6 99.3h2.8M279.7 116.4h2.8M281.7 116.3h2.8M284.8 111.2h2.8M286.9 114.3h2.8M288.9 112.9h2.8M292.2 111.7h2.8M295.1 118.8h2.8M297.7 124.2h2.8M300.5 121.2h2.8M302.7 121.5h2.8M304.8 115.5h2.8M307.3 121.2h2.8M309.3 122.6h2.8M312.3 118.2h2.8M315.5 119.8h2.8M318.3 120h2.8M320.5 117.8h2.8M322.8 114.5h2.8M325.9 131.7h2.8M329.1 108h2.8M332.4 122.2h2.8M335.7 114.3h2.8M337.9 115.9h2.8M340.7 123.8h2.8M343.8 119.2h2.8M346.3 118.6h2.8M348.8 115.6h2.8M351.6 124.4h2.8M353.7 121.2h2.8M356.1 119.4h2.8M358.8 114h2.8M360.9 117.6h2.8M362.9 122.2h2.8M365.7 116.4h2.8M368.5 107.5h2.8M371.5 105.1h2.8M373.6 116.8h2.8M376.3 111.6h2.8M379 110.4h2.8M381.5 108.7h2.8M384.7 116.1h2.8M387.3 106.6h2.8M389.6 109.1h2.8M392.2 113.7h2.8M395.5 114.3h2.8M397.3 112.8h2.8M399.3 111.9h2.8M402.4 106.3h2.8M404.9 113.6h2.8M408.1 115.5h2.8M411 112.3h2.8M413.4 112.6h2.8M415.8 107.5h2.8M417.9 120.4h2.8M420.6 119.9h2.8M422.4 114.2h2.8M425 115.9h2.8M428.1 121.5h2.8M431.1 128.2h2.8M433.4 115.4h2.8M436.3 115.5h2.8M438.4 124.7h2.8M440.8 113.2h2.8M443.6 132.3h2.8M445.4 124h2.8M447.5 118.9h2.8M449.5 127.5h2.8M451.5 117.8h2.8M454.7 112.3h2.8M456.9 116h2.8M459.3 110.5h2.8M462.5 105.9h2.8M465.4 118.6h2.8M468 110.3h2.8M470.5 116.2h2.8M473 129.5h2.8M475.7 131h2.8M479 119.3h2.8M481.3 122h2.8M484.6 119.6h2.8M486.7 134.3h2.8M489.3 113.7h2.8M492.2 121h2.8M495.5 115.8h2.8M498.7 113.5h2.8M501.4 111h2.8M503.7 104h2.8M505.7 113.4h2.8M508.1 111.5h2.8M511.2 125.9h2.8M513.1 109.3h2.8M515.1 109.3h2.8M517.3 108.6h2.8M520.1 121.3h2.8M523.3 115.9h2.8M526.3 112.3h2.8M528.7 116.1h2.8M532.1 117.5h2.8M534.7 110.8h2.8M536.7 108.4h2.8M538.7 118.1h2.8M542 115.1h2.8M544.8 111.2h2.8M548.1 111h2.8M550.3 110h2.8M552.1 115.6h2.8M555.3 113h2.8M557.4 107.3h2.8M559.4 113.5h2.8M561.7 114.6h2.8M564.6 113.2h2.8M567.8 122.8h2.8M570.2 112.9h2.8M573.4 120h2.8M576.4 119.2h2.8M578.6 117.6h2.8M581.7 117.8h2.8M584.6 121.8h2.8M587.6 112h2.8M589.5 119.3h2.8M592.8 125.1h2.8M594.7 123.1h2.8M597.8 121h2.8M600.2 124.8h2.8M602.6 129.3h2.8M605.2 119.7h2.8M608.6 122.7h2.8M610.9 126.5h2.8M613.9 121.4h2.8M616.6 122.4h2.8M619.8 124.1h2.8M622.9 122.2h2.8M625.1 123h2.8M627.7 106.6h2.8M630.1 112.3h2.8M633.4 113.1h2.8M636.5 108.5h2.8M639.3 115.9h2.8M641.8 114.5h2.8M644.3 101.9h2.8M647.6 120.4h2.8M651 115.5h2.8M653.2 115.3h2.8M655 111.5h2.8M657.2 111.8h2.8M659.9 119.2h2.8M663.3 112.4h2.8M665.4 109.8h2.8M668.2 117.7h2.8M670.3 112.9h2.8M672.4 122.7h2.8M675 114.3h2.8M678 115.1h2.8M680.8 113.1h2.8M683.8 102.9h2.8M686.4 117h2.8M688.9 115.6h2.8M690.9 119.9h2.8M693.8 108.6h2.8M695.7 121.2h2.8M698.4 114.3h2.8M700.4 120.8h2.8M703.1 122.9h2.8M706.4 117.4h2.8M708.7 116.9h2.8M711.6 104.4h2.8M714.5 109.3h2.8M717.5 115.1h2.8M720.7 114.6h2.8M723.3 121.2h2.8M726.4 113.5h2.8M728.8 116h2.8M732.1 120.8h2.8M735 121.5h2.8M738.3 115h2.8M740.6 124.9h2.8M743.9 133.1h2.8M746.1 120.6h2.8M749.2 129.4h2.8M751.1 127.2h2.8M754.2 118.6h2.8M756.8 117.3h2.8M759.9 118.6h2.8M763.1 120.4h2.8M766.1 118.6h2.8M769.3 118.5h2.8M771.6 111.1h2.8M773.5 117.3h2.8M775.4 120.3h2.8M778.7 110.4h2.8M781.8 113.2h2.8M784 121.1h2.8M786.9 116h2.8M790.3 118.6h2.8M792.9 124h2.8M795.4 118h2.8M37.8 41.8h2.8M140.1 71.4h2.8M182.1 85.5h2.8M295.1 62.3h2.8M349.1 94.8h2.8M393.1 83.2h2.8M461.7 88.5h2.8M563.6 92.8h2.8M634.7 89.5h2.8M77.1 98.5h2.8M239.1 101.5h2.8" fill="none" stroke="#5274cd" stroke-width="2.1"/></svg>
<div class="t" style="top:1448.96px;font-size:13.40px;color:#3a5ec2;left:1006.40px;-webkit-text-stroke:0.45px #3a5ec2;">Name</div>
<div class="t" style="top:1448.96px;font-size:13.40px;color:#3a5ec2;left:756.30px;width:1000px;text-align:right;-webkit-text-stroke:0.45px #3a5ec2;">Mean</div>
<div class="t" style="top:1448.96px;font-size:13.40px;color:#3a5ec2;left:824.00px;width:1000px;text-align:right;-webkit-text-stroke:0.45px #3a5ec2;">Max</div>
<div style="position:absolute;left:974.00px;top:1468.00px;width:859.50px;height:1.00px;background:#dcdde0;"></div>
<div style="position:absolute;left:974.00px;top:1492.00px;width:859.50px;height:1.00px;background:#dcdde0;"></div>
<div style="position:absolute;left:974.00px;top:1517.00px;width:859.50px;height:1.00px;background:#dcdde0;"></div>
<div style="position:absolute;left:982.40px;top:1479.20px;width:15.00px;height:4.20px;border-radius:2.1px;background:#5b9a4c;"></div>
<div class="t" style="top:1472.98px;font-size:14.20px;color:#24292e;left:1006.40px;">dm-0</div>
<div class="t" style="top:1473.83px;font-size:13.20px;color:#24292e;left:756.30px;width:1000px;text-align:right;">122 µs</div>
<div class="t" style="top:1473.83px;font-size:13.20px;color:#24292e;left:824.00px;width:1000px;text-align:right;">874 µs</div>
<div style="position:absolute;left:982.40px;top:1503.80px;width:15.00px;height:4.20px;border-radius:2.1px;background:#d6a93a;"></div>
<div class="t" style="top:1497.58px;font-size:14.20px;color:#24292e;left:1006.40px;">vda</div>
<div class="t" style="top:1498.43px;font-size:13.20px;color:#24292e;left:756.30px;width:1000px;text-align:right;">217 µs</div>
<div class="t" style="top:1498.43px;font-size:13.20px;color:#24292e;left:824.00px;width:1000px;text-align:right;">917 µs</div>
<div style="position:absolute;left:982.40px;top:1528.40px;width:15.00px;height:4.20px;border-radius:2.1px;background:#3c6bd6;"></div>
<div class="t" style="top:1522.18px;font-size:14.20px;color:#24292e;left:1006.40px;">vdb</div>
<div class="t" style="top:1523.03px;font-size:13.20px;color:#24292e;left:756.30px;width:1000px;text-align:right;">390 µs</div>
<div class="t" style="top:1523.03px;font-size:13.20px;color:#24292e;left:824.00px;width:1000px;text-align:right;">1.01 ms</div>
<svg style="position:absolute;left:1828.50px;top:1531.50px;" width="12.00" height="12.00" viewBox="0 0 12.00 12.00"><line x1="2" y1="10.5" x2="10.5" y2="2" stroke="#8a8d91" stroke-width="1"/><line x1="6" y1="10.5" x2="10.5" y2="6" stroke="#8a8d91" stroke-width="1"/></svg>
<div style="position:absolute;left:77.00px;top:1636.00px;width:1766.00px;height:154.00px;box-sizing:border-box;background:#fff;border:1px solid #e6e7e9;border-radius:6px;"></div>
<div style="position:absolute;left:86.90px;top:1674.80px;width:1746.10px;height:1.00px;background:#e4e5e7;"></div>
<div style="position:absolute;left:86.90px;top:1713.40px;width:1746.10px;height:1.00px;background:#e4e5e7;"></div>
<div style="position:absolute;left:86.90px;top:1751.60px;width:1746.10px;height:1.00px;background:#e4e5e7;"></div>
<div style="position:absolute;left:492.50px;top:1646.00px;width:1.00px;height:134.50px;background:#e4e5e7;"></div>
<div style="position:absolute;left:899.80px;top:1646.00px;width:1.00px;height:134.50px;background:#e4e5e7;"></div>
<div style="position:absolute;left:1028.20px;top:1646.00px;width:1.00px;height:134.50px;background:#e4e5e7;"></div>
<div style="position:absolute;left:1113.70px;top:1646.00px;width:1.00px;height:134.50px;background:#e4e5e7;"></div>
<div style="position:absolute;left:1199.30px;top:1646.00px;width:1.00px;height:134.50px;background:#e4e5e7;"></div>
<div style="position:absolute;left:1285.90px;top:1646.00px;width:1.00px;height:134.50px;background:#e4e5e7;"></div>
<div style="position:absolute;left:1371.50px;top:1646.00px;width:1.00px;height:134.50px;background:#e4e5e7;"></div>
<div style="position:absolute;left:1457.00px;top:1646.00px;width:1.00px;height:134.50px;background:#e4e5e7;"></div>
<div style="position:absolute;left:1542.50px;top:1646.00px;width:1.00px;height:134.50px;background:#e4e5e7;"></div>
<div style="position:absolute;left:1628.20px;top:1646.00px;width:1.00px;height:134.50px;background:#e4e5e7;"></div>
<div style="position:absolute;left:1724.50px;top:1646.00px;width:1.00px;height:134.50px;background:#e4e5e7;"></div>
<div style="position:absolute;left:1029.50px;top:1675.90px;width:84.70px;height:36.90px;background:#5f875d;"></div>
<div style="position:absolute;left:1029.50px;top:1714.50px;width:84.70px;height:37.10px;background:#5f875d;"></div>
<div style="position:absolute;left:1029.50px;top:1753.10px;width:84.70px;height:27.50px;background:#5f875d;"></div>
<div class="t" style="top:1648.55px;font-size:16.60px;color:#55595f;left:93.80px;">Disk</div>
<div class="t" style="top:1648.55px;font-size:16.60px;color:#55595f;left:499.50px;">Path</div>
<div class="t" style="top:1649.11px;font-size:15.94px;color:#55595f;left:464.50px;width:1000px;text-align:center;">FS</div>
<div class="t" style="top:1649.11px;font-size:15.94px;color:#55595f;left:571.45px;width:1000px;text-align:center;">Readonly</div>
<div class="t" style="top:1649.11px;font-size:15.94px;color:#55595f;left:657.00px;width:1000px;text-align:center;">Usage</div>
<div class="t" style="top:1649.11px;font-size:15.94px;color:#55595f;left:743.10px;width:1000px;text-align:center;">iNode%</div>
<div class="t" style="top:1649.11px;font-size:15.94px;color:#55595f;left:829.20px;width:1000px;text-align:center;">Size</div>
<div class="t" style="top:1649.11px;font-size:15.94px;color:#55595f;left:914.75px;width:1000px;text-align:center;">Free</div>
<div class="t" style="top:1649.11px;font-size:15.94px;color:#55595f;left:1000.25px;width:1000px;text-align:center;">Used</div>
<div class="t" style="top:1649.11px;font-size:15.94px;color:#55595f;left:1085.85px;width:1000px;text-align:center;">iNodes</div>
<div class="t" style="top:1649.11px;font-size:15.94px;color:#55595f;left:1176.85px;width:1000px;text-align:center;">iNode Free</div>
<div class="t" style="top:1649.11px;font-size:15.94px;color:#55595f;left:1279.00px;width:1000px;text-align:center;">iNode Used</div>
<div class="t" style="top:1686.75px;font-size:16.60px;color:#3a5ec2;left:93.80px;">/dev/mapper/ubuntu--vg-ubuntu--lv</div>
<div class="t" style="top:1686.75px;font-size:16.60px;color:#24292e;left:499.50px;">/</div>
<div class="t" style="top:1686.75px;font-size:16.60px;color:#24292e;left:464.50px;width:1000px;text-align:center;">ext4</div>
<div class="t" style="top:1687.76px;font-size:15.40px;color:#ffffff;left:571.45px;width:1000px;text-align:center;-webkit-text-stroke:0.25px #ffffff;">OK</div>
<div class="t" style="top:1686.75px;font-size:16.60px;color:#5d8a58;left:657.00px;width:1000px;text-align:center;">38.66%</div>
<div class="t" style="top:1686.75px;font-size:16.60px;color:#3e5a8c;left:743.10px;width:1000px;text-align:center;">7.24%</div>
<div class="t" style="top:1686.75px;font-size:16.60px;color:#24292e;left:829.20px;width:1000px;text-align:center;">32.6 GB</div>
<div class="t" style="top:1686.75px;font-size:16.60px;color:#24292e;left:914.75px;width:1000px;text-align:center;">20.0 GB</div>
<div class="t" style="top:1686.75px;font-size:16.60px;color:#24292e;left:1000.25px;width:1000px;text-align:center;">12.6 GB</div>
<div class="t" style="top:1686.75px;font-size:16.60px;color:#24292e;left:1085.85px;width:1000px;text-align:center;">2.03 MB</div>
<div class="t" style="top:1686.75px;font-size:16.60px;color:#24292e;left:1176.85px;width:1000px;text-align:center;">1.88 Mil</div>
<div class="t" style="top:1686.75px;font-size:16.60px;color:#24292e;left:1279.00px;width:1000px;text-align:center;">147 K</div>
<div class="t" style="top:1725.25px;font-size:16.60px;color:#3a5ec2;left:93.80px;">/dev/vda2</div>
<div class="t" style="top:1725.25px;font-size:16.60px;color:#24292e;left:499.50px;">/boot</div>
<div class="t" style="top:1725.25px;font-size:16.60px;color:#24292e;left:464.50px;width:1000px;text-align:center;">ext4</div>
<div class="t" style="top:1726.26px;font-size:15.40px;color:#ffffff;left:571.45px;width:1000px;text-align:center;-webkit-text-stroke:0.25px #ffffff;">OK</div>
<div class="t" style="top:1725.25px;font-size:16.60px;color:#5d8a58;left:657.00px;width:1000px;text-align:center;">11.20%</div>
<div class="t" style="top:1725.25px;font-size:16.60px;color:#3e5a8c;left:743.10px;width:1000px;text-align:center;">0.24%</div>
<div class="t" style="top:1725.25px;font-size:16.60px;color:#24292e;left:829.20px;width:1000px;text-align:center;">2.04 GB</div>
<div class="t" style="top:1725.25px;font-size:16.60px;color:#24292e;left:914.75px;width:1000px;text-align:center;">1.81 GB</div>
<div class="t" style="top:1725.25px;font-size:16.60px;color:#24292e;left:1000.25px;width:1000px;text-align:center;">228 MB</div>
<div class="t" style="top:1725.25px;font-size:16.60px;color:#24292e;left:1085.85px;width:1000px;text-align:center;">131 kB</div>
<div class="t" style="top:1725.25px;font-size:16.60px;color:#24292e;left:1176.85px;width:1000px;text-align:center;">131 K</div>
<div class="t" style="top:1725.25px;font-size:16.60px;color:#24292e;left:1279.00px;width:1000px;text-align:center;">317</div>
<div class="t" style="top:1763.75px;font-size:16.60px;color:#3a5ec2;left:93.80px;">/dev/vdb</div>
<div class="t" style="top:1763.75px;font-size:16.60px;color:#24292e;left:499.50px;">/data</div>
<div class="t" style="top:1763.75px;font-size:16.60px;color:#24292e;left:464.50px;width:1000px;text-align:center;">xfs</div>
<div class="t" style="top:1764.76px;font-size:15.40px;color:#ffffff;left:571.45px;width:1000px;text-align:center;-webkit-text-stroke:0.25px #ffffff;">OK</div>
<div class="t" style="top:1763.75px;font-size:16.60px;color:#3e5a8c;left:657.00px;width:1000px;text-align:center;">3.24%</div>
<div class="t" style="top:1763.75px;font-size:16.60px;color:#3e5a8c;left:743.10px;width:1000px;text-align:center;">0.01%</div>
<div class="t" style="top:1763.75px;font-size:16.60px;color:#24292e;left:829.20px;width:1000px;text-align:center;">137 GB</div>
<div class="t" style="top:1763.75px;font-size:16.60px;color:#24292e;left:914.75px;width:1000px;text-align:center;">133 GB</div>
<div class="t" style="top:1763.75px;font-size:16.60px;color:#24292e;left:1000.25px;width:1000px;text-align:center;">4.45 GB</div>
<div class="t" style="top:1763.75px;font-size:16.60px;color:#24292e;left:1085.85px;width:1000px;text-align:center;">67.1 MB</div>
<div class="t" style="top:1763.75px;font-size:16.60px;color:#24292e;left:1176.85px;width:1000px;text-align:center;">67.1 Mil</div>
<div class="t" style="top:1763.75px;font-size:16.60px;color:#24292e;left:1279.00px;width:1000px;text-align:center;">5.48 K</div>
<div style="position:absolute;left:78.70px;top:1780.60px;width:1762.00px;height:7.60px;background:#fff;"></div>
<svg style="position:absolute;left:1827.50px;top:1775.00px;" width="12.00" height="12.00" viewBox="0 0 12.00 12.00"><line x1="2" y1="10.5" x2="10.5" y2="2" stroke="#8a8d91" stroke-width="1"/><line x1="6" y1="10.5" x2="10.5" y2="6" stroke="#8a8d91" stroke-width="1"/></svg>
<div style="position:absolute;left:77.00px;top:1799.00px;width:435.00px;height:300.00px;box-sizing:border-box;background:#fff;border:1px solid #e6e7e9;border-radius:6px;"></div>
<div class="t" style="top:1808.93px;font-size:15.91px;color:#24292e;left:87.30px;-webkit-text-stroke:0.42px #24292e;">Space Usage</div>
<div style="position:absolute;left:77.50px;top:1834.60px;width:434.00px;height:77.40px;background:linear-gradient(100deg,#74a070 0%,#6e9668 55%,#6a8d63 100%);"></div>
<div style="position:absolute;left:77.50px;top:1874.60px;width:434.00px;height:37.40px;background:linear-gradient(100deg,#aec4a9 0%,#a9bea3 100%);"></div>
<div class="t" style="top:1842.28px;font-size:22.70px;color:#ffffff;left:87.50px;">/</div>
<div class="t" style="top:1842.79px;font-size:16.90px;color:#ffffff;left:-498.50px;width:1000px;text-align:right;-webkit-text-stroke:0.45px #ffffff;">38.7%</div>
<div style="position:absolute;left:77.50px;top:1915.60px;width:434.00px;height:77.70px;background:linear-gradient(100deg,#74a070 0%,#6e9668 55%,#6a8d63 100%);"></div>
<div style="position:absolute;left:77.50px;top:1983.80px;width:434.00px;height:9.50px;background:linear-gradient(100deg,#aec4a9 0%,#a9bea3 100%);"></div>
<div class="t" style="top:1923.28px;font-size:22.70px;color:#ffffff;left:87.50px;">/boot</div>
<div class="t" style="top:1923.79px;font-size:16.90px;color:#ffffff;left:-498.50px;width:1000px;text-align:right;-webkit-text-stroke:0.45px #ffffff;">11.2%</div>
<div style="position:absolute;left:77.50px;top:1997.00px;width:434.00px;height:43.00px;background:linear-gradient(100deg,#4e67a3 0%,#4b6797 60%,#486a90 100%);"></div>
<div class="t" style="top:2004.68px;font-size:22.70px;color:#ffffff;left:87.50px;">/data</div>
<div class="t" style="top:2005.19px;font-size:16.90px;color:#ffffff;left:-498.50px;width:1000px;text-align:right;-webkit-text-stroke:0.45px #ffffff;">3.24%</div>
<div style="position:absolute;left:521.00px;top:1799.00px;width:435.00px;height:300.00px;box-sizing:border-box;background:#fff;border:1px solid #e6e7e9;border-radius:6px;"></div>
<div class="t" style="top:1808.92px;font-size:15.92px;color:#24292e;left:531.30px;-webkit-text-stroke:0.42px #24292e;">Avail Space 1D Prediction</div>
<svg style="position:absolute;left:733.00px;top:1809.40px;" width="16.00" height="16.00" viewBox="0 0 16.00 16.00"><circle cx="8" cy="8" r="6.60" fill="none" stroke="#444" stroke-width="1.35"/><line x1="8" y1="7.7" x2="8" y2="10.9" stroke="#444" stroke-width="1.45" stroke-linecap="round"/><circle cx="8" cy="5.0" r="0.9" fill="#444"/></svg>
<div style="position:absolute;left:521.50px;top:1834.60px;width:434.00px;height:77.40px;background:linear-gradient(100deg,#efc28c 0%,#ebae7e 50%,#e38a67 100%);"></div>
<div style="position:absolute;left:521.50px;top:1907.30px;width:434.00px;height:4.70px;background:#f7dcc0;"></div>
<div class="t" style="top:1842.28px;font-size:22.70px;color:#ffffff;left:531.50px;">/</div>
<div class="t" style="top:1845.76px;font-size:13.40px;color:#ffffff;left:-54.50px;width:1000px;text-align:right;-webkit-text-stroke:0.40px #ffffff;">GB</div>
<div class="t" style="top:1843.22px;font-size:16.40px;color:#ffffff;left:-76.86px;width:1000px;text-align:right;-webkit-text-stroke:0.45px #ffffff;">19.2</div>
<div style="position:absolute;left:521.50px;top:1915.60px;width:434.00px;height:77.70px;background:linear-gradient(100deg,#bb9ab8 0%,#b390b6 55%,#ab85b4 100%);"></div>
<div style="position:absolute;left:521.50px;top:1991.30px;width:434.00px;height:2.00px;background:#d8c3d9;"></div>
<div class="t" style="top:1923.28px;font-size:22.70px;color:#ffffff;left:531.50px;">/boot</div>
<div class="t" style="top:1926.76px;font-size:13.40px;color:#ffffff;left:-54.50px;width:1000px;text-align:right;-webkit-text-stroke:0.40px #ffffff;">GB</div>
<div class="t" style="top:1924.22px;font-size:16.40px;color:#ffffff;left:-76.86px;width:1000px;text-align:right;-webkit-text-stroke:0.45px #ffffff;">1.81</div>
<div style="position:absolute;left:521.50px;top:1997.00px;width:434.00px;height:43.00px;background:linear-gradient(100deg,#74a070 0%,#6e9668 55%,#6a8d63 100%);"></div>
<div class="t" style="top:2004.68px;font-size:22.70px;color:#ffffff;left:531.50px;">/data</div>
<div class="t" style="top:2008.16px;font-size:13.40px;color:#ffffff;left:-54.50px;width:1000px;text-align:right;-webkit-text-stroke:0.40px #ffffff;">GB</div>
<div class="t" style="top:2005.62px;font-size:16.40px;color:#ffffff;left:-76.86px;width:1000px;text-align:right;-webkit-text-stroke:0.45px #ffffff;">132</div>
<div style="position:absolute;left:964.00px;top:1799.00px;width:435.00px;height:300.00px;box-sizing:border-box;background:#fff;border:1px solid #e6e7e9;border-radius:6px;"></div>
<div class="t" style="top:1808.74px;font-size:16.14px;color:#24292e;left:974.30px;-webkit-text-stroke:0.42px #24292e;">iNode Usage</div>
<div style="position:absolute;left:964.50px;top:1834.60px;width:434.00px;height:77.40px;background:linear-gradient(100deg,#4e67a3 0%,#4b6797 60%,#486a90 100%);"></div>
<div style="position:absolute;left:964.50px;top:1874.60px;width:434.00px;height:37.40px;background:linear-gradient(100deg,#98a8c8 0%,#94a7c0 100%);"></div>
<div class="t" style="top:1842.28px;font-size:22.70px;color:#ffffff;left:974.50px;">/</div>
<div class="t" style="top:1842.79px;font-size:16.90px;color:#ffffff;left:388.50px;width:1000px;text-align:right;-webkit-text-stroke:0.45px #ffffff;">7.24%</div>
<div style="position:absolute;left:964.50px;top:1915.60px;width:434.00px;height:77.70px;background:linear-gradient(100deg,#4e67a3 0%,#4b6797 60%,#486a90 100%);"></div>
<div style="position:absolute;left:964.50px;top:1991.30px;width:434.00px;height:2.00px;background:#8fa3c9;"></div>
<div class="t" style="top:1923.28px;font-size:22.70px;color:#ffffff;left:974.50px;">/boot</div>
<div class="t" style="top:1923.79px;font-size:16.90px;color:#ffffff;left:388.50px;width:1000px;text-align:right;-webkit-text-stroke:0.45px #ffffff;">0.24%</div>
<div style="position:absolute;left:964.50px;top:1997.00px;width:434.00px;height:43.00px;background:linear-gradient(100deg,#4e67a3 0%,#4b6797 60%,#486a90 100%);"></div>
<div class="t" style="top:2004.68px;font-size:22.70px;color:#ffffff;left:974.50px;">/data</div>
<div class="t" style="top:2005.19px;font-size:16.90px;color:#ffffff;left:388.50px;width:1000px;text-align:right;-webkit-text-stroke:0.45px #ffffff;">0.01%</div>
<div style="position:absolute;left:1408.00px;top:1799.00px;width:435.00px;height:300.00px;box-sizing:border-box;background:#fff;border:1px solid #e6e7e9;border-radius:6px;"></div>
<div class="t" style="top:1808.76px;font-size:16.11px;color:#24292e;left:1418.30px;-webkit-text-stroke:0.42px #24292e;">Device Error</div>
<div style="position:absolute;left:1408.50px;top:1834.60px;width:434.00px;height:77.40px;background:linear-gradient(100deg,#74a070 0%,#6e9668 55%,#6a8d63 100%);"></div>
<div class="t" style="top:1842.28px;font-size:22.70px;color:#ffffff;left:1418.50px;">/</div>
<div class="t" style="top:1842.79px;font-size:16.90px;color:#ffffff;left:832.50px;width:1000px;text-align:right;-webkit-text-stroke:0.45px #ffffff;">0</div>
<div style="position:absolute;left:1408.50px;top:1915.60px;width:434.00px;height:77.70px;background:linear-gradient(100deg,#74a070 0%,#6e9668 55%,#6a8d63 100%);"></div>
<div class="t" style="top:1923.28px;font-size:22.70px;color:#ffffff;left:1418.50px;">/boot</div>
<div class="t" style="top:1923.79px;font-size:16.90px;color:#ffffff;left:832.50px;width:1000px;text-align:right;-webkit-text-stroke:0.45px #ffffff;">0</div>
<div style="position:absolute;left:1408.50px;top:1997.00px;width:434.00px;height:43.00px;background:linear-gradient(100deg,#74a070 0%,#6e9668 55%,#6a8d63 100%);"></div>
<div class="t" style="top:2004.68px;font-size:22.70px;color:#ffffff;left:1418.50px;">/data</div>
<div class="t" style="top:2005.19px;font-size:16.90px;color:#ffffff;left:832.50px;width:1000px;text-align:right;-webkit-text-stroke:0.45px #ffffff;">0</div>
</div></div>
<div style="position:absolute;left:60px;top:40px;width:1800px;height:1993px;border-radius:31px;box-sizing:border-box;border:1px solid rgba(0,0,0,0.06);pointer-events:none"></div>
</body></html>
